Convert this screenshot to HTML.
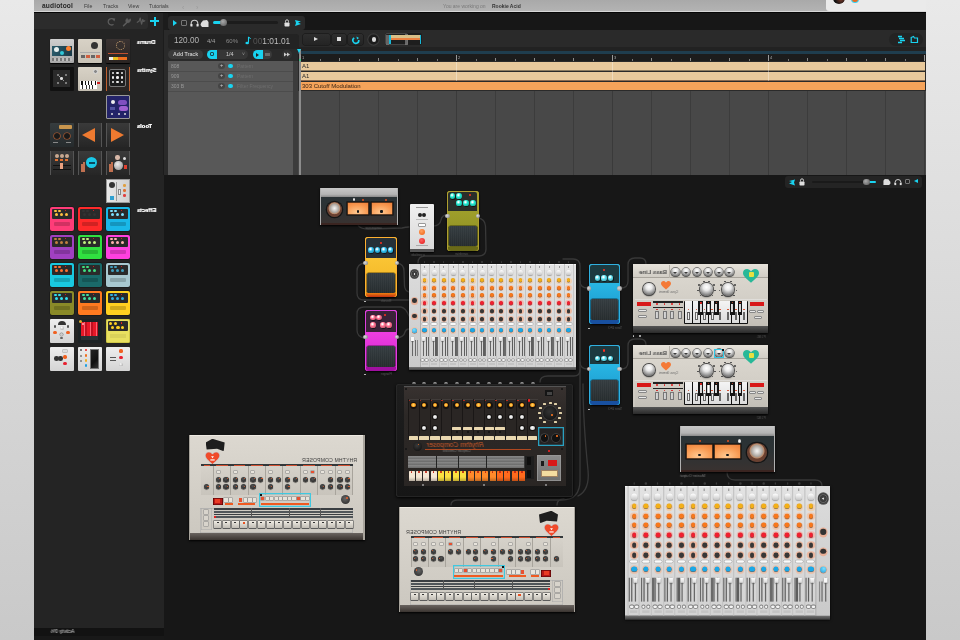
<!DOCTYPE html><html><head><meta charset="utf-8"><style>
*{margin:0;padding:0;box-sizing:border-box}
html,body{width:960px;height:640px;overflow:hidden;background:#d4d4d4;font-family:"Liberation Sans",sans-serif}
body>div,#app div{position:absolute}
body{-webkit-font-smoothing:antialiased}
</style></head><body><div style="left:0px;top:0px;width:960px;height:640px;background:linear-gradient(#e9e9e9 0%,#dcdcdc 40%,#c9c9c9 100%)"></div>
<div style="left:34px;top:0px;width:892px;height:640px;background:#171717"></div>
<div style="left:34px;top:0px;width:892px;height:12px;background:linear-gradient(#a9a9a9,#b3b3b3);border-bottom:1px solid #d6d6d6"></div>
<div style="left:34px;top:12px;width:892px;height:1px;background:#050505"></div>
<div style="left:42px;top:2.8px;font-size:6.6px;color:#262626;line-height:1;white-space:nowrap;will-change:transform;font-weight:bold;letter-spacing:0.15px">audiotool</div>
<div style="left:84px;top:3.8px;font-size:5.2px;color:#3e3e3e;line-height:1;white-space:nowrap;will-change:transform;">File</div>
<div style="left:102.5px;top:3.8px;font-size:5.2px;color:#3e3e3e;line-height:1;white-space:nowrap;will-change:transform;">Tracks</div>
<div style="left:127.5px;top:3.8px;font-size:5.2px;color:#3e3e3e;line-height:1;white-space:nowrap;will-change:transform;">View</div>
<div style="left:149px;top:3.8px;font-size:5.2px;color:#3e3e3e;line-height:1;white-space:nowrap;will-change:transform;">Tutorials</div>
<div style="left:182px;top:3.5px;font-size:7px;color:#9a9a9a;line-height:1;white-space:nowrap;will-change:transform;">&#8249;</div>
<div style="left:196px;top:3.5px;font-size:7px;color:#9a9a9a;line-height:1;white-space:nowrap;will-change:transform;">&#8250;</div>
<div style="left:442.5px;top:4px;font-size:5px;color:#7a7a7a;line-height:1;white-space:nowrap;will-change:transform;">You are working on</div>
<div style="left:491.5px;top:4px;font-size:5px;color:#333;line-height:1;white-space:nowrap;will-change:transform;font-weight:bold;">Rookie Acid</div>
<div style="left:826px;top:0px;width:100px;height:10.5px;background:#eaeaea;border-bottom-left-radius:3px"></div>
<div style="left:833px;top:-8.5px;width:12px;height:12px;border-radius:50%;background:radial-gradient(circle at 65% 60%,#7a3a2a,#111 55%)"></div>
<div style="left:852.2px;top:-3.8px;width:5.6px;height:5.6px;border-radius:50%;background:#e86a20;box-shadow:0 0 0 1px #3ad0f0"></div>
<div style="left:34px;top:13px;width:130px;height:627px;background:#242424"></div>
<div style="left:34px;top:13px;width:113.5px;height:16px;background:#2c2c2c;border-radius:0 3px 3px 0"></div>
<div style="left:163px;top:13px;width:5px;height:162px;background:#1c1c1c"></div>
<div style="left:34px;top:628px;width:130px;height:12px;background:#121212"></div>
<div style="left:34px;top:636px;width:130px;height:4px;background:#181818"></div>
<div style="left:50.8px;top:630.2px;font-size:4.8px;color:#d8d8d8;line-height:1;white-space:nowrap;will-change:transform;transform:scaleX(-1);">Activity 0%</div>
<svg style="position:absolute;left:107px;top:17px" width="9" height="9" viewBox="0 0 9 9"><path d="M7.2 3.2A3.2 3.2 0 1 0 6.5 7.2" fill="none" stroke="#5c5c5c" stroke-width="1.3"/><path d="M5 1.2L8.3 1.6L7.4 4.6Z" fill="#5c5c5c"/></svg>
<svg style="position:absolute;left:121.5px;top:16.5px" width="10" height="10" viewBox="0 0 10 10"><path d="M1.5 8.8L5.2 5.1" stroke="#5c5c5c" stroke-width="1.5" stroke-linecap="round"/><path d="M4.6 5.6A2.6 2.6 0 0 1 5.2 1.4L6.4 3.2 7.6 3 8.2 1.8A2.6 2.6 0 0 1 4.8 5.4" fill="#5c5c5c" stroke="#5c5c5c" stroke-width="0.8"/></svg>
<svg style="position:absolute;left:135.5px;top:16px" width="10" height="10" viewBox="0 0 10 10"><path d="M0.8 6.5L3 5.2 4.2 2 5.6 8.2 6.8 3.5 7.6 5.5 9.2 4.6" fill="none" stroke="#5a5a5a" stroke-width="1.2" stroke-linejoin="round"/></svg>
<div style="left:150.2px;top:20.4px;width:9.2px;height:2px;background:#19d3f0"></div>
<div style="left:153.8px;top:16.8px;width:2px;height:9.2px;background:#19d3f0"></div>
<div style="left:137px;top:40px;font-size:5.8px;color:#ffffff;line-height:1;white-space:nowrap;will-change:transform;font-weight:bold;transform:scaleX(-1);text-shadow:0 0 0.5px #fff">Drums</div>
<div style="left:137px;top:68px;font-size:5.8px;color:#ffffff;line-height:1;white-space:nowrap;will-change:transform;font-weight:bold;transform:scaleX(-1);text-shadow:0 0 0.5px #fff">Synths</div>
<div style="left:137px;top:124px;font-size:5.8px;color:#ffffff;line-height:1;white-space:nowrap;will-change:transform;font-weight:bold;transform:scaleX(-1);text-shadow:0 0 0.5px #fff">Tools</div>
<div style="left:137px;top:208px;font-size:5.8px;color:#ffffff;line-height:1;white-space:nowrap;will-change:transform;font-weight:bold;transform:scaleX(-1);text-shadow:0 0 0.5px #fff">Effects</div>
<div style="left:49.5px;top:38.5px;width:24px;height:24px;background:linear-gradient(#cfcfcf,#a8a8a8);border-radius:1px;box-shadow:0 1px 1px #000"><div style="position:absolute;left:2px;top:7px;width:20px;height:10px;background:linear-gradient(90deg,#2a5a6a,#1a3a48)"></div><div style="position:absolute;left:4.5px;top:8.5px;width:5.0px;height:5.0px;border-radius:50%;background:#e8f0f0"></div><div style="position:absolute;left:16.5px;top:7.5px;width:5.0px;height:5.0px;border-radius:50%;background:#ff8030"></div><div style="position:absolute;left:10px;top:12px;width:4px;height:4px;border-radius:50%;background:#30c8d8"></div><div style="position:absolute;left:2px;top:19px;width:20px;height:3px;background:repeating-linear-gradient(90deg,#777 0 2px,#bbb 2px 4px)"></div></div>
<div style="left:77.5px;top:38.5px;width:24px;height:24px;background:linear-gradient(#d8d2c6,#c8c2b6);border-radius:1px;box-shadow:0 1px 1px #000"><div style="position:absolute;left:13.5px;top:3.5px;width:7.0px;height:7.0px;border-radius:50%;background:#333"></div><div style="position:absolute;left:2px;top:13px;width:20px;height:1px;background:#aaa"></div><div style="position:absolute;left:3px;top:16px;width:4px;height:3px;background:#666"></div><div style="position:absolute;left:8px;top:16px;width:4px;height:3px;background:#d06040"></div><div style="position:absolute;left:13px;top:16px;width:4px;height:3px;background:#666"></div><div style="position:absolute;left:18px;top:16px;width:4px;height:3px;background:#d06040"></div></div>
<div style="left:105.5px;top:38.5px;width:24px;height:24px;background:linear-gradient(#3a3332,#2a2422);border-radius:1px;box-shadow:0 1px 1px #000"><div style="position:absolute;left:10.5px;top:2.5px;width:9.0px;height:9.0px;border-radius:50%;border:1.5px dotted #c8a070;"></div><div style="position:absolute;left:2px;top:14.5px;width:20px;height:1px;background:#c05030"></div><div style="position:absolute;left:3px;top:18px;width:18px;height:3.5px;background:linear-gradient(90deg,#eee 0 20%,#e8c020 20% 50%,#f07020 50%)"></div></div>
<div style="left:49.5px;top:66.5px;width:24px;height:24px;background:#111;border-radius:1px"><div style="position:absolute;left:3.5px;top:3.5px;width:17px;height:17px;background:#2a2a2a"></div><div style="position:absolute;left:7px;top:7px;width:2px;height:2px;border-radius:50%;background:#999"></div><div style="position:absolute;left:15px;top:7px;width:2px;height:2px;border-radius:50%;background:#999"></div><div style="position:absolute;left:10.7px;top:10.7px;width:2.6px;height:2.6px;border-radius:50%;background:#ddd"></div><div style="position:absolute;left:7px;top:15px;width:2px;height:2px;border-radius:50%;background:#999"></div><div style="position:absolute;left:15px;top:15px;width:2px;height:2px;border-radius:50%;background:#999"></div><div style="position:absolute;left:9.2px;top:9.2px;width:1.6px;height:1.6px;border-radius:50%;background:#bbb"></div><div style="position:absolute;left:13.2px;top:13.2px;width:1.6px;height:1.6px;border-radius:50%;background:#bbb"></div></div>
<div style="left:77.5px;top:66.5px;width:24px;height:24px;background:linear-gradient(#d8d2c6,#c4beb2);border-radius:1px"><div style="position:absolute;left:15.5px;top:2.5px;width:5.0px;height:5.0px;border-radius:50%;background:#888;border:1px solid #ddd"></div><div style="position:absolute;left:2px;top:14px;width:17px;height:8px;background:repeating-linear-gradient(90deg,#fff 0 2.5px,#333 2.5px 3.3px)"></div><div style="position:absolute;left:2px;top:14px;width:17px;height:4.5px;background:repeating-linear-gradient(90deg,#fff 0 1.5px,#111 1.5px 2.6px,#fff 2.6px 3.3px)"></div><div style="position:absolute;left:19.5px;top:15px;width:3px;height:2px;background:#d02020"></div></div>
<div style="left:105.5px;top:66.5px;width:24px;height:24px;background:#2a2624;border-left:1.5px solid #c06030;border-right:1.5px solid #c06030"><div style="position:absolute;left:2px;top:2px;width:17px;height:18px;background:#1c1c1c;border:1.5px solid #777;border-radius:2px"></div><div style="position:absolute;left:5.3px;top:5.3px;width:2.4px;height:2.4px;border-radius:50%;background:#eee"></div><div style="position:absolute;left:5.3px;top:9.8px;width:2.4px;height:2.4px;border-radius:50%;background:#eee"></div><div style="position:absolute;left:5.3px;top:14.3px;width:2.4px;height:2.4px;border-radius:50%;background:#eee"></div><div style="position:absolute;left:9.8px;top:5.3px;width:2.4px;height:2.4px;border-radius:50%;background:#eee"></div><div style="position:absolute;left:9.8px;top:9.8px;width:2.4px;height:2.4px;border-radius:50%;background:#eee"></div><div style="position:absolute;left:9.8px;top:14.3px;width:2.4px;height:2.4px;border-radius:50%;background:#eee"></div><div style="position:absolute;left:14.3px;top:5.3px;width:2.4px;height:2.4px;border-radius:50%;background:#eee"></div><div style="position:absolute;left:14.3px;top:9.8px;width:2.4px;height:2.4px;border-radius:50%;background:#eee"></div><div style="position:absolute;left:14.3px;top:14.3px;width:2.4px;height:2.4px;border-radius:50%;background:#eee"></div></div>
<div style="left:105.5px;top:94.5px;width:24px;height:24px;background:#232368;border:1.5px solid #999;border-radius:1px"><div style="position:absolute;left:4px;top:4px;width:4px;height:4px;border-radius:50%;background:#eee"></div><div style="position:absolute;left:11px;top:4px;width:9px;height:5px;background:#8050c0;border-radius:3px"></div><div style="position:absolute;left:12px;top:10px;width:9px;height:5px;background:#a060d0;border-radius:3px"></div><div style="position:absolute;left:3px;top:11px;width:5px;height:3px;background:#5050a0"></div><div style="position:absolute;left:4px;top:17px;width:2px;height:2px;border-radius:50%;background:#ddd"></div><div style="position:absolute;left:11px;top:17px;width:2px;height:2px;border-radius:50%;background:#ddd"></div><div style="position:absolute;left:17px;top:17px;width:2px;height:2px;border-radius:50%;background:#ddd"></div></div>
<div style="left:49.5px;top:122.5px;width:24px;height:24px;background:linear-gradient(#363c3e,#262b2d);border-radius:1px"><div style="position:absolute;left:9px;top:2px;width:13px;height:4px;background:#d8a050;border-radius:1px;opacity:0.9"></div><div style="position:absolute;left:4px;top:10px;width:6px;height:6px;border-radius:50%;background:#1a1a1a;box-shadow:0 0 0 0.6px #c06030"></div><div style="position:absolute;left:14px;top:10px;width:6px;height:6px;border-radius:50%;background:#1a1a1a;box-shadow:0 0 0 0.6px #c06030"></div><div style="position:absolute;left:3px;top:19px;width:5px;height:1.5px;background:#888"></div><div style="position:absolute;left:16px;top:19px;width:5px;height:1.5px;background:#888"></div></div>
<div style="left:77.5px;top:122.5px;width:24px;height:24px;background:linear-gradient(#3a3a3a,#262626);border-left:1.5px solid #555;border-right:1.5px solid #555"><div style="position:absolute;left:3px;top:5px;width:0;height:0;border-right:13px solid #ee7a30;border-top:7px solid transparent;border-bottom:7px solid transparent"></div></div>
<div style="left:105.5px;top:122.5px;width:24px;height:24px;background:linear-gradient(#3a3a3a,#262626);border-left:1.5px solid #555;border-right:1.5px solid #555"><div style="position:absolute;left:4px;top:5px;width:0;height:0;border-left:13px solid #ee7a30;border-top:7px solid transparent;border-bottom:7px solid transparent"></div></div>
<div style="left:49.5px;top:150.5px;width:24px;height:24px;background:linear-gradient(#3a3a3a,#262626);border-left:1.5px solid #555;border-right:1.5px solid #555"><div style="position:absolute;left:4px;top:3px;width:4px;height:4px;border-radius:50%;background:#c8a890"></div><div style="position:absolute;left:9px;top:3px;width:4px;height:4px;border-radius:50%;background:#c8a890"></div><div style="position:absolute;left:14px;top:3px;width:4px;height:4px;border-radius:50%;background:#c8a890"></div><div style="position:absolute;left:4px;top:8.5px;width:3px;height:2px;background:#e07030"></div><div style="position:absolute;left:9.5px;top:8.5px;width:3px;height:2px;background:#e07030"></div><div style="position:absolute;left:14.5px;top:8.5px;width:3px;height:2px;background:#e07030"></div><div style="position:absolute;left:2px;top:14px;width:18px;height:1px;background:#111"></div><div style="position:absolute;left:9.5px;top:12px;width:3px;height:6px;background:#e8a080"></div><div style="position:absolute;left:2px;top:18px;width:18px;height:1px;background:#111"></div></div>
<div style="left:77.5px;top:150.5px;width:24px;height:24px;background:linear-gradient(#3a3a3a,#262626);border-left:1.5px solid #555;border-right:1.5px solid #555"><div style="position:absolute;left:2px;top:13px;width:2px;height:8px;background:#c07050"></div><div style="position:absolute;left:4.5px;top:11px;width:2px;height:10px;background:#c07050"></div><div style="position:absolute;left:7.5px;top:6.5px;width:11.0px;height:11.0px;border-radius:50%;background:#19c8e8"></div><div style="position:absolute;left:10px;top:11px;width:6px;height:2px;background:#0a4a60"></div></div>
<div style="left:105.5px;top:150.5px;width:24px;height:24px;background:linear-gradient(#3a3a3a,#262626);border-left:1.5px solid #555;border-right:1.5px solid #555"><div style="position:absolute;left:2px;top:13px;width:2px;height:8px;background:#c07050"></div><div style="position:absolute;left:4.5px;top:11px;width:2px;height:10px;background:#c07050"></div><div style="position:absolute;left:8.8px;top:4.8px;width:4.4px;height:4.4px;border-radius:50%;background:#d8b8a8"></div><div style="position:absolute;left:7.8px;top:10.8px;width:8.4px;height:8.4px;border-radius:50%;background:radial-gradient(circle at 40% 35%,#eee,#888)"></div><div style="position:absolute;left:16.5px;top:6.5px;width:3.0px;height:3.0px;border-radius:50%;background:#ddd"></div><div style="position:absolute;left:17px;top:14px;width:3px;height:4px;background:#e04030"></div></div>
<div style="left:105.5px;top:178.5px;width:24px;height:24px;background:linear-gradient(90deg,#e8e8e8,#d0d0d0);border:1px solid #999"><div style="position:absolute;left:2px;top:2px;width:6px;height:6px;border-radius:50%;background:#333"></div><div style="position:absolute;left:9px;top:2px;width:1px;height:19px;background:#999"></div><div style="position:absolute;left:11px;top:9px;width:3px;height:6px;background:#eee;border:1px solid #888"></div><div style="position:absolute;left:16.7px;top:4.7px;width:2.6px;height:2.6px;border-radius:50%;background:#e0a040"></div><div style="position:absolute;left:16.7px;top:9.7px;width:2.6px;height:2.6px;border-radius:50%;background:#e07030"></div><div style="position:absolute;left:16.7px;top:14.7px;width:2.6px;height:2.6px;border-radius:50%;background:#e04040"></div><div style="position:absolute;left:3px;top:16px;width:4px;height:4px;background:#30a0d0"></div></div>
<div style="left:49.5px;top:206.5px;width:24px;height:24px;background:#ff3c78;border-radius:2px;box-shadow:0 0 0 0.5px rgba(0,0,0,0.5)"><div style="position:absolute;left:2px;top:2px;width:20px;height:10px;background:#2a2a2a;border-radius:1px"></div><div style="position:absolute;left:5.2px;top:6.2px;width:3.6px;height:3.6px;border-radius:50%;background:#ffc040"></div><div style="position:absolute;left:10.2px;top:6.2px;width:3.6px;height:3.6px;border-radius:50%;background:#ffc040"></div><div style="position:absolute;left:15.2px;top:6.2px;width:3.6px;height:3.6px;border-radius:50%;background:#ffc040"></div><div style="position:absolute;left:4.8px;top:3.3px;width:2.4px;height:2.4px;border-radius:50%;background:#ffc040"></div><div style="position:absolute;left:8.8px;top:3.3px;width:2.4px;height:2.4px;border-radius:50%;background:#ffc040"></div><div style="position:absolute;left:15.2px;top:3.2px;width:1.6px;height:1.6px;border-radius:50%;background:#ff2020"></div><div style="position:absolute;left:4px;top:15px;width:16px;height:4px;background:rgba(0,0,0,0.18);border-radius:1px"></div></div>
<div style="left:77.5px;top:206.5px;width:24px;height:24px;background:#ff2a2a;border-radius:2px;box-shadow:0 0 0 0.5px rgba(0,0,0,0.5)"><div style="position:absolute;left:2px;top:2px;width:20px;height:10px;background:#2a2a2a;border-radius:1px"></div><div style="position:absolute;left:5.2px;top:6.2px;width:3.6px;height:3.6px;border-radius:50%;background:#333"></div><div style="position:absolute;left:10.2px;top:6.2px;width:3.6px;height:3.6px;border-radius:50%;background:#333"></div><div style="position:absolute;left:15.2px;top:6.2px;width:3.6px;height:3.6px;border-radius:50%;background:#333"></div><div style="position:absolute;left:4.8px;top:3.3px;width:2.4px;height:2.4px;border-radius:50%;background:#333"></div><div style="position:absolute;left:8.8px;top:3.3px;width:2.4px;height:2.4px;border-radius:50%;background:#333"></div><div style="position:absolute;left:15.2px;top:3.2px;width:1.6px;height:1.6px;border-radius:50%;background:#ff2020"></div><div style="position:absolute;left:4px;top:15px;width:16px;height:4px;background:rgba(0,0,0,0.18);border-radius:1px"></div></div>
<div style="left:105.5px;top:206.5px;width:24px;height:24px;background:#19b8e8;border-radius:2px;box-shadow:0 0 0 0.5px rgba(0,0,0,0.5)"><div style="position:absolute;left:2px;top:2px;width:20px;height:10px;background:#2a2a2a;border-radius:1px"></div><div style="position:absolute;left:5.2px;top:6.2px;width:3.6px;height:3.6px;border-radius:50%;background:#7de0ff"></div><div style="position:absolute;left:10.2px;top:6.2px;width:3.6px;height:3.6px;border-radius:50%;background:#7de0ff"></div><div style="position:absolute;left:15.2px;top:6.2px;width:3.6px;height:3.6px;border-radius:50%;background:#7de0ff"></div><div style="position:absolute;left:4.8px;top:3.3px;width:2.4px;height:2.4px;border-radius:50%;background:#7de0ff"></div><div style="position:absolute;left:8.8px;top:3.3px;width:2.4px;height:2.4px;border-radius:50%;background:#7de0ff"></div><div style="position:absolute;left:15.2px;top:3.2px;width:1.6px;height:1.6px;border-radius:50%;background:#ff2020"></div><div style="position:absolute;left:4px;top:15px;width:16px;height:4px;background:rgba(0,0,0,0.18);border-radius:1px"></div></div>
<div style="left:49.5px;top:234.5px;width:24px;height:24px;background:#a040c0;border-radius:2px;box-shadow:0 0 0 0.5px rgba(0,0,0,0.5)"><div style="position:absolute;left:2px;top:2px;width:20px;height:10px;background:#2a2a2a;border-radius:1px"></div><div style="position:absolute;left:5.2px;top:6.2px;width:3.6px;height:3.6px;border-radius:50%;background:#c08040"></div><div style="position:absolute;left:10.2px;top:6.2px;width:3.6px;height:3.6px;border-radius:50%;background:#c08040"></div><div style="position:absolute;left:15.2px;top:6.2px;width:3.6px;height:3.6px;border-radius:50%;background:#c08040"></div><div style="position:absolute;left:4.8px;top:3.3px;width:2.4px;height:2.4px;border-radius:50%;background:#c08040"></div><div style="position:absolute;left:8.8px;top:3.3px;width:2.4px;height:2.4px;border-radius:50%;background:#c08040"></div><div style="position:absolute;left:15.2px;top:3.2px;width:1.6px;height:1.6px;border-radius:50%;background:#ff2020"></div><div style="position:absolute;left:4px;top:15px;width:16px;height:4px;background:rgba(0,0,0,0.18);border-radius:1px"></div></div>
<div style="left:77.5px;top:234.5px;width:24px;height:24px;background:#30e040;border-radius:2px;box-shadow:0 0 0 0.5px rgba(0,0,0,0.5)"><div style="position:absolute;left:2px;top:2px;width:20px;height:10px;background:#2a2a2a;border-radius:1px"></div><div style="position:absolute;left:5.2px;top:6.2px;width:3.6px;height:3.6px;border-radius:50%;background:#c0f080"></div><div style="position:absolute;left:10.2px;top:6.2px;width:3.6px;height:3.6px;border-radius:50%;background:#c0f080"></div><div style="position:absolute;left:15.2px;top:6.2px;width:3.6px;height:3.6px;border-radius:50%;background:#c0f080"></div><div style="position:absolute;left:4.8px;top:3.3px;width:2.4px;height:2.4px;border-radius:50%;background:#c0f080"></div><div style="position:absolute;left:8.8px;top:3.3px;width:2.4px;height:2.4px;border-radius:50%;background:#c0f080"></div><div style="position:absolute;left:15.2px;top:3.2px;width:1.6px;height:1.6px;border-radius:50%;background:#ff2020"></div><div style="position:absolute;left:4px;top:15px;width:16px;height:4px;background:rgba(0,0,0,0.18);border-radius:1px"></div></div>
<div style="left:105.5px;top:234.5px;width:24px;height:24px;background:#ff40e0;border-radius:2px;box-shadow:0 0 0 0.5px rgba(0,0,0,0.5)"><div style="position:absolute;left:2px;top:2px;width:20px;height:10px;background:#2a2a2a;border-radius:1px"></div><div style="position:absolute;left:5.2px;top:6.2px;width:3.6px;height:3.6px;border-radius:50%;background:#ffb0b0"></div><div style="position:absolute;left:10.2px;top:6.2px;width:3.6px;height:3.6px;border-radius:50%;background:#ffb0b0"></div><div style="position:absolute;left:15.2px;top:6.2px;width:3.6px;height:3.6px;border-radius:50%;background:#ffb0b0"></div><div style="position:absolute;left:4.8px;top:3.3px;width:2.4px;height:2.4px;border-radius:50%;background:#ffb0b0"></div><div style="position:absolute;left:8.8px;top:3.3px;width:2.4px;height:2.4px;border-radius:50%;background:#ffb0b0"></div><div style="position:absolute;left:15.2px;top:3.2px;width:1.6px;height:1.6px;border-radius:50%;background:#ff2020"></div><div style="position:absolute;left:4px;top:15px;width:16px;height:4px;background:rgba(0,0,0,0.18);border-radius:1px"></div></div>
<div style="left:49.5px;top:262.5px;width:24px;height:24px;background:#19c8e0;border-radius:2px;box-shadow:0 0 0 0.5px rgba(0,0,0,0.5)"><div style="position:absolute;left:2px;top:2px;width:20px;height:10px;background:#2a2a2a;border-radius:1px"></div><div style="position:absolute;left:5.2px;top:6.2px;width:3.6px;height:3.6px;border-radius:50%;background:#ff7030"></div><div style="position:absolute;left:10.2px;top:6.2px;width:3.6px;height:3.6px;border-radius:50%;background:#ff7030"></div><div style="position:absolute;left:15.2px;top:6.2px;width:3.6px;height:3.6px;border-radius:50%;background:#ff7030"></div><div style="position:absolute;left:4.8px;top:3.3px;width:2.4px;height:2.4px;border-radius:50%;background:#ff7030"></div><div style="position:absolute;left:8.8px;top:3.3px;width:2.4px;height:2.4px;border-radius:50%;background:#ff7030"></div><div style="position:absolute;left:15.2px;top:3.2px;width:1.6px;height:1.6px;border-radius:50%;background:#ff2020"></div><div style="position:absolute;left:4px;top:15px;width:16px;height:4px;background:rgba(0,0,0,0.18);border-radius:1px"></div></div>
<div style="left:77.5px;top:262.5px;width:24px;height:24px;background:#1a6a6a;border-radius:2px;box-shadow:0 0 0 0.5px rgba(0,0,0,0.5)"><div style="position:absolute;left:2px;top:2px;width:20px;height:10px;background:#2a2a2a;border-radius:1px"></div><div style="position:absolute;left:5.2px;top:6.2px;width:3.6px;height:3.6px;border-radius:50%;background:#40e080"></div><div style="position:absolute;left:10.2px;top:6.2px;width:3.6px;height:3.6px;border-radius:50%;background:#40e080"></div><div style="position:absolute;left:15.2px;top:6.2px;width:3.6px;height:3.6px;border-radius:50%;background:#40e080"></div><div style="position:absolute;left:4.8px;top:3.3px;width:2.4px;height:2.4px;border-radius:50%;background:#40e080"></div><div style="position:absolute;left:8.8px;top:3.3px;width:2.4px;height:2.4px;border-radius:50%;background:#40e080"></div><div style="position:absolute;left:15.2px;top:3.2px;width:1.6px;height:1.6px;border-radius:50%;background:#ff2020"></div><div style="position:absolute;left:4px;top:15px;width:16px;height:4px;background:rgba(0,0,0,0.18);border-radius:1px"></div></div>
<div style="left:105.5px;top:262.5px;width:24px;height:24px;background:#a8c8d0;border-radius:2px;box-shadow:0 0 0 0.5px rgba(0,0,0,0.5)"><div style="position:absolute;left:2px;top:2px;width:20px;height:10px;background:#2a2a2a;border-radius:1px"></div><div style="position:absolute;left:5.2px;top:6.2px;width:3.6px;height:3.6px;border-radius:50%;background:#40a0c0"></div><div style="position:absolute;left:10.2px;top:6.2px;width:3.6px;height:3.6px;border-radius:50%;background:#40a0c0"></div><div style="position:absolute;left:15.2px;top:6.2px;width:3.6px;height:3.6px;border-radius:50%;background:#40a0c0"></div><div style="position:absolute;left:4.8px;top:3.3px;width:2.4px;height:2.4px;border-radius:50%;background:#40a0c0"></div><div style="position:absolute;left:8.8px;top:3.3px;width:2.4px;height:2.4px;border-radius:50%;background:#40a0c0"></div><div style="position:absolute;left:15.2px;top:3.2px;width:1.6px;height:1.6px;border-radius:50%;background:#ff2020"></div><div style="position:absolute;left:4px;top:15px;width:16px;height:4px;background:rgba(0,0,0,0.18);border-radius:1px"></div></div>
<div style="left:49.5px;top:290.5px;width:24px;height:24px;background:#8a8a28;border-radius:2px;box-shadow:0 0 0 0.5px rgba(0,0,0,0.5)"><div style="position:absolute;left:2px;top:2px;width:20px;height:10px;background:#2a2a2a;border-radius:1px"></div><div style="position:absolute;left:5.2px;top:6.2px;width:3.6px;height:3.6px;border-radius:50%;background:#30e0f0"></div><div style="position:absolute;left:10.2px;top:6.2px;width:3.6px;height:3.6px;border-radius:50%;background:#30e0f0"></div><div style="position:absolute;left:15.2px;top:6.2px;width:3.6px;height:3.6px;border-radius:50%;background:#30e0f0"></div><div style="position:absolute;left:4.8px;top:3.3px;width:2.4px;height:2.4px;border-radius:50%;background:#30e0f0"></div><div style="position:absolute;left:8.8px;top:3.3px;width:2.4px;height:2.4px;border-radius:50%;background:#30e0f0"></div><div style="position:absolute;left:15.2px;top:3.2px;width:1.6px;height:1.6px;border-radius:50%;background:#ff2020"></div><div style="position:absolute;left:4px;top:15px;width:16px;height:4px;background:rgba(0,0,0,0.18);border-radius:1px"></div></div>
<div style="left:77.5px;top:290.5px;width:24px;height:24px;background:#ff7a20;border-radius:2px;box-shadow:0 0 0 0.5px rgba(0,0,0,0.5)"><div style="position:absolute;left:2px;top:2px;width:20px;height:10px;background:#2a2a2a;border-radius:1px"></div><div style="position:absolute;left:5.2px;top:6.2px;width:3.6px;height:3.6px;border-radius:50%;background:#40e0a0"></div><div style="position:absolute;left:10.2px;top:6.2px;width:3.6px;height:3.6px;border-radius:50%;background:#40e0a0"></div><div style="position:absolute;left:15.2px;top:6.2px;width:3.6px;height:3.6px;border-radius:50%;background:#40e0a0"></div><div style="position:absolute;left:4.8px;top:3.3px;width:2.4px;height:2.4px;border-radius:50%;background:#40e0a0"></div><div style="position:absolute;left:8.8px;top:3.3px;width:2.4px;height:2.4px;border-radius:50%;background:#40e0a0"></div><div style="position:absolute;left:15.2px;top:3.2px;width:1.6px;height:1.6px;border-radius:50%;background:#ff2020"></div><div style="position:absolute;left:4px;top:15px;width:16px;height:4px;background:rgba(0,0,0,0.18);border-radius:1px"></div></div>
<div style="left:105.5px;top:290.5px;width:24px;height:24px;background:#ffd020;border-radius:2px;box-shadow:0 0 0 0.5px rgba(0,0,0,0.5)"><div style="position:absolute;left:2px;top:2px;width:20px;height:10px;background:#2a2a2a;border-radius:1px"></div><div style="position:absolute;left:5.2px;top:6.2px;width:3.6px;height:3.6px;border-radius:50%;background:#30b0e0"></div><div style="position:absolute;left:10.2px;top:6.2px;width:3.6px;height:3.6px;border-radius:50%;background:#30b0e0"></div><div style="position:absolute;left:15.2px;top:6.2px;width:3.6px;height:3.6px;border-radius:50%;background:#30b0e0"></div><div style="position:absolute;left:4.8px;top:3.3px;width:2.4px;height:2.4px;border-radius:50%;background:#30b0e0"></div><div style="position:absolute;left:8.8px;top:3.3px;width:2.4px;height:2.4px;border-radius:50%;background:#30b0e0"></div><div style="position:absolute;left:15.2px;top:3.2px;width:1.6px;height:1.6px;border-radius:50%;background:#ff2020"></div><div style="position:absolute;left:4px;top:15px;width:16px;height:4px;background:rgba(0,0,0,0.18);border-radius:1px"></div></div>
<div style="left:49.5px;top:318.5px;width:24px;height:24px;background:linear-gradient(#eee,#d4d4d4);border-radius:1px"><div style="position:absolute;left:8px;top:2px;width:8px;height:4px;background:#333;border-radius:4px 4px 0 0"></div><div style="position:absolute;left:4.2px;top:6.7px;width:2.6px;height:2.6px;border-radius:50%;background:#555"></div><div style="position:absolute;left:17.2px;top:6.7px;width:2.6px;height:2.6px;border-radius:50%;background:#555"></div><div style="position:absolute;left:10px;top:7.5px;width:4px;height:4px;border-radius:50%;background:radial-gradient(circle at 40% 35%,#fff,#999)"></div><div style="position:absolute;left:3.8px;top:12.3px;width:3.4px;height:3.4px;border-radius:50%;background:#f06020"></div><div style="position:absolute;left:16.8px;top:12.3px;width:3.4px;height:3.4px;border-radius:50%;background:#f06020"></div><div style="position:absolute;left:10.5px;top:14.0px;width:3.0px;height:3.0px;border-radius:50%;background:#ccc;box-shadow:0 0 0 0.5px #888"></div><div style="position:absolute;left:10.8px;top:18.3px;width:2.4px;height:2.4px;border-radius:50%;background:#666"></div></div>
<div style="left:77.5px;top:318.5px;width:24px;height:24px;background:#1c2224;border-radius:1px"><div style="position:absolute;left:3.5px;top:3.5px;width:17px;height:14px;background:repeating-linear-gradient(90deg,#e81828 0 3px,#ff6070 3px 4px,#c01020 4px 6px)"></div><div style="position:absolute;left:3.5px;top:17.5px;width:17px;height:4px;background:#2a3034"></div><div style="position:absolute;left:1.0px;top:1.0px;width:3.0px;height:3.0px;border-radius:50%;background:#e0b030"></div><div style="position:absolute;left:4px;top:4.5px;width:2px;height:2px;border-radius:50%;background:#fff;opacity:0.7"></div></div>
<div style="left:105.5px;top:318.5px;width:24px;height:24px;background:#e8e060;border-radius:2px;box-shadow:inset 0 0 0 0.8px #c8c040"><div style="position:absolute;left:2px;top:2px;width:20px;height:10px;background:#2a2a2a;border-radius:1px"></div><div style="position:absolute;left:3.5px;top:3.5px;width:3.0px;height:3.0px;border-radius:50%;background:#ffd020"></div><div style="position:absolute;left:8.0px;top:3.5px;width:3.0px;height:3.0px;border-radius:50%;background:#ffd020"></div><div style="position:absolute;left:5.4px;top:7.4px;width:3.2px;height:3.2px;border-radius:50%;background:#ffd020"></div><div style="position:absolute;left:10.9px;top:7.4px;width:3.2px;height:3.2px;border-radius:50%;background:#ffd020"></div><div style="position:absolute;left:15.4px;top:7.4px;width:3.2px;height:3.2px;border-radius:50%;background:#ffd020"></div><div style="position:absolute;left:15.2px;top:3.7px;width:1.6px;height:1.6px;border-radius:50%;background:#ff2020"></div><div style="position:absolute;left:4px;top:15px;width:16px;height:4px;background:rgba(0,0,0,0.06)"></div></div>
<div style="left:49.5px;top:346.5px;width:24px;height:24px;background:linear-gradient(#eee,#d4d4d4);border-radius:1px"><div style="position:absolute;left:4.7px;top:9.7px;width:4.6px;height:4.6px;border-radius:50%;background:#333"></div><div style="position:absolute;left:8.7px;top:9.7px;width:4.6px;height:4.6px;border-radius:50%;background:#333"></div><div style="position:absolute;left:13.5px;top:3px;width:4px;height:2.5px;background:#ddd;box-shadow:0 0 0 0.5px #999"></div><div style="position:absolute;left:13.8px;top:8.8px;width:3.4px;height:3.4px;border-radius:50%;background:#f06020"></div><div style="position:absolute;left:13.8px;top:15.3px;width:3.4px;height:3.4px;border-radius:50%;background:#e82030"></div></div>
<div style="left:77.5px;top:346.5px;width:24px;height:24px;background:linear-gradient(#eee,#d4d4d4);border-radius:1px"><div style="position:absolute;left:12.5px;top:2px;width:9px;height:20px;background:linear-gradient(135deg,#222,#111 60%,#333);border:1px solid #777"></div><div style="position:absolute;left:2.5px;top:2.5px;width:2px;height:2px;border-radius:50%;background:#555"></div><div style="position:absolute;left:2.5px;top:8px;width:2px;height:2px;border-radius:50%;background:#777"></div><div style="position:absolute;left:2.5px;top:13px;width:2px;height:2px;border-radius:50%;background:#777"></div><div style="position:absolute;left:7.3px;top:2.3px;width:2.4px;height:2.4px;border-radius:50%;background:#e82020"></div><div style="position:absolute;left:7.3px;top:7.8px;width:2.4px;height:2.4px;border-radius:50%;background:#f07020"></div><div style="position:absolute;left:7.3px;top:12.8px;width:2.4px;height:2.4px;border-radius:50%;background:#f0b020"></div><div style="position:absolute;left:7.3px;top:17.8px;width:2.4px;height:2.4px;border-radius:50%;background:#20a0e0"></div></div>
<div style="left:105.5px;top:346.5px;width:24px;height:24px;background:linear-gradient(#eee,#d4d4d4);border-radius:1px"><div style="position:absolute;left:13.9px;top:2.9px;width:3.2px;height:3.2px;border-radius:50%;background:#f06020"></div><div style="position:absolute;left:13.9px;top:9.4px;width:3.2px;height:3.2px;border-radius:50%;background:#e82030"></div><div style="position:absolute;left:13.8px;top:16.3px;width:3.4px;height:3.4px;border-radius:50%;background:radial-gradient(circle at 40% 35%,#fff,#999)"></div><div style="position:absolute;left:4px;top:10px;width:6px;height:1px;background:#555"></div><div style="position:absolute;left:4px;top:13px;width:6px;height:1px;background:#555"></div></div>
<div style="left:168px;top:16px;width:137px;height:14px;background:#2a2a2a;border-radius:3px"></div>
<div style="left:164px;top:30px;width:762px;height:145px;background:#2a2a2a"></div>
<div style="left:168px;top:34px;width:131px;height:15px;background:#232323;border-radius:3px"></div>
<div style="left:168px;top:61px;width:125px;height:114px;background:#585858"></div>
<div style="left:293px;top:61px;width:5px;height:114px;background:#3c3c3c"></div>
<div style="left:298px;top:47.2px;width:628px;height:3.4px;background:#222"></div>
<div style="left:298px;top:50.5px;width:628px;height:4px;background:#1f3d4e"></div>
<div style="left:298px;top:54px;width:628px;height:7px;background:#1c1c1c"></div>
<div style="left:298px;top:91px;width:628px;height:84px;background:#484848"></div>
<div style="left:300px;top:61.5px;width:625px;height:9.5px;background:#e8c99c;border-bottom:1px solid #8a7a60"></div>
<div style="left:300px;top:71.5px;width:625px;height:9.5px;background:#e8c99c;border-bottom:1px solid #8a6a50"></div>
<div style="left:300px;top:81.5px;width:625px;height:9.5px;background:#f5a35a;border-bottom:1px solid #2a2a2a"></div>
<div style="left:299px;top:49px;width:1.5px;height:126px;background:#8c8c8c"></div>
<div style="left:173px;top:20px;width:0;height:0;border-left:4px solid #19d3f0;border-top:3px solid transparent;border-bottom:3px solid transparent"></div>
<div style="left:181px;top:19.5px;width:6px;height:6px;border:1px solid #777;border-radius:1px"></div>
<svg style="position:absolute;left:190px;top:19px" width="9" height="8" viewBox="0 0 9 8"><path d="M1.2 7V4.5a3.3 3.3 0 0 1 6.6 0V7" fill="none" stroke="#cfcfcf" stroke-width="1.1"/><rect x="0.5" y="5" width="2" height="2.5" fill="#e0e0e0"/><rect x="6.5" y="5" width="2" height="2.5" fill="#e0e0e0"/></svg>
<svg style="position:absolute;left:200px;top:18.5px" width="9" height="9" viewBox="0 0 9 9"><path d="M1 4 L3 1.5 L7 1 L8.5 3 L8.5 8 L2 8 L0.5 6 Z" fill="#dedede"/></svg>
<div style="left:222px;top:21px;width:56px;height:3px;background:#1c1c1c;border-radius:1.5px"></div>
<div style="left:213px;top:21px;width:10px;height:3px;background:#19d3f0;border-radius:1.5px"></div>
<div style="left:220.0px;top:19.0px;width:7.0px;height:7.0px;border-radius:50%;background:radial-gradient(circle at 40% 35%,#aaa,#555)"></div>
<svg style="position:absolute;left:284px;top:19px" width="6" height="8" viewBox="0 0 6 8"><path d="M1.5 3.5V2.3a1.5 1.5 0 0 1 3 0V3.5" fill="none" stroke="#ddd" stroke-width="0.9"/><rect x="0.5" y="3.5" width="5" height="4" rx="0.8" fill="#e0e0e0"/></svg>
<svg style="position:absolute;left:294px;top:19px" width="8" height="8" viewBox="0 0 8 8"><path d="M1 1 L7 2.5 L4 3.5 L7 5 L1 7 L2 4 Z" fill="#19d3f0"/></svg>
<div style="left:173.8px;top:37px;font-size:8.2px;color:#b5b5b5;line-height:1;white-space:nowrap;will-change:transform;">120.00</div>
<div style="left:207px;top:38px;font-size:6px;color:#a0a0a0;line-height:1;white-space:nowrap;will-change:transform;">4/4</div>
<div style="left:226px;top:38px;font-size:6px;color:#8a8a8a;line-height:1;white-space:nowrap;will-change:transform;">60%</div>
<svg style="position:absolute;left:244.5px;top:36px" width="6" height="9" viewBox="0 0 6 9"><path d="M3.5 1 L3.5 6.5" stroke="#19d3f0" stroke-width="1.1"/><path d="M3.5 1 Q5 1.5 5.5 3" stroke="#19d3f0" fill="none" stroke-width="1"/><ellipse cx="2.2" cy="7" rx="1.8" ry="1.3" fill="#19d3f0"/></svg>
<div style="left:252.5px;top:37px;font-size:8.4px;color:#bdbdbd;line-height:1;white-space:nowrap;will-change:transform;"><span style="color:#555">00</span>1:01.01</div>
<div style="left:168px;top:50px;width:34.5px;height:8.5px;background:#3a3a3a;border-radius:4.5px"></div>
<div style="left:172.5px;top:51.8px;font-size:5.2px;color:#c8c8c8;line-height:1;white-space:nowrap;will-change:transform;font-weight:bold;">Add Track</div>
<div style="left:206.5px;top:50px;width:10.5px;height:8.5px;background:#19d3f0;border-radius:4.5px 0 0 4.5px"></div>
<div style="left:209.5px;top:52.3px;width:4px;height:4px;border:1px solid #1a4a55;border-radius:1px"></div>
<div style="left:217px;top:50px;width:30.5px;height:8.5px;background:#363636;border-radius:0 4.5px 4.5px 0"></div>
<div style="left:226px;top:52px;font-size:5.5px;color:#cfcfcf;line-height:1;white-space:nowrap;will-change:transform;">1/4</div>
<div style="left:242px;top:51.5px;font-size:5px;color:#999;line-height:1;white-space:nowrap;will-change:transform;">&#709;</div>
<div style="left:252.5px;top:50px;width:10px;height:8.5px;background:#19d3f0;border-radius:4.5px 0 0 4.5px"></div>
<div style="left:256px;top:52.5px;width:0;height:0;border-left:3.5px solid #222;border-top:2px solid transparent;border-bottom:2px solid transparent"></div>
<div style="left:262.5px;top:50px;width:9.5px;height:8.5px;background:#3a3a3a;border-radius:0 4.5px 4.5px 0"></div>
<div style="left:265px;top:52.5px;width:4.5px;height:3.5px;background:#6a6a6a"></div>
<div style="left:282.4px;top:49.699999999999996px;width:9.2px;height:9.2px;border-radius:50%;background:#333"></div>
<svg style="position:absolute;left:284px;top:52px" width="6" height="5" viewBox="0 0 6 5"><path d="M0 0.5L3 2.5L0 4.5ZM3 0.5L6 2.5L3 4.5Z" fill="#ccc"/></svg>
<div style="left:168px;top:70.5px;width:125px;height:0.8px;background:#4c4c4c"></div>
<div style="left:171px;top:64px;font-size:5px;color:#999;line-height:1;white-space:nowrap;will-change:transform;">808</div>
<div style="left:218.39999999999998px;top:62.7px;width:6.6px;height:6.6px;border-radius:50%;background:#454545"></div>
<div style="left:219.9px;top:63.2px;font-size:5.5px;color:#ccc;line-height:1;white-space:nowrap;will-change:transform;">+</div>
<div style="left:228.4px;top:63.6px;width:4.8px;height:4.8px;border-radius:50%;background:#19d3f0"></div>
<div style="left:237px;top:64px;font-size:5px;color:#6e6e6e;line-height:1;white-space:nowrap;will-change:transform;">Pattern</div>
<div style="left:168px;top:80.5px;width:125px;height:0.8px;background:#4c4c4c"></div>
<div style="left:171px;top:74px;font-size:5px;color:#999;line-height:1;white-space:nowrap;will-change:transform;">909</div>
<div style="left:218.39999999999998px;top:72.7px;width:6.6px;height:6.6px;border-radius:50%;background:#454545"></div>
<div style="left:219.9px;top:73.2px;font-size:5.5px;color:#ccc;line-height:1;white-space:nowrap;will-change:transform;">+</div>
<div style="left:228.4px;top:73.6px;width:4.8px;height:4.8px;border-radius:50%;background:#19d3f0"></div>
<div style="left:237px;top:74px;font-size:5px;color:#6e6e6e;line-height:1;white-space:nowrap;will-change:transform;">Pattern</div>
<div style="left:168px;top:90.5px;width:125px;height:0.8px;background:#4c4c4c"></div>
<div style="left:171px;top:84px;font-size:5px;color:#999;line-height:1;white-space:nowrap;will-change:transform;">303 B</div>
<div style="left:218.39999999999998px;top:82.7px;width:6.6px;height:6.6px;border-radius:50%;background:#454545"></div>
<div style="left:219.9px;top:83.2px;font-size:5.5px;color:#ccc;line-height:1;white-space:nowrap;will-change:transform;">+</div>
<div style="left:228.4px;top:83.6px;width:4.8px;height:4.8px;border-radius:50%;background:#19d3f0"></div>
<div style="left:237px;top:84px;font-size:5px;color:#6e6e6e;line-height:1;white-space:nowrap;will-change:transform;">Filter Frequency</div>
<div style="left:300.0px;top:54.5px;width:0.8px;height:6px;background:#999"></div>
<div style="left:319.5px;top:59px;width:0.8px;height:1.5px;background:#777"></div>
<div style="left:339.0px;top:57.5px;width:0.8px;height:3px;background:#8a8a8a"></div>
<div style="left:358.5px;top:59px;width:0.8px;height:1.5px;background:#777"></div>
<div style="left:378.0px;top:57.5px;width:0.8px;height:3px;background:#8a8a8a"></div>
<div style="left:397.5px;top:59px;width:0.8px;height:1.5px;background:#777"></div>
<div style="left:417.0px;top:57.5px;width:0.8px;height:3px;background:#8a8a8a"></div>
<div style="left:436.5px;top:59px;width:0.8px;height:1.5px;background:#777"></div>
<div style="left:456.0px;top:54.5px;width:0.8px;height:6px;background:#999"></div>
<div style="left:475.5px;top:59px;width:0.8px;height:1.5px;background:#777"></div>
<div style="left:495.0px;top:57.5px;width:0.8px;height:3px;background:#8a8a8a"></div>
<div style="left:514.5px;top:59px;width:0.8px;height:1.5px;background:#777"></div>
<div style="left:534.0px;top:57.5px;width:0.8px;height:3px;background:#8a8a8a"></div>
<div style="left:553.5px;top:59px;width:0.8px;height:1.5px;background:#777"></div>
<div style="left:573.0px;top:57.5px;width:0.8px;height:3px;background:#8a8a8a"></div>
<div style="left:592.5px;top:59px;width:0.8px;height:1.5px;background:#777"></div>
<div style="left:612.0px;top:54.5px;width:0.8px;height:6px;background:#999"></div>
<div style="left:631.5px;top:59px;width:0.8px;height:1.5px;background:#777"></div>
<div style="left:651.0px;top:57.5px;width:0.8px;height:3px;background:#8a8a8a"></div>
<div style="left:670.5px;top:59px;width:0.8px;height:1.5px;background:#777"></div>
<div style="left:690.0px;top:57.5px;width:0.8px;height:3px;background:#8a8a8a"></div>
<div style="left:709.5px;top:59px;width:0.8px;height:1.5px;background:#777"></div>
<div style="left:729.0px;top:57.5px;width:0.8px;height:3px;background:#8a8a8a"></div>
<div style="left:748.5px;top:59px;width:0.8px;height:1.5px;background:#777"></div>
<div style="left:768.0px;top:54.5px;width:0.8px;height:6px;background:#999"></div>
<div style="left:787.5px;top:59px;width:0.8px;height:1.5px;background:#777"></div>
<div style="left:807.0px;top:57.5px;width:0.8px;height:3px;background:#8a8a8a"></div>
<div style="left:826.5px;top:59px;width:0.8px;height:1.5px;background:#777"></div>
<div style="left:846.0px;top:57.5px;width:0.8px;height:3px;background:#8a8a8a"></div>
<div style="left:865.5px;top:59px;width:0.8px;height:1.5px;background:#777"></div>
<div style="left:885.0px;top:57.5px;width:0.8px;height:3px;background:#8a8a8a"></div>
<div style="left:904.5px;top:59px;width:0.8px;height:1.5px;background:#777"></div>
<div style="left:924.0px;top:54.5px;width:0.8px;height:6px;background:#999"></div>
<div style="left:297px;top:49px;width:0;height:0;border-top:4px solid #19d3f0;border-left:2.5px solid transparent;border-right:2.5px solid transparent"></div>
<div style="left:299.0px;top:59.2px;width:1.6px;height:1.6px;border-radius:50%;background:#3c8"></div>
<div style="left:302px;top:55.5px;font-size:4px;color:#aaa;line-height:1;white-space:nowrap;will-change:transform;">1</div>
<div style="left:458px;top:55.5px;font-size:4px;color:#aaa;line-height:1;white-space:nowrap;will-change:transform;">2</div>
<div style="left:614px;top:55.5px;font-size:4px;color:#aaa;line-height:1;white-space:nowrap;will-change:transform;">3</div>
<div style="left:770px;top:55.5px;font-size:4px;color:#aaa;line-height:1;white-space:nowrap;will-change:transform;">4</div>
<div style="left:338.5px;top:91px;width:1px;height:84px;background:#3c3c3c"></div>
<div style="left:377.5px;top:91px;width:1px;height:84px;background:#3c3c3c"></div>
<div style="left:416.5px;top:91px;width:1px;height:84px;background:#3c3c3c"></div>
<div style="left:455.5px;top:91px;width:1px;height:84px;background:#3a3a3a"></div>
<div style="left:494.5px;top:91px;width:1px;height:84px;background:#3c3c3c"></div>
<div style="left:533.5px;top:91px;width:1px;height:84px;background:#3c3c3c"></div>
<div style="left:572.5px;top:91px;width:1px;height:84px;background:#3c3c3c"></div>
<div style="left:611.5px;top:91px;width:1px;height:84px;background:#3a3a3a"></div>
<div style="left:650.5px;top:91px;width:1px;height:84px;background:#3c3c3c"></div>
<div style="left:689.5px;top:91px;width:1px;height:84px;background:#3c3c3c"></div>
<div style="left:728.5px;top:91px;width:1px;height:84px;background:#3c3c3c"></div>
<div style="left:767.5px;top:91px;width:1px;height:84px;background:#3a3a3a"></div>
<div style="left:806.5px;top:91px;width:1px;height:84px;background:#3c3c3c"></div>
<div style="left:845.5px;top:91px;width:1px;height:84px;background:#3c3c3c"></div>
<div style="left:884.5px;top:91px;width:1px;height:84px;background:#3c3c3c"></div>
<div style="left:923.5px;top:91px;width:1px;height:84px;background:#3a3a3a"></div>
<div style="left:456px;top:61.5px;width:0.8px;height:19.5px;background:rgba(255,255,255,0.35)"></div>
<div style="left:612px;top:61.5px;width:0.8px;height:19.5px;background:rgba(255,255,255,0.35)"></div>
<div style="left:768px;top:61.5px;width:0.8px;height:19.5px;background:rgba(255,255,255,0.35)"></div>
<div style="left:301.5px;top:63.2px;font-size:6px;color:#2a2a2a;line-height:1;white-space:nowrap;will-change:transform;">A1</div>
<div style="left:301.5px;top:73.2px;font-size:6px;color:#2a2a2a;line-height:1;white-space:nowrap;will-change:transform;">A1</div>
<div style="left:301.5px;top:83.2px;font-size:6px;color:#3a2414;line-height:1;white-space:nowrap;will-change:transform;">303 Cutoff Modulation</div>
<div style="left:303px;top:34px;width:27px;height:10.5px;background:linear-gradient(#2e2e2e,#242424);border-radius:2px;box-shadow:0 0 0 0.5px #111"></div>
<div style="left:314px;top:36.5px;width:0;height:0;border-left:4.5px solid #ddd;border-top:2.5px solid transparent;border-bottom:2.5px solid transparent"></div>
<div style="left:331.5px;top:34px;width:14.5px;height:10.5px;background:linear-gradient(#2e2e2e,#242424);border-radius:2px;box-shadow:0 0 0 0.5px #111"></div>
<div style="left:336.5px;top:37px;width:4px;height:4px;background:#ddd"></div>
<div style="left:348px;top:34px;width:15px;height:10.5px;background:linear-gradient(#2e2e2e,#242424);border-radius:2px;box-shadow:0 0 0 0.5px #111"></div>
<svg style="position:absolute;left:350.5px;top:34.5px" width="10" height="10" viewBox="0 0 10 10"><path d="M3.2 2.8 A3 3 0 1 0 7.8 5" fill="none" stroke="#19d3f0" stroke-width="1.6"/><path d="M5.5 1.5 L8 3 L6 4.5Z" fill="#19d3f0"/></svg>
<div style="left:367.2px;top:33.0px;width:13.0px;height:13.0px;border-radius:50%;background:#1c1c1c;box-shadow:inset 0 0 0 1.4px #3a3a3a"></div>
<div style="left:371.5px;top:37.3px;width:4.4px;height:4.4px;border-radius:50%;background:#d8d8d8"></div>
<div style="left:385.2px;top:33.4px;width:36.5px;height:12px;background:#1e1e1e;border-radius:2px"></div>
<div style="left:385.2px;top:33.4px;width:22.8px;height:12px;border:1px solid #444;border-radius:2px"></div>
<div style="left:386px;top:34.5px;width:3px;height:10px;background:#777;opacity:0.8"></div>
<div style="left:404.5px;top:34.2px;width:3.5px;height:10.5px;background:#888;opacity:0.7"></div>
<div style="left:391px;top:35px;width:29px;height:2.8px;background:#d8c088"></div>
<div style="left:391px;top:37.8px;width:29px;height:2.2px;background:#ea8040"></div>
<div style="left:389.3px;top:34.8px;width:1.6px;height:9.5px;background:#19b8d8"></div>
<div style="left:419.8px;top:34.8px;width:1.4px;height:9.5px;background:#19b8d8"></div>
<div style="left:889px;top:33px;width:34px;height:13px;background:#232323;border-radius:6.5px"></div>
<svg style="position:absolute;left:897px;top:35px" width="9" height="9" viewBox="0 0 9 9"><path d="M1 1.5H5M2 3.5H7M3 5.5H8M1 7.5H5" stroke="#19d3f0" stroke-width="1.3"/></svg>
<svg style="position:absolute;left:910px;top:34.5px" width="9" height="9" viewBox="0 0 9 9"><path d="M1.2 2.5 L3.5 1.5 L4.5 3 L7.5 3 L7.5 7.5 L1.2 7.5Z" fill="none" stroke="#19d3f0" stroke-width="1.2"/></svg>
<svg style="position:absolute;left:0;top:0" width="960" height="640" viewBox="0 0 960 640"><g fill="none" stroke="#383838" stroke-width="1.3" stroke-linecap="round"><path d="M358 225 Q360 229 368 229 L402 228 Q406 227 409 227"/><path d="M433 226 Q440 226 441 220 Q442 215 447 215"/><path d="M478 218 Q485 219 485.5 226 L486 249 Q486 256 478 256 L425 256 Q418 256 418 263"/><path d="M364.5 263 Q357 264 357 271 L357 293 Q357 300 364 300 L409 300"/><path d="M397 263 Q404 264 404 271 L404.5 286 Q405 291 409 292"/><path d="M364.5 338 Q357 337 357 330 L357 314 Q357 307 364 307 L401 307 Q406 308 409 316"/><path d="M397 338 Q404 337 405 332 Q406 329 409 329"/><path d="M563 259 L573 259 Q580 259 580 266 L580 281 Q580 288 588 288"/><path d="M621 288 Q628 288 628 281 L628 265 Q628 258 635 258 L640 258 Q646 258 646 264"/><path d="M580 281 L580 362 Q580 369 588 369"/><path d="M621 369 Q628 369 628 362 L628 346 Q628 339 635 339 L640 339 Q646 339 646 345"/><path d="M580 362 L580 480 Q580 500 562 500 L458 500 Q451 500 451 505"/><path d="M557 505 Q557 499 564 499"/><path d="M540 382 Q540 376 548 376 L574 376 Q580 376 580 370"/><path d="M727 472 Q727 480 735 480 L815 480 Q822 480 822 486"/><path d="M583 384 Q583 420 588 470 Q590 490 578 496"/></g></svg>
<div style="left:320px;top:188px;width:78px;height:37px;"><div style="position:absolute;left:0.00px;top:0.00px;width:78.00px;height:37.00px;background:linear-gradient(#283236,#2c3234 55%,#3a3230);box-shadow:0 1px 2px #000"></div><div style="position:absolute;left:0.00px;top:0.00px;width:78.00px;height:9.00px;background:linear-gradient(#c8c8c8,#b4b4b4 70%,#8a8a8a)"></div><div style="position:absolute;left:0.00px;top:35.00px;width:78.00px;height:2.00px;background:#3a2420"></div><div style="position:absolute;left:0.00px;top:0.00px;width:1.20px;height:37.00px;background:#b0b0b0"></div><div style="position:absolute;left:76.80px;top:0.00px;width:1.20px;height:37.00px;background:#b0b0b0"></div><div style="position:absolute;left:7.00px;top:14.00px;width:15.00px;height:15.00px;border-radius:50%;background:radial-gradient(circle closest-side at 50% 42%,#f4f4f4 0,#d8d4d0 30%,#aaa49e 68%,#b88868 88%,#6a4030 100%);box-shadow:0 0 0 1.3px #151515"></div><div style="position:absolute;left:27.00px;top:14.30px;width:22.00px;height:13.00px;background:radial-gradient(ellipse 90% 100% at 45% 80%,#ffc890,#f89a52 55%,#ea7a34 100%);box-shadow:inset 0 0 0 0.8px #2a1a10,0 0 0 0.6px #111"></div><div style="position:absolute;left:50.50px;top:14.30px;width:22.00px;height:13.00px;background:radial-gradient(ellipse 90% 100% at 45% 80%,#ffc890,#f89a52 55%,#ea7a34 100%);box-shadow:inset 0 0 0 0.8px #2a1a10,0 0 0 0.6px #111"></div><div style="position:absolute;left:36.90px;top:22.40px;width:2.20px;height:2.20px;border-radius:50%;background:#181818"></div><div style="position:absolute;left:60.40px;top:22.40px;width:2.20px;height:2.20px;border-radius:50%;background:#181818"></div><div style="position:absolute;left:42.00px;top:10.50px;width:2.00px;height:2.00px;border-radius:50%;background:#e05020"></div><div style="position:absolute;left:65.00px;top:10.50px;width:2.00px;height:2.00px;border-radius:50%;background:#e05020"></div><div style="position:absolute;left:32.60px;top:10.10px;width:2.80px;height:2.80px;border-radius:50%;background:radial-gradient(#fff,#aaa)"></div></div>
<div style="left:680px;top:425.6px;width:95px;height:46.5px;"><div style="position:absolute;left:0.00px;top:0.00px;width:95.00px;height:46.50px;background:linear-gradient(#283236,#2c3234 55%,#3a3230);box-shadow:0 1px 2px #000"></div><div style="position:absolute;left:0.00px;top:0.00px;width:95.00px;height:10.50px;background:linear-gradient(#c8c8c8,#b4b4b4 70%,#8a8a8a)"></div><div style="position:absolute;left:0.00px;top:44.50px;width:95.00px;height:2.00px;background:#3a2420"></div><div style="position:absolute;left:0.00px;top:0.00px;width:1.20px;height:46.50px;background:#b0b0b0"></div><div style="position:absolute;left:93.80px;top:0.00px;width:1.20px;height:46.50px;background:#b0b0b0"></div><div style="position:absolute;left:5.80px;top:18.00px;width:27.30px;height:15.80px;background:radial-gradient(ellipse 90% 100% at 45% 80%,#ffc890,#f89a52 55%,#ea7a34 100%);box-shadow:inset 0 0 0 0.8px #2a1a10,0 0 0 0.6px #111"></div><div style="position:absolute;left:34.00px;top:18.00px;width:27.30px;height:15.80px;background:radial-gradient(ellipse 90% 100% at 45% 80%,#ffc890,#f89a52 55%,#ea7a34 100%);box-shadow:inset 0 0 0 0.8px #2a1a10,0 0 0 0.6px #111"></div><div style="position:absolute;left:18.20px;top:28.20px;width:2.60px;height:2.60px;border-radius:50%;background:#181818"></div><div style="position:absolute;left:46.30px;top:28.20px;width:2.60px;height:2.60px;border-radius:50%;background:#181818"></div><div style="position:absolute;left:18.90px;top:14.40px;width:2.20px;height:2.20px;border-radius:50%;background:#e05020"></div><div style="position:absolute;left:46.90px;top:14.40px;width:2.20px;height:2.20px;border-radius:50%;background:#e05020"></div><div style="position:absolute;left:57.80px;top:13.80px;width:3.40px;height:3.40px;border-radius:50%;background:radial-gradient(#fff,#aaa)"></div><div style="position:absolute;left:67.20px;top:17.20px;width:19.60px;height:19.60px;border-radius:50%;background:radial-gradient(circle closest-side at 50% 42%,#f4f4f4 0,#d8d4d0 30%,#aaa49e 68%,#b88868 88%,#6a4030 100%);box-shadow:0 0 0 1.3px #151515"></div></div>
<div style="position:absolute;transform:scaleX(-1);left:680px;top:474px;font-size:4px;color:#777;line-height:1;white-space:nowrap;will-change:transform;">Master Output</div>
<div style="left:409.5px;top:204px;width:24px;height:48px;"><div style="position:absolute;left:0.00px;top:0.00px;width:24.00px;height:48.00px;background:linear-gradient(#f0f0f0,#d8d8d8);border-radius:1px;box-shadow:0 1px 2px #000"></div><div style="position:absolute;left:0.00px;top:45.00px;width:24.00px;height:3.00px;background:#555"></div><div style="position:absolute;left:8.00px;top:8.50px;width:4.00px;height:4.00px;border-radius:50%;background:#222"></div><div style="position:absolute;left:12.00px;top:8.50px;width:4.00px;height:4.00px;border-radius:50%;background:#222"></div><div style="position:absolute;left:8.00px;top:19.00px;width:8.00px;height:3.50px;background:#fff;border:0.6px solid #999;border-radius:1px"></div><div style="position:absolute;left:9.00px;top:25.00px;width:6.00px;height:6.00px;border-radius:50%;background:radial-gradient(circle at 40% 35%,#ffa060,#f06010)"></div><div style="position:absolute;left:9.00px;top:34.00px;width:6.00px;height:6.00px;border-radius:50%;background:radial-gradient(circle at 40% 35%,#ff6060,#e01818)"></div><div style="position:absolute;left:6.00px;top:3.00px;width:12.00px;height:1.00px;background:#999"></div><div style="position:absolute;left:6.00px;top:15.00px;width:12.00px;height:1.00px;background:#bbb"></div><div style="position:absolute;left:6.00px;top:41.00px;width:12.00px;height:1.00px;background:#aaa"></div></div>
<div style="left:447px;top:191px;width:31.5px;height:60px;"><div style="position:absolute;left:0.00px;top:0.00px;width:31.50px;height:60.00px;background:linear-gradient(#a8a830,#8a8a20);border-radius:3px;box-shadow:0 1px 2px #000,inset 0 0 0 1px #b0a030"></div><div style="position:absolute;left:1.20px;top:1.20px;width:29.10px;height:18.80px;background:#2a2e2a;border-radius:2px 2px 0 0"></div><div style="position:absolute;left:3.00px;top:3.40px;width:5.60px;height:5.60px;border-radius:50%;background:rgba(0,0,0,0.55)"></div><div style="position:absolute;left:2.90px;top:2.40px;width:5.20px;height:5.20px;border-radius:50%;background:radial-gradient(circle at 40% 35%,#fff 0 8%,#20e8d0 40%,rgba(0,0,0,0.35) 100%),#20e8d0"></div><div style="position:absolute;left:9.50px;top:3.40px;width:5.60px;height:5.60px;border-radius:50%;background:rgba(0,0,0,0.55)"></div><div style="position:absolute;left:9.40px;top:2.40px;width:5.20px;height:5.20px;border-radius:50%;background:radial-gradient(circle at 40% 35%,#fff 0 8%,#20e8d0 40%,rgba(0,0,0,0.35) 100%),#20e8d0"></div><div style="position:absolute;left:9.50px;top:10.40px;width:5.60px;height:5.60px;border-radius:50%;background:rgba(0,0,0,0.55)"></div><div style="position:absolute;left:9.40px;top:9.40px;width:5.20px;height:5.20px;border-radius:50%;background:radial-gradient(circle at 40% 35%,#fff 0 8%,#20e8d0 40%,rgba(0,0,0,0.35) 100%),#20e8d0"></div><div style="position:absolute;left:16.50px;top:10.40px;width:5.60px;height:5.60px;border-radius:50%;background:rgba(0,0,0,0.55)"></div><div style="position:absolute;left:16.40px;top:9.40px;width:5.20px;height:5.20px;border-radius:50%;background:radial-gradient(circle at 40% 35%,#fff 0 8%,#20e8d0 40%,rgba(0,0,0,0.35) 100%),#20e8d0"></div><div style="position:absolute;left:23.50px;top:10.40px;width:5.60px;height:5.60px;border-radius:50%;background:rgba(0,0,0,0.55)"></div><div style="position:absolute;left:23.40px;top:9.40px;width:5.20px;height:5.20px;border-radius:50%;background:radial-gradient(circle at 40% 35%,#fff 0 8%,#20e8d0 40%,rgba(0,0,0,0.35) 100%),#20e8d0"></div><div style="position:absolute;left:21.90px;top:2.90px;width:2.20px;height:2.20px;border-radius:50%;background:#ff3020"></div><div style="position:absolute;left:2.00px;top:35.00px;width:27.50px;height:20.00px;background:repeating-linear-gradient(90deg,rgba(255,255,255,0.03) 0 1px,transparent 1px 2px),linear-gradient(#343c40,#262c2e);border-radius:1.5px;box-shadow:0 0 0 0.6px rgba(0,0,0,0.6)"></div><div style="position:absolute;left:1.00px;top:56.00px;width:29.50px;height:4.00px;background:#6a6a18;border-radius:0 0 3px 3px"></div><div style="position:absolute;left:-1.90px;top:22.80px;width:4.40px;height:4.40px;border-radius:50%;background:radial-gradient(circle at 40% 40%,#ddd,#777)"></div><div style="position:absolute;left:29.00px;top:22.80px;width:4.40px;height:4.40px;border-radius:50%;background:radial-gradient(circle at 40% 40%,#ddd,#777)"></div></div>
<div style="left:365px;top:237px;width:32px;height:60px;"><div style="position:absolute;left:0.00px;top:0.00px;width:32.00px;height:60.00px;background:linear-gradient(#ffd040,#f0b020);border-radius:3px;box-shadow:0 1px 2px #000,inset 0 0 0 1px #ffb030"></div><div style="position:absolute;left:1.20px;top:1.20px;width:29.60px;height:19.80px;background:#253038;border-radius:2px 2px 0 0"></div><div style="position:absolute;left:3.50px;top:11.40px;width:5.60px;height:5.60px;border-radius:50%;background:rgba(0,0,0,0.55)"></div><div style="position:absolute;left:3.40px;top:10.40px;width:5.20px;height:5.20px;border-radius:50%;background:radial-gradient(circle at 40% 35%,#fff 0 8%,#30c0f0 40%,rgba(0,0,0,0.35) 100%),#30c0f0"></div><div style="position:absolute;left:10.00px;top:11.40px;width:5.60px;height:5.60px;border-radius:50%;background:rgba(0,0,0,0.55)"></div><div style="position:absolute;left:9.90px;top:10.40px;width:5.20px;height:5.20px;border-radius:50%;background:radial-gradient(circle at 40% 35%,#fff 0 8%,#30c0f0 40%,rgba(0,0,0,0.35) 100%),#30c0f0"></div><div style="position:absolute;left:16.50px;top:11.40px;width:5.60px;height:5.60px;border-radius:50%;background:rgba(0,0,0,0.55)"></div><div style="position:absolute;left:16.40px;top:10.40px;width:5.20px;height:5.20px;border-radius:50%;background:radial-gradient(circle at 40% 35%,#fff 0 8%,#30c0f0 40%,rgba(0,0,0,0.35) 100%),#30c0f0"></div><div style="position:absolute;left:23.00px;top:11.40px;width:5.60px;height:5.60px;border-radius:50%;background:rgba(0,0,0,0.55)"></div><div style="position:absolute;left:22.90px;top:10.40px;width:5.20px;height:5.20px;border-radius:50%;background:radial-gradient(circle at 40% 35%,#fff 0 8%,#30c0f0 40%,rgba(0,0,0,0.35) 100%),#30c0f0"></div><div style="position:absolute;left:14.90px;top:4.90px;width:2.20px;height:2.20px;border-radius:50%;background:#ff3020"></div><div style="position:absolute;left:2.00px;top:36.00px;width:28.00px;height:20.00px;background:repeating-linear-gradient(90deg,rgba(255,255,255,0.03) 0 1px,transparent 1px 2px),linear-gradient(#343c40,#262c2e);border-radius:1.5px;box-shadow:0 0 0 0.6px rgba(0,0,0,0.6)"></div><div style="position:absolute;left:1.00px;top:56.00px;width:30.00px;height:4.00px;background:linear-gradient(#f08010,#c03010);border-radius:0 0 3px 3px"></div><div style="position:absolute;left:-1.90px;top:23.80px;width:4.40px;height:4.40px;border-radius:50%;background:radial-gradient(circle at 40% 40%,#ddd,#777)"></div><div style="position:absolute;left:29.50px;top:23.80px;width:4.40px;height:4.40px;border-radius:50%;background:radial-gradient(circle at 40% 40%,#ddd,#777)"></div></div>
<div style="left:365px;top:310px;width:32px;height:60.5px;"><div style="position:absolute;left:0.00px;top:0.00px;width:32.00px;height:60.50px;background:linear-gradient(#ff50f0,#d020c8);border-radius:3px;box-shadow:0 1px 2px #000,inset 0 0 0 1px #e040e0"></div><div style="position:absolute;left:1.20px;top:1.20px;width:29.60px;height:20.80px;background:#3a2238;border-radius:2px 2px 0 0"></div><div style="position:absolute;left:5.50px;top:5.90px;width:5.60px;height:5.60px;border-radius:50%;background:rgba(0,0,0,0.55)"></div><div style="position:absolute;left:5.40px;top:4.90px;width:5.20px;height:5.20px;border-radius:50%;background:radial-gradient(circle at 40% 35%,#fff 0 8%,#ff7090 40%,rgba(0,0,0,0.35) 100%),#ff7090"></div><div style="position:absolute;left:11.50px;top:5.90px;width:5.60px;height:5.60px;border-radius:50%;background:rgba(0,0,0,0.55)"></div><div style="position:absolute;left:11.40px;top:4.90px;width:5.20px;height:5.20px;border-radius:50%;background:radial-gradient(circle at 40% 35%,#fff 0 8%,#ff7090 40%,rgba(0,0,0,0.35) 100%),#ff7090"></div><div style="position:absolute;left:5.50px;top:13.40px;width:5.60px;height:5.60px;border-radius:50%;background:rgba(0,0,0,0.55)"></div><div style="position:absolute;left:5.40px;top:12.40px;width:5.20px;height:5.20px;border-radius:50%;background:radial-gradient(circle at 40% 35%,#fff 0 8%,#ff7090 40%,rgba(0,0,0,0.35) 100%),#ff7090"></div><div style="position:absolute;left:15.50px;top:13.40px;width:5.60px;height:5.60px;border-radius:50%;background:rgba(0,0,0,0.55)"></div><div style="position:absolute;left:15.40px;top:12.40px;width:5.20px;height:5.20px;border-radius:50%;background:radial-gradient(circle at 40% 35%,#fff 0 8%,#ff7090 40%,rgba(0,0,0,0.35) 100%),#ff7090"></div><div style="position:absolute;left:21.50px;top:13.40px;width:5.60px;height:5.60px;border-radius:50%;background:rgba(0,0,0,0.55)"></div><div style="position:absolute;left:21.40px;top:12.40px;width:5.20px;height:5.20px;border-radius:50%;background:radial-gradient(circle at 40% 35%,#fff 0 8%,#ff7090 40%,rgba(0,0,0,0.35) 100%),#ff7090"></div><div style="position:absolute;left:18.90px;top:3.90px;width:2.20px;height:2.20px;border-radius:50%;background:#ff3020"></div><div style="position:absolute;left:2.00px;top:35.50px;width:28.00px;height:21.00px;background:repeating-linear-gradient(90deg,rgba(255,255,255,0.03) 0 1px,transparent 1px 2px),linear-gradient(#343c40,#262c2e);border-radius:1.5px;box-shadow:0 0 0 0.6px rgba(0,0,0,0.6)"></div><div style="position:absolute;left:1.00px;top:56.50px;width:30.00px;height:4.00px;background:#a010a0;border-radius:0 0 3px 3px"></div><div style="position:absolute;left:-1.90px;top:24.80px;width:4.40px;height:4.40px;border-radius:50%;background:radial-gradient(circle at 40% 40%,#ddd,#777)"></div><div style="position:absolute;left:29.50px;top:24.80px;width:4.40px;height:4.40px;border-radius:50%;background:radial-gradient(circle at 40% 40%,#ddd,#777)"></div></div>
<div style="left:588.6px;top:264px;width:31.2px;height:60px;"><div style="position:absolute;left:0.00px;top:0.00px;width:31.20px;height:60.00px;background:linear-gradient(#30c8f0,#1890c8);border-radius:3px;box-shadow:0 1px 2px #000,inset 0 0 0 1px #30b0e0"></div><div style="position:absolute;left:1.20px;top:1.20px;width:28.80px;height:18.30px;background:#1c3a40;border-radius:2px 2px 0 0"></div><div style="position:absolute;left:6.50px;top:12.40px;width:5.60px;height:5.60px;border-radius:50%;background:rgba(0,0,0,0.55)"></div><div style="position:absolute;left:6.40px;top:11.40px;width:5.20px;height:5.20px;border-radius:50%;background:radial-gradient(circle at 40% 35%,#fff 0 8%,#60e0f0 40%,rgba(0,0,0,0.35) 100%),#60e0f0"></div><div style="position:absolute;left:13.00px;top:12.40px;width:5.60px;height:5.60px;border-radius:50%;background:rgba(0,0,0,0.55)"></div><div style="position:absolute;left:12.90px;top:11.40px;width:5.20px;height:5.20px;border-radius:50%;background:radial-gradient(circle at 40% 35%,#fff 0 8%,#60e0f0 40%,rgba(0,0,0,0.35) 100%),#60e0f0"></div><div style="position:absolute;left:19.50px;top:12.40px;width:5.60px;height:5.60px;border-radius:50%;background:rgba(0,0,0,0.55)"></div><div style="position:absolute;left:19.40px;top:11.40px;width:5.20px;height:5.20px;border-radius:50%;background:radial-gradient(circle at 40% 35%,#fff 0 8%,#60e0f0 40%,rgba(0,0,0,0.35) 100%),#60e0f0"></div><div style="position:absolute;left:14.40px;top:4.90px;width:2.20px;height:2.20px;border-radius:50%;background:#ff3020"></div><div style="position:absolute;left:2.00px;top:35.00px;width:27.20px;height:21.00px;background:repeating-linear-gradient(90deg,rgba(255,255,255,0.03) 0 1px,transparent 1px 2px),linear-gradient(#343c40,#262c2e);border-radius:1.5px;box-shadow:0 0 0 0.6px rgba(0,0,0,0.6)"></div><div style="position:absolute;left:1.00px;top:56.00px;width:29.20px;height:4.00px;background:#1850a0;border-radius:0 0 3px 3px"></div><div style="position:absolute;left:-1.90px;top:22.30px;width:4.40px;height:4.40px;border-radius:50%;background:radial-gradient(circle at 40% 40%,#ddd,#777)"></div><div style="position:absolute;left:28.70px;top:22.30px;width:4.40px;height:4.40px;border-radius:50%;background:radial-gradient(circle at 40% 40%,#ddd,#777)"></div></div>
<div style="left:588.6px;top:344.5px;width:31.2px;height:60px;"><div style="position:absolute;left:0.00px;top:0.00px;width:31.20px;height:60.00px;background:linear-gradient(#30c8f0,#1890c8);border-radius:3px;box-shadow:0 1px 2px #000,inset 0 0 0 1px #30b0e0"></div><div style="position:absolute;left:1.20px;top:1.20px;width:28.80px;height:18.30px;background:#1c3a40;border-radius:2px 2px 0 0"></div><div style="position:absolute;left:6.50px;top:12.40px;width:5.60px;height:5.60px;border-radius:50%;background:rgba(0,0,0,0.55)"></div><div style="position:absolute;left:6.40px;top:11.40px;width:5.20px;height:5.20px;border-radius:50%;background:radial-gradient(circle at 40% 35%,#fff 0 8%,#60e0f0 40%,rgba(0,0,0,0.35) 100%),#60e0f0"></div><div style="position:absolute;left:13.00px;top:12.40px;width:5.60px;height:5.60px;border-radius:50%;background:rgba(0,0,0,0.55)"></div><div style="position:absolute;left:12.90px;top:11.40px;width:5.20px;height:5.20px;border-radius:50%;background:radial-gradient(circle at 40% 35%,#fff 0 8%,#60e0f0 40%,rgba(0,0,0,0.35) 100%),#60e0f0"></div><div style="position:absolute;left:19.50px;top:12.40px;width:5.60px;height:5.60px;border-radius:50%;background:rgba(0,0,0,0.55)"></div><div style="position:absolute;left:19.40px;top:11.40px;width:5.20px;height:5.20px;border-radius:50%;background:radial-gradient(circle at 40% 35%,#fff 0 8%,#60e0f0 40%,rgba(0,0,0,0.35) 100%),#60e0f0"></div><div style="position:absolute;left:14.40px;top:4.90px;width:2.20px;height:2.20px;border-radius:50%;background:#ff3020"></div><div style="position:absolute;left:2.00px;top:35.00px;width:27.20px;height:21.00px;background:repeating-linear-gradient(90deg,rgba(255,255,255,0.03) 0 1px,transparent 1px 2px),linear-gradient(#343c40,#262c2e);border-radius:1.5px;box-shadow:0 0 0 0.6px rgba(0,0,0,0.6)"></div><div style="position:absolute;left:1.00px;top:56.00px;width:29.20px;height:4.00px;background:#1850a0;border-radius:0 0 3px 3px"></div><div style="position:absolute;left:-1.90px;top:22.30px;width:4.40px;height:4.40px;border-radius:50%;background:radial-gradient(circle at 40% 40%,#ddd,#777)"></div><div style="position:absolute;left:28.70px;top:22.30px;width:4.40px;height:4.40px;border-radius:50%;background:radial-gradient(circle at 40% 40%,#ddd,#777)"></div></div>
<div style="left:409px;top:264px;width:167px;height:106px;"><div style="position:absolute;left:0.00px;top:0.00px;width:167.00px;height:106.00px;background:linear-gradient(#e2e2e2,#d2d2d2);box-shadow:0 1px 2px #000"></div><div style="position:absolute;left:0.00px;top:102.50px;width:167.00px;height:3.50px;background:linear-gradient(#777,#444)"></div><div style="position:absolute;left:0.00px;top:0.00px;width:167.00px;height:0.80px;background:#f4f4f4"></div><div style="position:absolute;left:0.00px;top:0.00px;width:10.70px;height:102.50px;background:linear-gradient(#dcdcdc,#cacaca)"></div><div style="position:absolute;left:10.50px;top:0.00px;width:0.70px;height:102.50px;background:#b0b0b0"></div><div style="position:absolute;left:0.70px;top:5.40px;width:9.20px;height:9.20px;border-radius:50%;background:radial-gradient(circle closest-side,#ddd 0 12%,#444 22%,#3a3a3a 55%,#666 68%,#3a3a3a 85%,#555 100%)"></div><div style="position:absolute;left:1.70px;top:33.40px;width:7.20px;height:7.20px;border-radius:50%;background:#e8b098"></div><div style="position:absolute;left:3.00px;top:34.40px;width:4.60px;height:4.60px;border-radius:50%;background:#333"></div><div style="position:absolute;left:1.70px;top:48.90px;width:7.20px;height:7.20px;border-radius:50%;background:#e8b098"></div><div style="position:absolute;left:3.00px;top:49.90px;width:4.60px;height:4.60px;border-radius:50%;background:#333"></div><div style="position:absolute;left:1.70px;top:62.80px;width:7.20px;height:7.20px;border-radius:50%;background:#e8c4b0"></div><div style="position:absolute;left:2.80px;top:63.50px;width:5.00px;height:5.00px;border-radius:50%;background:radial-gradient(circle at 40% 35%,#7de0ff,#1898d8);box-shadow:0 0.4px 0.6px rgba(0,0,0,0.6)"></div><div style="position:absolute;left:3.20px;top:73.00px;width:1.00px;height:19.00px;background:#666"></div><div style="position:absolute;left:2.00px;top:72.50px;width:3.00px;height:4.50px;background:#f8f8f8;box-shadow:0 0.5px 1px #555"></div><div style="position:absolute;left:6.00px;top:76.00px;width:1.40px;height:16.00px;background:#6a6a6a"></div><div style="position:absolute;left:7.60px;top:76.00px;width:1.20px;height:16.00px;background:#888"></div><div style="position:absolute;left:20.10px;top:0.00px;width:0.60px;height:102.50px;background:#c4c4c4"></div><div style="position:absolute;left:15.10px;top:2.00px;width:0.80px;height:2.00px;background:#999"></div><div style="position:absolute;left:14.70px;top:-2.80px;width:1.60px;height:1.60px;border-radius:50%;background:#3a3a3a"></div><div style="position:absolute;left:12.90px;top:6.20px;width:5.20px;height:5.00px;background:linear-gradient(#fff,#c8c8c8);border-radius:2.5px 2.5px 1.5px 1.5px;box-shadow:0 0.6px 0.8px #777"></div><div style="position:absolute;left:12.40px;top:13.50px;width:6.20px;height:6.20px;border-radius:50%;background:#f0d0b0"></div><div style="position:absolute;left:13.60px;top:14.40px;width:3.80px;height:3.80px;border-radius:50%;background:#f4b018;box-shadow:0 0.4px 0.6px rgba(0,0,0,0.6)"></div><div style="position:absolute;left:12.40px;top:21.00px;width:6.20px;height:6.20px;border-radius:50%;background:#f0c8b0"></div><div style="position:absolute;left:13.60px;top:21.90px;width:3.80px;height:3.80px;border-radius:50%;background:#f8781c;box-shadow:0 0.4px 0.6px rgba(0,0,0,0.6)"></div><div style="position:absolute;left:12.40px;top:28.50px;width:6.20px;height:6.20px;border-radius:50%;background:#f0c8b0"></div><div style="position:absolute;left:13.60px;top:29.40px;width:3.80px;height:3.80px;border-radius:50%;background:#f8781c;box-shadow:0 0.4px 0.6px rgba(0,0,0,0.6)"></div><div style="position:absolute;left:12.40px;top:36.00px;width:6.20px;height:6.20px;border-radius:50%;background:#f0b8b0"></div><div style="position:absolute;left:13.60px;top:36.90px;width:3.80px;height:3.80px;border-radius:50%;background:#f02030;box-shadow:0 0.4px 0.6px rgba(0,0,0,0.6)"></div><div style="position:absolute;left:12.40px;top:43.90px;width:6.20px;height:6.20px;border-radius:50%;background:#ecb8a0"></div><div style="position:absolute;left:13.60px;top:44.80px;width:3.80px;height:3.80px;border-radius:50%;background:#383838;box-shadow:0 0.4px 0.6px rgba(0,0,0,0.6)"></div><div style="position:absolute;left:12.40px;top:52.00px;width:6.20px;height:6.20px;border-radius:50%;background:#ecb8a0"></div><div style="position:absolute;left:13.60px;top:52.90px;width:3.80px;height:3.80px;border-radius:50%;background:#383838;box-shadow:0 0.4px 0.6px rgba(0,0,0,0.6)"></div><div style="position:absolute;left:12.50px;top:58.80px;width:6.00px;height:2.60px;background:#fafafa;border-radius:1.3px;box-shadow:0 0 0 0.4px #999"></div><div style="position:absolute;left:12.30px;top:63.20px;width:6.40px;height:6.40px;border-radius:50%;background:#e8c4b0"></div><div style="position:absolute;left:13.40px;top:63.90px;width:4.20px;height:4.20px;border-radius:50%;background:#1aa8e8;box-shadow:0 0.4px 0.6px rgba(0,0,0,0.6)"></div><div style="position:absolute;left:13.90px;top:73.00px;width:1.00px;height:19.00px;background:#666"></div><div style="position:absolute;left:12.90px;top:72.50px;width:3.00px;height:4.50px;background:linear-gradient(#fff,#d8d8d8);box-shadow:0 0.5px 1px #555;border-radius:0.5px"></div><div style="position:absolute;left:16.70px;top:72.50px;width:1.30px;height:19.00px;background:#5e5e5e"></div><div style="position:absolute;left:18.50px;top:72.50px;width:1.30px;height:19.00px;background:#6a6a6a"></div><div style="position:absolute;left:12.10px;top:94.60px;width:2.80px;height:2.80px;border-radius:50%;background:#f4f4f4;box-shadow:0 0 0 0.6px #777"></div><div style="position:absolute;left:16.10px;top:94.60px;width:2.80px;height:2.80px;border-radius:50%;background:#f4f4f4;box-shadow:0 0 0 0.6px #777"></div><div style="position:absolute;left:12.50px;top:99.00px;width:6.00px;height:1.50px;background:#c4c4c4"></div><div style="position:absolute;left:29.70px;top:0.00px;width:0.60px;height:102.50px;background:#c4c4c4"></div><div style="position:absolute;left:24.70px;top:2.00px;width:0.80px;height:2.00px;background:#999"></div><div style="position:absolute;left:24.30px;top:-2.80px;width:1.60px;height:1.60px;border-radius:50%;background:#3a3a3a"></div><div style="position:absolute;left:22.50px;top:6.20px;width:5.20px;height:5.00px;background:linear-gradient(#fff,#c8c8c8);border-radius:2.5px 2.5px 1.5px 1.5px;box-shadow:0 0.6px 0.8px #777"></div><div style="position:absolute;left:22.00px;top:13.50px;width:6.20px;height:6.20px;border-radius:50%;background:#f0d0b0"></div><div style="position:absolute;left:23.20px;top:14.40px;width:3.80px;height:3.80px;border-radius:50%;background:#f4b018;box-shadow:0 0.4px 0.6px rgba(0,0,0,0.6)"></div><div style="position:absolute;left:22.00px;top:21.00px;width:6.20px;height:6.20px;border-radius:50%;background:#f0c8b0"></div><div style="position:absolute;left:23.20px;top:21.90px;width:3.80px;height:3.80px;border-radius:50%;background:#f8781c;box-shadow:0 0.4px 0.6px rgba(0,0,0,0.6)"></div><div style="position:absolute;left:22.00px;top:28.50px;width:6.20px;height:6.20px;border-radius:50%;background:#f0c8b0"></div><div style="position:absolute;left:23.20px;top:29.40px;width:3.80px;height:3.80px;border-radius:50%;background:#f8781c;box-shadow:0 0.4px 0.6px rgba(0,0,0,0.6)"></div><div style="position:absolute;left:22.00px;top:36.00px;width:6.20px;height:6.20px;border-radius:50%;background:#f0b8b0"></div><div style="position:absolute;left:23.20px;top:36.90px;width:3.80px;height:3.80px;border-radius:50%;background:#f02030;box-shadow:0 0.4px 0.6px rgba(0,0,0,0.6)"></div><div style="position:absolute;left:22.00px;top:43.90px;width:6.20px;height:6.20px;border-radius:50%;background:#ecb8a0"></div><div style="position:absolute;left:23.20px;top:44.80px;width:3.80px;height:3.80px;border-radius:50%;background:#383838;box-shadow:0 0.4px 0.6px rgba(0,0,0,0.6)"></div><div style="position:absolute;left:22.00px;top:52.00px;width:6.20px;height:6.20px;border-radius:50%;background:#ecb8a0"></div><div style="position:absolute;left:23.20px;top:52.90px;width:3.80px;height:3.80px;border-radius:50%;background:#383838;box-shadow:0 0.4px 0.6px rgba(0,0,0,0.6)"></div><div style="position:absolute;left:22.10px;top:58.80px;width:6.00px;height:2.60px;background:#fafafa;border-radius:1.3px;box-shadow:0 0 0 0.4px #999"></div><div style="position:absolute;left:21.90px;top:63.20px;width:6.40px;height:6.40px;border-radius:50%;background:#e8c4b0"></div><div style="position:absolute;left:23.00px;top:63.90px;width:4.20px;height:4.20px;border-radius:50%;background:#1aa8e8;box-shadow:0 0.4px 0.6px rgba(0,0,0,0.6)"></div><div style="position:absolute;left:23.50px;top:73.00px;width:1.00px;height:19.00px;background:#666"></div><div style="position:absolute;left:22.50px;top:72.50px;width:3.00px;height:4.50px;background:linear-gradient(#fff,#d8d8d8);box-shadow:0 0.5px 1px #555;border-radius:0.5px"></div><div style="position:absolute;left:26.30px;top:72.50px;width:1.30px;height:19.00px;background:#5e5e5e"></div><div style="position:absolute;left:28.10px;top:72.50px;width:1.30px;height:19.00px;background:#6a6a6a"></div><div style="position:absolute;left:21.70px;top:94.60px;width:2.80px;height:2.80px;border-radius:50%;background:#f4f4f4;box-shadow:0 0 0 0.6px #777"></div><div style="position:absolute;left:25.70px;top:94.60px;width:2.80px;height:2.80px;border-radius:50%;background:#f4f4f4;box-shadow:0 0 0 0.6px #777"></div><div style="position:absolute;left:22.10px;top:99.00px;width:6.00px;height:1.50px;background:#c4c4c4"></div><div style="position:absolute;left:39.30px;top:0.00px;width:0.60px;height:102.50px;background:#c4c4c4"></div><div style="position:absolute;left:34.30px;top:2.00px;width:0.80px;height:2.00px;background:#999"></div><div style="position:absolute;left:33.90px;top:-2.80px;width:1.60px;height:1.60px;border-radius:50%;background:#3a3a3a"></div><div style="position:absolute;left:32.10px;top:6.20px;width:5.20px;height:5.00px;background:linear-gradient(#fff,#c8c8c8);border-radius:2.5px 2.5px 1.5px 1.5px;box-shadow:0 0.6px 0.8px #777"></div><div style="position:absolute;left:31.60px;top:13.50px;width:6.20px;height:6.20px;border-radius:50%;background:#f0d0b0"></div><div style="position:absolute;left:32.80px;top:14.40px;width:3.80px;height:3.80px;border-radius:50%;background:#f4b018;box-shadow:0 0.4px 0.6px rgba(0,0,0,0.6)"></div><div style="position:absolute;left:31.60px;top:21.00px;width:6.20px;height:6.20px;border-radius:50%;background:#f0c8b0"></div><div style="position:absolute;left:32.80px;top:21.90px;width:3.80px;height:3.80px;border-radius:50%;background:#f8781c;box-shadow:0 0.4px 0.6px rgba(0,0,0,0.6)"></div><div style="position:absolute;left:31.60px;top:28.50px;width:6.20px;height:6.20px;border-radius:50%;background:#f0c8b0"></div><div style="position:absolute;left:32.80px;top:29.40px;width:3.80px;height:3.80px;border-radius:50%;background:#f8781c;box-shadow:0 0.4px 0.6px rgba(0,0,0,0.6)"></div><div style="position:absolute;left:31.60px;top:36.00px;width:6.20px;height:6.20px;border-radius:50%;background:#f0b8b0"></div><div style="position:absolute;left:32.80px;top:36.90px;width:3.80px;height:3.80px;border-radius:50%;background:#f02030;box-shadow:0 0.4px 0.6px rgba(0,0,0,0.6)"></div><div style="position:absolute;left:31.60px;top:43.90px;width:6.20px;height:6.20px;border-radius:50%;background:#ecb8a0"></div><div style="position:absolute;left:32.80px;top:44.80px;width:3.80px;height:3.80px;border-radius:50%;background:#383838;box-shadow:0 0.4px 0.6px rgba(0,0,0,0.6)"></div><div style="position:absolute;left:31.60px;top:52.00px;width:6.20px;height:6.20px;border-radius:50%;background:#ecb8a0"></div><div style="position:absolute;left:32.80px;top:52.90px;width:3.80px;height:3.80px;border-radius:50%;background:#383838;box-shadow:0 0.4px 0.6px rgba(0,0,0,0.6)"></div><div style="position:absolute;left:31.70px;top:58.80px;width:6.00px;height:2.60px;background:#fafafa;border-radius:1.3px;box-shadow:0 0 0 0.4px #999"></div><div style="position:absolute;left:31.50px;top:63.20px;width:6.40px;height:6.40px;border-radius:50%;background:#e8c4b0"></div><div style="position:absolute;left:32.60px;top:63.90px;width:4.20px;height:4.20px;border-radius:50%;background:#1aa8e8;box-shadow:0 0.4px 0.6px rgba(0,0,0,0.6)"></div><div style="position:absolute;left:33.10px;top:73.00px;width:1.00px;height:19.00px;background:#666"></div><div style="position:absolute;left:32.10px;top:72.50px;width:3.00px;height:4.50px;background:linear-gradient(#fff,#d8d8d8);box-shadow:0 0.5px 1px #555;border-radius:0.5px"></div><div style="position:absolute;left:35.90px;top:72.50px;width:1.30px;height:19.00px;background:#5e5e5e"></div><div style="position:absolute;left:37.70px;top:72.50px;width:1.30px;height:19.00px;background:#6a6a6a"></div><div style="position:absolute;left:31.30px;top:94.60px;width:2.80px;height:2.80px;border-radius:50%;background:#f4f4f4;box-shadow:0 0 0 0.6px #777"></div><div style="position:absolute;left:35.30px;top:94.60px;width:2.80px;height:2.80px;border-radius:50%;background:#f4f4f4;box-shadow:0 0 0 0.6px #777"></div><div style="position:absolute;left:31.70px;top:99.00px;width:6.00px;height:1.50px;background:#c4c4c4"></div><div style="position:absolute;left:48.90px;top:0.00px;width:0.60px;height:102.50px;background:#c4c4c4"></div><div style="position:absolute;left:43.90px;top:2.00px;width:0.80px;height:2.00px;background:#999"></div><div style="position:absolute;left:43.50px;top:-2.80px;width:1.60px;height:1.60px;border-radius:50%;background:#3a3a3a"></div><div style="position:absolute;left:41.70px;top:6.20px;width:5.20px;height:5.00px;background:linear-gradient(#fff,#c8c8c8);border-radius:2.5px 2.5px 1.5px 1.5px;box-shadow:0 0.6px 0.8px #777"></div><div style="position:absolute;left:41.20px;top:13.50px;width:6.20px;height:6.20px;border-radius:50%;background:#f0d0b0"></div><div style="position:absolute;left:42.40px;top:14.40px;width:3.80px;height:3.80px;border-radius:50%;background:#f4b018;box-shadow:0 0.4px 0.6px rgba(0,0,0,0.6)"></div><div style="position:absolute;left:41.20px;top:21.00px;width:6.20px;height:6.20px;border-radius:50%;background:#f0c8b0"></div><div style="position:absolute;left:42.40px;top:21.90px;width:3.80px;height:3.80px;border-radius:50%;background:#f8781c;box-shadow:0 0.4px 0.6px rgba(0,0,0,0.6)"></div><div style="position:absolute;left:41.20px;top:28.50px;width:6.20px;height:6.20px;border-radius:50%;background:#f0c8b0"></div><div style="position:absolute;left:42.40px;top:29.40px;width:3.80px;height:3.80px;border-radius:50%;background:#f8781c;box-shadow:0 0.4px 0.6px rgba(0,0,0,0.6)"></div><div style="position:absolute;left:41.20px;top:36.00px;width:6.20px;height:6.20px;border-radius:50%;background:#f0b8b0"></div><div style="position:absolute;left:42.40px;top:36.90px;width:3.80px;height:3.80px;border-radius:50%;background:#f02030;box-shadow:0 0.4px 0.6px rgba(0,0,0,0.6)"></div><div style="position:absolute;left:41.20px;top:43.90px;width:6.20px;height:6.20px;border-radius:50%;background:#ecb8a0"></div><div style="position:absolute;left:42.40px;top:44.80px;width:3.80px;height:3.80px;border-radius:50%;background:#383838;box-shadow:0 0.4px 0.6px rgba(0,0,0,0.6)"></div><div style="position:absolute;left:41.20px;top:52.00px;width:6.20px;height:6.20px;border-radius:50%;background:#ecb8a0"></div><div style="position:absolute;left:42.40px;top:52.90px;width:3.80px;height:3.80px;border-radius:50%;background:#383838;box-shadow:0 0.4px 0.6px rgba(0,0,0,0.6)"></div><div style="position:absolute;left:41.30px;top:58.80px;width:6.00px;height:2.60px;background:#fafafa;border-radius:1.3px;box-shadow:0 0 0 0.4px #999"></div><div style="position:absolute;left:41.10px;top:63.20px;width:6.40px;height:6.40px;border-radius:50%;background:#e8c4b0"></div><div style="position:absolute;left:42.20px;top:63.90px;width:4.20px;height:4.20px;border-radius:50%;background:#1aa8e8;box-shadow:0 0.4px 0.6px rgba(0,0,0,0.6)"></div><div style="position:absolute;left:42.70px;top:73.00px;width:1.00px;height:19.00px;background:#666"></div><div style="position:absolute;left:41.70px;top:72.50px;width:3.00px;height:4.50px;background:linear-gradient(#fff,#d8d8d8);box-shadow:0 0.5px 1px #555;border-radius:0.5px"></div><div style="position:absolute;left:45.50px;top:72.50px;width:1.30px;height:19.00px;background:#5e5e5e"></div><div style="position:absolute;left:47.30px;top:72.50px;width:1.30px;height:19.00px;background:#6a6a6a"></div><div style="position:absolute;left:40.90px;top:94.60px;width:2.80px;height:2.80px;border-radius:50%;background:#f4f4f4;box-shadow:0 0 0 0.6px #777"></div><div style="position:absolute;left:44.90px;top:94.60px;width:2.80px;height:2.80px;border-radius:50%;background:#f4f4f4;box-shadow:0 0 0 0.6px #777"></div><div style="position:absolute;left:41.30px;top:99.00px;width:6.00px;height:1.50px;background:#c4c4c4"></div><div style="position:absolute;left:58.50px;top:0.00px;width:0.60px;height:102.50px;background:#c4c4c4"></div><div style="position:absolute;left:53.50px;top:2.00px;width:0.80px;height:2.00px;background:#999"></div><div style="position:absolute;left:53.10px;top:-2.80px;width:1.60px;height:1.60px;border-radius:50%;background:#3a3a3a"></div><div style="position:absolute;left:51.30px;top:6.20px;width:5.20px;height:5.00px;background:linear-gradient(#fff,#c8c8c8);border-radius:2.5px 2.5px 1.5px 1.5px;box-shadow:0 0.6px 0.8px #777"></div><div style="position:absolute;left:50.80px;top:13.50px;width:6.20px;height:6.20px;border-radius:50%;background:#f0d0b0"></div><div style="position:absolute;left:52.00px;top:14.40px;width:3.80px;height:3.80px;border-radius:50%;background:#f4b018;box-shadow:0 0.4px 0.6px rgba(0,0,0,0.6)"></div><div style="position:absolute;left:50.80px;top:21.00px;width:6.20px;height:6.20px;border-radius:50%;background:#f0c8b0"></div><div style="position:absolute;left:52.00px;top:21.90px;width:3.80px;height:3.80px;border-radius:50%;background:#f8781c;box-shadow:0 0.4px 0.6px rgba(0,0,0,0.6)"></div><div style="position:absolute;left:50.80px;top:28.50px;width:6.20px;height:6.20px;border-radius:50%;background:#f0c8b0"></div><div style="position:absolute;left:52.00px;top:29.40px;width:3.80px;height:3.80px;border-radius:50%;background:#f8781c;box-shadow:0 0.4px 0.6px rgba(0,0,0,0.6)"></div><div style="position:absolute;left:50.80px;top:36.00px;width:6.20px;height:6.20px;border-radius:50%;background:#f0b8b0"></div><div style="position:absolute;left:52.00px;top:36.90px;width:3.80px;height:3.80px;border-radius:50%;background:#f02030;box-shadow:0 0.4px 0.6px rgba(0,0,0,0.6)"></div><div style="position:absolute;left:50.80px;top:43.90px;width:6.20px;height:6.20px;border-radius:50%;background:#ecb8a0"></div><div style="position:absolute;left:52.00px;top:44.80px;width:3.80px;height:3.80px;border-radius:50%;background:#383838;box-shadow:0 0.4px 0.6px rgba(0,0,0,0.6)"></div><div style="position:absolute;left:50.80px;top:52.00px;width:6.20px;height:6.20px;border-radius:50%;background:#ecb8a0"></div><div style="position:absolute;left:52.00px;top:52.90px;width:3.80px;height:3.80px;border-radius:50%;background:#383838;box-shadow:0 0.4px 0.6px rgba(0,0,0,0.6)"></div><div style="position:absolute;left:50.90px;top:58.80px;width:6.00px;height:2.60px;background:#fafafa;border-radius:1.3px;box-shadow:0 0 0 0.4px #999"></div><div style="position:absolute;left:50.70px;top:63.20px;width:6.40px;height:6.40px;border-radius:50%;background:#e8c4b0"></div><div style="position:absolute;left:51.80px;top:63.90px;width:4.20px;height:4.20px;border-radius:50%;background:#1aa8e8;box-shadow:0 0.4px 0.6px rgba(0,0,0,0.6)"></div><div style="position:absolute;left:52.30px;top:73.00px;width:1.00px;height:19.00px;background:#666"></div><div style="position:absolute;left:51.30px;top:72.50px;width:3.00px;height:4.50px;background:linear-gradient(#fff,#d8d8d8);box-shadow:0 0.5px 1px #555;border-radius:0.5px"></div><div style="position:absolute;left:55.10px;top:72.50px;width:1.30px;height:19.00px;background:#5e5e5e"></div><div style="position:absolute;left:56.90px;top:72.50px;width:1.30px;height:19.00px;background:#6a6a6a"></div><div style="position:absolute;left:50.50px;top:94.60px;width:2.80px;height:2.80px;border-radius:50%;background:#f4f4f4;box-shadow:0 0 0 0.6px #777"></div><div style="position:absolute;left:54.50px;top:94.60px;width:2.80px;height:2.80px;border-radius:50%;background:#f4f4f4;box-shadow:0 0 0 0.6px #777"></div><div style="position:absolute;left:50.90px;top:99.00px;width:6.00px;height:1.50px;background:#c4c4c4"></div><div style="position:absolute;left:68.10px;top:0.00px;width:0.60px;height:102.50px;background:#c4c4c4"></div><div style="position:absolute;left:63.10px;top:2.00px;width:0.80px;height:2.00px;background:#999"></div><div style="position:absolute;left:62.70px;top:-2.80px;width:1.60px;height:1.60px;border-radius:50%;background:#3a3a3a"></div><div style="position:absolute;left:60.90px;top:6.20px;width:5.20px;height:5.00px;background:linear-gradient(#fff,#c8c8c8);border-radius:2.5px 2.5px 1.5px 1.5px;box-shadow:0 0.6px 0.8px #777"></div><div style="position:absolute;left:60.40px;top:13.50px;width:6.20px;height:6.20px;border-radius:50%;background:#f0d0b0"></div><div style="position:absolute;left:61.60px;top:14.40px;width:3.80px;height:3.80px;border-radius:50%;background:#f4b018;box-shadow:0 0.4px 0.6px rgba(0,0,0,0.6)"></div><div style="position:absolute;left:60.40px;top:21.00px;width:6.20px;height:6.20px;border-radius:50%;background:#f0c8b0"></div><div style="position:absolute;left:61.60px;top:21.90px;width:3.80px;height:3.80px;border-radius:50%;background:#f8781c;box-shadow:0 0.4px 0.6px rgba(0,0,0,0.6)"></div><div style="position:absolute;left:60.40px;top:28.50px;width:6.20px;height:6.20px;border-radius:50%;background:#f0c8b0"></div><div style="position:absolute;left:61.60px;top:29.40px;width:3.80px;height:3.80px;border-radius:50%;background:#f8781c;box-shadow:0 0.4px 0.6px rgba(0,0,0,0.6)"></div><div style="position:absolute;left:60.40px;top:36.00px;width:6.20px;height:6.20px;border-radius:50%;background:#f0b8b0"></div><div style="position:absolute;left:61.60px;top:36.90px;width:3.80px;height:3.80px;border-radius:50%;background:#f02030;box-shadow:0 0.4px 0.6px rgba(0,0,0,0.6)"></div><div style="position:absolute;left:60.40px;top:43.90px;width:6.20px;height:6.20px;border-radius:50%;background:#ecb8a0"></div><div style="position:absolute;left:61.60px;top:44.80px;width:3.80px;height:3.80px;border-radius:50%;background:#383838;box-shadow:0 0.4px 0.6px rgba(0,0,0,0.6)"></div><div style="position:absolute;left:60.40px;top:52.00px;width:6.20px;height:6.20px;border-radius:50%;background:#ecb8a0"></div><div style="position:absolute;left:61.60px;top:52.90px;width:3.80px;height:3.80px;border-radius:50%;background:#383838;box-shadow:0 0.4px 0.6px rgba(0,0,0,0.6)"></div><div style="position:absolute;left:60.50px;top:58.80px;width:6.00px;height:2.60px;background:#fafafa;border-radius:1.3px;box-shadow:0 0 0 0.4px #999"></div><div style="position:absolute;left:60.30px;top:63.20px;width:6.40px;height:6.40px;border-radius:50%;background:#e8c4b0"></div><div style="position:absolute;left:61.40px;top:63.90px;width:4.20px;height:4.20px;border-radius:50%;background:#1aa8e8;box-shadow:0 0.4px 0.6px rgba(0,0,0,0.6)"></div><div style="position:absolute;left:61.90px;top:73.00px;width:1.00px;height:19.00px;background:#666"></div><div style="position:absolute;left:60.90px;top:72.50px;width:3.00px;height:4.50px;background:linear-gradient(#fff,#d8d8d8);box-shadow:0 0.5px 1px #555;border-radius:0.5px"></div><div style="position:absolute;left:64.70px;top:72.50px;width:1.30px;height:19.00px;background:#5e5e5e"></div><div style="position:absolute;left:66.50px;top:72.50px;width:1.30px;height:19.00px;background:#6a6a6a"></div><div style="position:absolute;left:60.10px;top:94.60px;width:2.80px;height:2.80px;border-radius:50%;background:#f4f4f4;box-shadow:0 0 0 0.6px #777"></div><div style="position:absolute;left:64.10px;top:94.60px;width:2.80px;height:2.80px;border-radius:50%;background:#f4f4f4;box-shadow:0 0 0 0.6px #777"></div><div style="position:absolute;left:60.50px;top:99.00px;width:6.00px;height:1.50px;background:#c4c4c4"></div><div style="position:absolute;left:77.70px;top:0.00px;width:0.60px;height:102.50px;background:#c4c4c4"></div><div style="position:absolute;left:72.70px;top:2.00px;width:0.80px;height:2.00px;background:#999"></div><div style="position:absolute;left:72.30px;top:-2.80px;width:1.60px;height:1.60px;border-radius:50%;background:#3a3a3a"></div><div style="position:absolute;left:70.50px;top:6.20px;width:5.20px;height:5.00px;background:linear-gradient(#fff,#c8c8c8);border-radius:2.5px 2.5px 1.5px 1.5px;box-shadow:0 0.6px 0.8px #777"></div><div style="position:absolute;left:70.00px;top:13.50px;width:6.20px;height:6.20px;border-radius:50%;background:#f0d0b0"></div><div style="position:absolute;left:71.20px;top:14.40px;width:3.80px;height:3.80px;border-radius:50%;background:#f4b018;box-shadow:0 0.4px 0.6px rgba(0,0,0,0.6)"></div><div style="position:absolute;left:70.00px;top:21.00px;width:6.20px;height:6.20px;border-radius:50%;background:#f0c8b0"></div><div style="position:absolute;left:71.20px;top:21.90px;width:3.80px;height:3.80px;border-radius:50%;background:#f8781c;box-shadow:0 0.4px 0.6px rgba(0,0,0,0.6)"></div><div style="position:absolute;left:70.00px;top:28.50px;width:6.20px;height:6.20px;border-radius:50%;background:#f0c8b0"></div><div style="position:absolute;left:71.20px;top:29.40px;width:3.80px;height:3.80px;border-radius:50%;background:#f8781c;box-shadow:0 0.4px 0.6px rgba(0,0,0,0.6)"></div><div style="position:absolute;left:70.00px;top:36.00px;width:6.20px;height:6.20px;border-radius:50%;background:#f0b8b0"></div><div style="position:absolute;left:71.20px;top:36.90px;width:3.80px;height:3.80px;border-radius:50%;background:#f02030;box-shadow:0 0.4px 0.6px rgba(0,0,0,0.6)"></div><div style="position:absolute;left:70.00px;top:43.90px;width:6.20px;height:6.20px;border-radius:50%;background:#ecb8a0"></div><div style="position:absolute;left:71.20px;top:44.80px;width:3.80px;height:3.80px;border-radius:50%;background:#383838;box-shadow:0 0.4px 0.6px rgba(0,0,0,0.6)"></div><div style="position:absolute;left:70.00px;top:52.00px;width:6.20px;height:6.20px;border-radius:50%;background:#ecb8a0"></div><div style="position:absolute;left:71.20px;top:52.90px;width:3.80px;height:3.80px;border-radius:50%;background:#383838;box-shadow:0 0.4px 0.6px rgba(0,0,0,0.6)"></div><div style="position:absolute;left:70.10px;top:58.80px;width:6.00px;height:2.60px;background:#fafafa;border-radius:1.3px;box-shadow:0 0 0 0.4px #999"></div><div style="position:absolute;left:69.90px;top:63.20px;width:6.40px;height:6.40px;border-radius:50%;background:#e8c4b0"></div><div style="position:absolute;left:71.00px;top:63.90px;width:4.20px;height:4.20px;border-radius:50%;background:#1aa8e8;box-shadow:0 0.4px 0.6px rgba(0,0,0,0.6)"></div><div style="position:absolute;left:71.50px;top:73.00px;width:1.00px;height:19.00px;background:#666"></div><div style="position:absolute;left:70.50px;top:72.50px;width:3.00px;height:4.50px;background:linear-gradient(#fff,#d8d8d8);box-shadow:0 0.5px 1px #555;border-radius:0.5px"></div><div style="position:absolute;left:74.30px;top:72.50px;width:1.30px;height:19.00px;background:#5e5e5e"></div><div style="position:absolute;left:76.10px;top:72.50px;width:1.30px;height:19.00px;background:#6a6a6a"></div><div style="position:absolute;left:69.70px;top:94.60px;width:2.80px;height:2.80px;border-radius:50%;background:#f4f4f4;box-shadow:0 0 0 0.6px #777"></div><div style="position:absolute;left:73.70px;top:94.60px;width:2.80px;height:2.80px;border-radius:50%;background:#f4f4f4;box-shadow:0 0 0 0.6px #777"></div><div style="position:absolute;left:70.10px;top:99.00px;width:6.00px;height:1.50px;background:#c4c4c4"></div><div style="position:absolute;left:87.30px;top:0.00px;width:0.60px;height:102.50px;background:#c4c4c4"></div><div style="position:absolute;left:82.30px;top:2.00px;width:0.80px;height:2.00px;background:#999"></div><div style="position:absolute;left:81.90px;top:-2.80px;width:1.60px;height:1.60px;border-radius:50%;background:#3a3a3a"></div><div style="position:absolute;left:80.10px;top:6.20px;width:5.20px;height:5.00px;background:linear-gradient(#fff,#c8c8c8);border-radius:2.5px 2.5px 1.5px 1.5px;box-shadow:0 0.6px 0.8px #777"></div><div style="position:absolute;left:79.60px;top:13.50px;width:6.20px;height:6.20px;border-radius:50%;background:#f0d0b0"></div><div style="position:absolute;left:80.80px;top:14.40px;width:3.80px;height:3.80px;border-radius:50%;background:#f4b018;box-shadow:0 0.4px 0.6px rgba(0,0,0,0.6)"></div><div style="position:absolute;left:79.60px;top:21.00px;width:6.20px;height:6.20px;border-radius:50%;background:#f0c8b0"></div><div style="position:absolute;left:80.80px;top:21.90px;width:3.80px;height:3.80px;border-radius:50%;background:#f8781c;box-shadow:0 0.4px 0.6px rgba(0,0,0,0.6)"></div><div style="position:absolute;left:79.60px;top:28.50px;width:6.20px;height:6.20px;border-radius:50%;background:#f0c8b0"></div><div style="position:absolute;left:80.80px;top:29.40px;width:3.80px;height:3.80px;border-radius:50%;background:#f8781c;box-shadow:0 0.4px 0.6px rgba(0,0,0,0.6)"></div><div style="position:absolute;left:79.60px;top:36.00px;width:6.20px;height:6.20px;border-radius:50%;background:#f0b8b0"></div><div style="position:absolute;left:80.80px;top:36.90px;width:3.80px;height:3.80px;border-radius:50%;background:#f02030;box-shadow:0 0.4px 0.6px rgba(0,0,0,0.6)"></div><div style="position:absolute;left:79.60px;top:43.90px;width:6.20px;height:6.20px;border-radius:50%;background:#ecb8a0"></div><div style="position:absolute;left:80.80px;top:44.80px;width:3.80px;height:3.80px;border-radius:50%;background:#383838;box-shadow:0 0.4px 0.6px rgba(0,0,0,0.6)"></div><div style="position:absolute;left:79.60px;top:52.00px;width:6.20px;height:6.20px;border-radius:50%;background:#ecb8a0"></div><div style="position:absolute;left:80.80px;top:52.90px;width:3.80px;height:3.80px;border-radius:50%;background:#383838;box-shadow:0 0.4px 0.6px rgba(0,0,0,0.6)"></div><div style="position:absolute;left:79.70px;top:58.80px;width:6.00px;height:2.60px;background:#fafafa;border-radius:1.3px;box-shadow:0 0 0 0.4px #999"></div><div style="position:absolute;left:79.50px;top:63.20px;width:6.40px;height:6.40px;border-radius:50%;background:#e8c4b0"></div><div style="position:absolute;left:80.60px;top:63.90px;width:4.20px;height:4.20px;border-radius:50%;background:#1aa8e8;box-shadow:0 0.4px 0.6px rgba(0,0,0,0.6)"></div><div style="position:absolute;left:81.10px;top:73.00px;width:1.00px;height:19.00px;background:#666"></div><div style="position:absolute;left:80.10px;top:72.50px;width:3.00px;height:4.50px;background:linear-gradient(#fff,#d8d8d8);box-shadow:0 0.5px 1px #555;border-radius:0.5px"></div><div style="position:absolute;left:83.90px;top:72.50px;width:1.30px;height:19.00px;background:#5e5e5e"></div><div style="position:absolute;left:85.70px;top:72.50px;width:1.30px;height:19.00px;background:#6a6a6a"></div><div style="position:absolute;left:79.30px;top:94.60px;width:2.80px;height:2.80px;border-radius:50%;background:#f4f4f4;box-shadow:0 0 0 0.6px #777"></div><div style="position:absolute;left:83.30px;top:94.60px;width:2.80px;height:2.80px;border-radius:50%;background:#f4f4f4;box-shadow:0 0 0 0.6px #777"></div><div style="position:absolute;left:79.70px;top:99.00px;width:6.00px;height:1.50px;background:#c4c4c4"></div><div style="position:absolute;left:96.90px;top:0.00px;width:0.60px;height:102.50px;background:#c4c4c4"></div><div style="position:absolute;left:91.90px;top:2.00px;width:0.80px;height:2.00px;background:#999"></div><div style="position:absolute;left:91.50px;top:-2.80px;width:1.60px;height:1.60px;border-radius:50%;background:#3a3a3a"></div><div style="position:absolute;left:89.70px;top:6.20px;width:5.20px;height:5.00px;background:linear-gradient(#fff,#c8c8c8);border-radius:2.5px 2.5px 1.5px 1.5px;box-shadow:0 0.6px 0.8px #777"></div><div style="position:absolute;left:89.20px;top:13.50px;width:6.20px;height:6.20px;border-radius:50%;background:#f0d0b0"></div><div style="position:absolute;left:90.40px;top:14.40px;width:3.80px;height:3.80px;border-radius:50%;background:#f4b018;box-shadow:0 0.4px 0.6px rgba(0,0,0,0.6)"></div><div style="position:absolute;left:89.20px;top:21.00px;width:6.20px;height:6.20px;border-radius:50%;background:#f0c8b0"></div><div style="position:absolute;left:90.40px;top:21.90px;width:3.80px;height:3.80px;border-radius:50%;background:#f8781c;box-shadow:0 0.4px 0.6px rgba(0,0,0,0.6)"></div><div style="position:absolute;left:89.20px;top:28.50px;width:6.20px;height:6.20px;border-radius:50%;background:#f0c8b0"></div><div style="position:absolute;left:90.40px;top:29.40px;width:3.80px;height:3.80px;border-radius:50%;background:#f8781c;box-shadow:0 0.4px 0.6px rgba(0,0,0,0.6)"></div><div style="position:absolute;left:89.20px;top:36.00px;width:6.20px;height:6.20px;border-radius:50%;background:#f0b8b0"></div><div style="position:absolute;left:90.40px;top:36.90px;width:3.80px;height:3.80px;border-radius:50%;background:#f02030;box-shadow:0 0.4px 0.6px rgba(0,0,0,0.6)"></div><div style="position:absolute;left:89.20px;top:43.90px;width:6.20px;height:6.20px;border-radius:50%;background:#ecb8a0"></div><div style="position:absolute;left:90.40px;top:44.80px;width:3.80px;height:3.80px;border-radius:50%;background:#383838;box-shadow:0 0.4px 0.6px rgba(0,0,0,0.6)"></div><div style="position:absolute;left:89.20px;top:52.00px;width:6.20px;height:6.20px;border-radius:50%;background:#ecb8a0"></div><div style="position:absolute;left:90.40px;top:52.90px;width:3.80px;height:3.80px;border-radius:50%;background:#383838;box-shadow:0 0.4px 0.6px rgba(0,0,0,0.6)"></div><div style="position:absolute;left:89.30px;top:58.80px;width:6.00px;height:2.60px;background:#fafafa;border-radius:1.3px;box-shadow:0 0 0 0.4px #999"></div><div style="position:absolute;left:89.10px;top:63.20px;width:6.40px;height:6.40px;border-radius:50%;background:#e8c4b0"></div><div style="position:absolute;left:90.20px;top:63.90px;width:4.20px;height:4.20px;border-radius:50%;background:#1aa8e8;box-shadow:0 0.4px 0.6px rgba(0,0,0,0.6)"></div><div style="position:absolute;left:90.70px;top:73.00px;width:1.00px;height:19.00px;background:#666"></div><div style="position:absolute;left:89.70px;top:72.50px;width:3.00px;height:4.50px;background:linear-gradient(#fff,#d8d8d8);box-shadow:0 0.5px 1px #555;border-radius:0.5px"></div><div style="position:absolute;left:93.50px;top:72.50px;width:1.30px;height:19.00px;background:#5e5e5e"></div><div style="position:absolute;left:95.30px;top:72.50px;width:1.30px;height:19.00px;background:#6a6a6a"></div><div style="position:absolute;left:88.90px;top:94.60px;width:2.80px;height:2.80px;border-radius:50%;background:#f4f4f4;box-shadow:0 0 0 0.6px #777"></div><div style="position:absolute;left:92.90px;top:94.60px;width:2.80px;height:2.80px;border-radius:50%;background:#f4f4f4;box-shadow:0 0 0 0.6px #777"></div><div style="position:absolute;left:89.30px;top:99.00px;width:6.00px;height:1.50px;background:#c4c4c4"></div><div style="position:absolute;left:106.50px;top:0.00px;width:0.60px;height:102.50px;background:#c4c4c4"></div><div style="position:absolute;left:101.50px;top:2.00px;width:0.80px;height:2.00px;background:#999"></div><div style="position:absolute;left:101.10px;top:-2.80px;width:1.60px;height:1.60px;border-radius:50%;background:#3a3a3a"></div><div style="position:absolute;left:99.30px;top:6.20px;width:5.20px;height:5.00px;background:linear-gradient(#fff,#c8c8c8);border-radius:2.5px 2.5px 1.5px 1.5px;box-shadow:0 0.6px 0.8px #777"></div><div style="position:absolute;left:98.80px;top:13.50px;width:6.20px;height:6.20px;border-radius:50%;background:#f0d0b0"></div><div style="position:absolute;left:100.00px;top:14.40px;width:3.80px;height:3.80px;border-radius:50%;background:#f4b018;box-shadow:0 0.4px 0.6px rgba(0,0,0,0.6)"></div><div style="position:absolute;left:98.80px;top:21.00px;width:6.20px;height:6.20px;border-radius:50%;background:#f0c8b0"></div><div style="position:absolute;left:100.00px;top:21.90px;width:3.80px;height:3.80px;border-radius:50%;background:#f8781c;box-shadow:0 0.4px 0.6px rgba(0,0,0,0.6)"></div><div style="position:absolute;left:98.80px;top:28.50px;width:6.20px;height:6.20px;border-radius:50%;background:#f0c8b0"></div><div style="position:absolute;left:100.00px;top:29.40px;width:3.80px;height:3.80px;border-radius:50%;background:#f8781c;box-shadow:0 0.4px 0.6px rgba(0,0,0,0.6)"></div><div style="position:absolute;left:98.80px;top:36.00px;width:6.20px;height:6.20px;border-radius:50%;background:#f0b8b0"></div><div style="position:absolute;left:100.00px;top:36.90px;width:3.80px;height:3.80px;border-radius:50%;background:#f02030;box-shadow:0 0.4px 0.6px rgba(0,0,0,0.6)"></div><div style="position:absolute;left:98.80px;top:43.90px;width:6.20px;height:6.20px;border-radius:50%;background:#ecb8a0"></div><div style="position:absolute;left:100.00px;top:44.80px;width:3.80px;height:3.80px;border-radius:50%;background:#383838;box-shadow:0 0.4px 0.6px rgba(0,0,0,0.6)"></div><div style="position:absolute;left:98.80px;top:52.00px;width:6.20px;height:6.20px;border-radius:50%;background:#ecb8a0"></div><div style="position:absolute;left:100.00px;top:52.90px;width:3.80px;height:3.80px;border-radius:50%;background:#383838;box-shadow:0 0.4px 0.6px rgba(0,0,0,0.6)"></div><div style="position:absolute;left:98.90px;top:58.80px;width:6.00px;height:2.60px;background:#fafafa;border-radius:1.3px;box-shadow:0 0 0 0.4px #999"></div><div style="position:absolute;left:98.70px;top:63.20px;width:6.40px;height:6.40px;border-radius:50%;background:#e8c4b0"></div><div style="position:absolute;left:99.80px;top:63.90px;width:4.20px;height:4.20px;border-radius:50%;background:#1aa8e8;box-shadow:0 0.4px 0.6px rgba(0,0,0,0.6)"></div><div style="position:absolute;left:100.30px;top:73.00px;width:1.00px;height:19.00px;background:#666"></div><div style="position:absolute;left:99.30px;top:72.50px;width:3.00px;height:4.50px;background:linear-gradient(#fff,#d8d8d8);box-shadow:0 0.5px 1px #555;border-radius:0.5px"></div><div style="position:absolute;left:103.10px;top:72.50px;width:1.30px;height:19.00px;background:#5e5e5e"></div><div style="position:absolute;left:104.90px;top:72.50px;width:1.30px;height:19.00px;background:#6a6a6a"></div><div style="position:absolute;left:98.50px;top:94.60px;width:2.80px;height:2.80px;border-radius:50%;background:#f4f4f4;box-shadow:0 0 0 0.6px #777"></div><div style="position:absolute;left:102.50px;top:94.60px;width:2.80px;height:2.80px;border-radius:50%;background:#f4f4f4;box-shadow:0 0 0 0.6px #777"></div><div style="position:absolute;left:98.90px;top:99.00px;width:6.00px;height:1.50px;background:#c4c4c4"></div><div style="position:absolute;left:116.10px;top:0.00px;width:0.60px;height:102.50px;background:#c4c4c4"></div><div style="position:absolute;left:111.10px;top:2.00px;width:0.80px;height:2.00px;background:#999"></div><div style="position:absolute;left:110.70px;top:-2.80px;width:1.60px;height:1.60px;border-radius:50%;background:#3a3a3a"></div><div style="position:absolute;left:108.90px;top:6.20px;width:5.20px;height:5.00px;background:linear-gradient(#fff,#c8c8c8);border-radius:2.5px 2.5px 1.5px 1.5px;box-shadow:0 0.6px 0.8px #777"></div><div style="position:absolute;left:108.40px;top:13.50px;width:6.20px;height:6.20px;border-radius:50%;background:#f0d0b0"></div><div style="position:absolute;left:109.60px;top:14.40px;width:3.80px;height:3.80px;border-radius:50%;background:#f4b018;box-shadow:0 0.4px 0.6px rgba(0,0,0,0.6)"></div><div style="position:absolute;left:108.40px;top:21.00px;width:6.20px;height:6.20px;border-radius:50%;background:#f0c8b0"></div><div style="position:absolute;left:109.60px;top:21.90px;width:3.80px;height:3.80px;border-radius:50%;background:#f8781c;box-shadow:0 0.4px 0.6px rgba(0,0,0,0.6)"></div><div style="position:absolute;left:108.40px;top:28.50px;width:6.20px;height:6.20px;border-radius:50%;background:#f0c8b0"></div><div style="position:absolute;left:109.60px;top:29.40px;width:3.80px;height:3.80px;border-radius:50%;background:#f8781c;box-shadow:0 0.4px 0.6px rgba(0,0,0,0.6)"></div><div style="position:absolute;left:108.40px;top:36.00px;width:6.20px;height:6.20px;border-radius:50%;background:#f0b8b0"></div><div style="position:absolute;left:109.60px;top:36.90px;width:3.80px;height:3.80px;border-radius:50%;background:#f02030;box-shadow:0 0.4px 0.6px rgba(0,0,0,0.6)"></div><div style="position:absolute;left:108.40px;top:43.90px;width:6.20px;height:6.20px;border-radius:50%;background:#ecb8a0"></div><div style="position:absolute;left:109.60px;top:44.80px;width:3.80px;height:3.80px;border-radius:50%;background:#383838;box-shadow:0 0.4px 0.6px rgba(0,0,0,0.6)"></div><div style="position:absolute;left:108.40px;top:52.00px;width:6.20px;height:6.20px;border-radius:50%;background:#ecb8a0"></div><div style="position:absolute;left:109.60px;top:52.90px;width:3.80px;height:3.80px;border-radius:50%;background:#383838;box-shadow:0 0.4px 0.6px rgba(0,0,0,0.6)"></div><div style="position:absolute;left:108.50px;top:58.80px;width:6.00px;height:2.60px;background:#fafafa;border-radius:1.3px;box-shadow:0 0 0 0.4px #999"></div><div style="position:absolute;left:108.30px;top:63.20px;width:6.40px;height:6.40px;border-radius:50%;background:#e8c4b0"></div><div style="position:absolute;left:109.40px;top:63.90px;width:4.20px;height:4.20px;border-radius:50%;background:#1aa8e8;box-shadow:0 0.4px 0.6px rgba(0,0,0,0.6)"></div><div style="position:absolute;left:109.90px;top:73.00px;width:1.00px;height:19.00px;background:#666"></div><div style="position:absolute;left:108.90px;top:72.50px;width:3.00px;height:4.50px;background:linear-gradient(#fff,#d8d8d8);box-shadow:0 0.5px 1px #555;border-radius:0.5px"></div><div style="position:absolute;left:112.70px;top:72.50px;width:1.30px;height:19.00px;background:#5e5e5e"></div><div style="position:absolute;left:114.50px;top:72.50px;width:1.30px;height:19.00px;background:#6a6a6a"></div><div style="position:absolute;left:108.10px;top:94.60px;width:2.80px;height:2.80px;border-radius:50%;background:#f4f4f4;box-shadow:0 0 0 0.6px #777"></div><div style="position:absolute;left:112.10px;top:94.60px;width:2.80px;height:2.80px;border-radius:50%;background:#f4f4f4;box-shadow:0 0 0 0.6px #777"></div><div style="position:absolute;left:108.50px;top:99.00px;width:6.00px;height:1.50px;background:#c4c4c4"></div><div style="position:absolute;left:125.70px;top:0.00px;width:0.60px;height:102.50px;background:#c4c4c4"></div><div style="position:absolute;left:120.70px;top:2.00px;width:0.80px;height:2.00px;background:#999"></div><div style="position:absolute;left:120.30px;top:-2.80px;width:1.60px;height:1.60px;border-radius:50%;background:#3a3a3a"></div><div style="position:absolute;left:118.50px;top:6.20px;width:5.20px;height:5.00px;background:linear-gradient(#fff,#c8c8c8);border-radius:2.5px 2.5px 1.5px 1.5px;box-shadow:0 0.6px 0.8px #777"></div><div style="position:absolute;left:118.00px;top:13.50px;width:6.20px;height:6.20px;border-radius:50%;background:#f0d0b0"></div><div style="position:absolute;left:119.20px;top:14.40px;width:3.80px;height:3.80px;border-radius:50%;background:#f4b018;box-shadow:0 0.4px 0.6px rgba(0,0,0,0.6)"></div><div style="position:absolute;left:118.00px;top:21.00px;width:6.20px;height:6.20px;border-radius:50%;background:#f0c8b0"></div><div style="position:absolute;left:119.20px;top:21.90px;width:3.80px;height:3.80px;border-radius:50%;background:#f8781c;box-shadow:0 0.4px 0.6px rgba(0,0,0,0.6)"></div><div style="position:absolute;left:118.00px;top:28.50px;width:6.20px;height:6.20px;border-radius:50%;background:#f0c8b0"></div><div style="position:absolute;left:119.20px;top:29.40px;width:3.80px;height:3.80px;border-radius:50%;background:#f8781c;box-shadow:0 0.4px 0.6px rgba(0,0,0,0.6)"></div><div style="position:absolute;left:118.00px;top:36.00px;width:6.20px;height:6.20px;border-radius:50%;background:#f0b8b0"></div><div style="position:absolute;left:119.20px;top:36.90px;width:3.80px;height:3.80px;border-radius:50%;background:#f02030;box-shadow:0 0.4px 0.6px rgba(0,0,0,0.6)"></div><div style="position:absolute;left:118.00px;top:43.90px;width:6.20px;height:6.20px;border-radius:50%;background:#ecb8a0"></div><div style="position:absolute;left:119.20px;top:44.80px;width:3.80px;height:3.80px;border-radius:50%;background:#383838;box-shadow:0 0.4px 0.6px rgba(0,0,0,0.6)"></div><div style="position:absolute;left:118.00px;top:52.00px;width:6.20px;height:6.20px;border-radius:50%;background:#ecb8a0"></div><div style="position:absolute;left:119.20px;top:52.90px;width:3.80px;height:3.80px;border-radius:50%;background:#383838;box-shadow:0 0.4px 0.6px rgba(0,0,0,0.6)"></div><div style="position:absolute;left:118.10px;top:58.80px;width:6.00px;height:2.60px;background:#fafafa;border-radius:1.3px;box-shadow:0 0 0 0.4px #999"></div><div style="position:absolute;left:117.90px;top:63.20px;width:6.40px;height:6.40px;border-radius:50%;background:#e8c4b0"></div><div style="position:absolute;left:119.00px;top:63.90px;width:4.20px;height:4.20px;border-radius:50%;background:#1aa8e8;box-shadow:0 0.4px 0.6px rgba(0,0,0,0.6)"></div><div style="position:absolute;left:119.50px;top:73.00px;width:1.00px;height:19.00px;background:#666"></div><div style="position:absolute;left:118.50px;top:72.50px;width:3.00px;height:4.50px;background:linear-gradient(#fff,#d8d8d8);box-shadow:0 0.5px 1px #555;border-radius:0.5px"></div><div style="position:absolute;left:122.30px;top:72.50px;width:1.30px;height:19.00px;background:#5e5e5e"></div><div style="position:absolute;left:124.10px;top:72.50px;width:1.30px;height:19.00px;background:#6a6a6a"></div><div style="position:absolute;left:117.70px;top:94.60px;width:2.80px;height:2.80px;border-radius:50%;background:#f4f4f4;box-shadow:0 0 0 0.6px #777"></div><div style="position:absolute;left:121.70px;top:94.60px;width:2.80px;height:2.80px;border-radius:50%;background:#f4f4f4;box-shadow:0 0 0 0.6px #777"></div><div style="position:absolute;left:118.10px;top:99.00px;width:6.00px;height:1.50px;background:#c4c4c4"></div><div style="position:absolute;left:135.30px;top:0.00px;width:0.60px;height:102.50px;background:#c4c4c4"></div><div style="position:absolute;left:130.30px;top:2.00px;width:0.80px;height:2.00px;background:#999"></div><div style="position:absolute;left:129.90px;top:-2.80px;width:1.60px;height:1.60px;border-radius:50%;background:#3a3a3a"></div><div style="position:absolute;left:128.10px;top:6.20px;width:5.20px;height:5.00px;background:linear-gradient(#fff,#c8c8c8);border-radius:2.5px 2.5px 1.5px 1.5px;box-shadow:0 0.6px 0.8px #777"></div><div style="position:absolute;left:127.60px;top:13.50px;width:6.20px;height:6.20px;border-radius:50%;background:#f0d0b0"></div><div style="position:absolute;left:128.80px;top:14.40px;width:3.80px;height:3.80px;border-radius:50%;background:#f4b018;box-shadow:0 0.4px 0.6px rgba(0,0,0,0.6)"></div><div style="position:absolute;left:127.60px;top:21.00px;width:6.20px;height:6.20px;border-radius:50%;background:#f0c8b0"></div><div style="position:absolute;left:128.80px;top:21.90px;width:3.80px;height:3.80px;border-radius:50%;background:#f8781c;box-shadow:0 0.4px 0.6px rgba(0,0,0,0.6)"></div><div style="position:absolute;left:127.60px;top:28.50px;width:6.20px;height:6.20px;border-radius:50%;background:#f0c8b0"></div><div style="position:absolute;left:128.80px;top:29.40px;width:3.80px;height:3.80px;border-radius:50%;background:#f8781c;box-shadow:0 0.4px 0.6px rgba(0,0,0,0.6)"></div><div style="position:absolute;left:127.60px;top:36.00px;width:6.20px;height:6.20px;border-radius:50%;background:#f0b8b0"></div><div style="position:absolute;left:128.80px;top:36.90px;width:3.80px;height:3.80px;border-radius:50%;background:#f02030;box-shadow:0 0.4px 0.6px rgba(0,0,0,0.6)"></div><div style="position:absolute;left:127.60px;top:43.90px;width:6.20px;height:6.20px;border-radius:50%;background:#ecb8a0"></div><div style="position:absolute;left:128.80px;top:44.80px;width:3.80px;height:3.80px;border-radius:50%;background:#383838;box-shadow:0 0.4px 0.6px rgba(0,0,0,0.6)"></div><div style="position:absolute;left:127.60px;top:52.00px;width:6.20px;height:6.20px;border-radius:50%;background:#ecb8a0"></div><div style="position:absolute;left:128.80px;top:52.90px;width:3.80px;height:3.80px;border-radius:50%;background:#383838;box-shadow:0 0.4px 0.6px rgba(0,0,0,0.6)"></div><div style="position:absolute;left:127.70px;top:58.80px;width:6.00px;height:2.60px;background:#fafafa;border-radius:1.3px;box-shadow:0 0 0 0.4px #999"></div><div style="position:absolute;left:127.50px;top:63.20px;width:6.40px;height:6.40px;border-radius:50%;background:#e8c4b0"></div><div style="position:absolute;left:128.60px;top:63.90px;width:4.20px;height:4.20px;border-radius:50%;background:#1aa8e8;box-shadow:0 0.4px 0.6px rgba(0,0,0,0.6)"></div><div style="position:absolute;left:129.10px;top:73.00px;width:1.00px;height:19.00px;background:#666"></div><div style="position:absolute;left:128.10px;top:72.50px;width:3.00px;height:4.50px;background:linear-gradient(#fff,#d8d8d8);box-shadow:0 0.5px 1px #555;border-radius:0.5px"></div><div style="position:absolute;left:131.90px;top:72.50px;width:1.30px;height:19.00px;background:#5e5e5e"></div><div style="position:absolute;left:133.70px;top:72.50px;width:1.30px;height:19.00px;background:#6a6a6a"></div><div style="position:absolute;left:127.30px;top:94.60px;width:2.80px;height:2.80px;border-radius:50%;background:#f4f4f4;box-shadow:0 0 0 0.6px #777"></div><div style="position:absolute;left:131.30px;top:94.60px;width:2.80px;height:2.80px;border-radius:50%;background:#f4f4f4;box-shadow:0 0 0 0.6px #777"></div><div style="position:absolute;left:127.70px;top:99.00px;width:6.00px;height:1.50px;background:#c4c4c4"></div><div style="position:absolute;left:144.90px;top:0.00px;width:0.60px;height:102.50px;background:#c4c4c4"></div><div style="position:absolute;left:139.90px;top:2.00px;width:0.80px;height:2.00px;background:#999"></div><div style="position:absolute;left:139.50px;top:-2.80px;width:1.60px;height:1.60px;border-radius:50%;background:#3a3a3a"></div><div style="position:absolute;left:137.70px;top:6.20px;width:5.20px;height:5.00px;background:linear-gradient(#fff,#c8c8c8);border-radius:2.5px 2.5px 1.5px 1.5px;box-shadow:0 0.6px 0.8px #777"></div><div style="position:absolute;left:137.20px;top:13.50px;width:6.20px;height:6.20px;border-radius:50%;background:#f0d0b0"></div><div style="position:absolute;left:138.40px;top:14.40px;width:3.80px;height:3.80px;border-radius:50%;background:#f4b018;box-shadow:0 0.4px 0.6px rgba(0,0,0,0.6)"></div><div style="position:absolute;left:137.20px;top:21.00px;width:6.20px;height:6.20px;border-radius:50%;background:#f0c8b0"></div><div style="position:absolute;left:138.40px;top:21.90px;width:3.80px;height:3.80px;border-radius:50%;background:#f8781c;box-shadow:0 0.4px 0.6px rgba(0,0,0,0.6)"></div><div style="position:absolute;left:137.20px;top:28.50px;width:6.20px;height:6.20px;border-radius:50%;background:#f0c8b0"></div><div style="position:absolute;left:138.40px;top:29.40px;width:3.80px;height:3.80px;border-radius:50%;background:#f8781c;box-shadow:0 0.4px 0.6px rgba(0,0,0,0.6)"></div><div style="position:absolute;left:137.20px;top:36.00px;width:6.20px;height:6.20px;border-radius:50%;background:#f0b8b0"></div><div style="position:absolute;left:138.40px;top:36.90px;width:3.80px;height:3.80px;border-radius:50%;background:#f02030;box-shadow:0 0.4px 0.6px rgba(0,0,0,0.6)"></div><div style="position:absolute;left:137.20px;top:43.90px;width:6.20px;height:6.20px;border-radius:50%;background:#ecb8a0"></div><div style="position:absolute;left:138.40px;top:44.80px;width:3.80px;height:3.80px;border-radius:50%;background:#383838;box-shadow:0 0.4px 0.6px rgba(0,0,0,0.6)"></div><div style="position:absolute;left:137.20px;top:52.00px;width:6.20px;height:6.20px;border-radius:50%;background:#ecb8a0"></div><div style="position:absolute;left:138.40px;top:52.90px;width:3.80px;height:3.80px;border-radius:50%;background:#383838;box-shadow:0 0.4px 0.6px rgba(0,0,0,0.6)"></div><div style="position:absolute;left:137.30px;top:58.80px;width:6.00px;height:2.60px;background:#fafafa;border-radius:1.3px;box-shadow:0 0 0 0.4px #999"></div><div style="position:absolute;left:137.10px;top:63.20px;width:6.40px;height:6.40px;border-radius:50%;background:#e8c4b0"></div><div style="position:absolute;left:138.20px;top:63.90px;width:4.20px;height:4.20px;border-radius:50%;background:#1aa8e8;box-shadow:0 0.4px 0.6px rgba(0,0,0,0.6)"></div><div style="position:absolute;left:138.70px;top:73.00px;width:1.00px;height:19.00px;background:#666"></div><div style="position:absolute;left:137.70px;top:72.50px;width:3.00px;height:4.50px;background:linear-gradient(#fff,#d8d8d8);box-shadow:0 0.5px 1px #555;border-radius:0.5px"></div><div style="position:absolute;left:141.50px;top:72.50px;width:1.30px;height:19.00px;background:#5e5e5e"></div><div style="position:absolute;left:143.30px;top:72.50px;width:1.30px;height:19.00px;background:#6a6a6a"></div><div style="position:absolute;left:136.90px;top:94.60px;width:2.80px;height:2.80px;border-radius:50%;background:#f4f4f4;box-shadow:0 0 0 0.6px #777"></div><div style="position:absolute;left:140.90px;top:94.60px;width:2.80px;height:2.80px;border-radius:50%;background:#f4f4f4;box-shadow:0 0 0 0.6px #777"></div><div style="position:absolute;left:137.30px;top:99.00px;width:6.00px;height:1.50px;background:#c4c4c4"></div><div style="position:absolute;left:154.50px;top:0.00px;width:0.60px;height:102.50px;background:#c4c4c4"></div><div style="position:absolute;left:149.50px;top:2.00px;width:0.80px;height:2.00px;background:#999"></div><div style="position:absolute;left:149.10px;top:-2.80px;width:1.60px;height:1.60px;border-radius:50%;background:#3a3a3a"></div><div style="position:absolute;left:147.30px;top:6.20px;width:5.20px;height:5.00px;background:linear-gradient(#fff,#c8c8c8);border-radius:2.5px 2.5px 1.5px 1.5px;box-shadow:0 0.6px 0.8px #777"></div><div style="position:absolute;left:146.80px;top:13.50px;width:6.20px;height:6.20px;border-radius:50%;background:#f0d0b0"></div><div style="position:absolute;left:148.00px;top:14.40px;width:3.80px;height:3.80px;border-radius:50%;background:#f4b018;box-shadow:0 0.4px 0.6px rgba(0,0,0,0.6)"></div><div style="position:absolute;left:146.80px;top:21.00px;width:6.20px;height:6.20px;border-radius:50%;background:#f0c8b0"></div><div style="position:absolute;left:148.00px;top:21.90px;width:3.80px;height:3.80px;border-radius:50%;background:#f8781c;box-shadow:0 0.4px 0.6px rgba(0,0,0,0.6)"></div><div style="position:absolute;left:146.80px;top:28.50px;width:6.20px;height:6.20px;border-radius:50%;background:#f0c8b0"></div><div style="position:absolute;left:148.00px;top:29.40px;width:3.80px;height:3.80px;border-radius:50%;background:#f8781c;box-shadow:0 0.4px 0.6px rgba(0,0,0,0.6)"></div><div style="position:absolute;left:146.80px;top:36.00px;width:6.20px;height:6.20px;border-radius:50%;background:#f0b8b0"></div><div style="position:absolute;left:148.00px;top:36.90px;width:3.80px;height:3.80px;border-radius:50%;background:#f02030;box-shadow:0 0.4px 0.6px rgba(0,0,0,0.6)"></div><div style="position:absolute;left:146.80px;top:43.90px;width:6.20px;height:6.20px;border-radius:50%;background:#ecb8a0"></div><div style="position:absolute;left:148.00px;top:44.80px;width:3.80px;height:3.80px;border-radius:50%;background:#383838;box-shadow:0 0.4px 0.6px rgba(0,0,0,0.6)"></div><div style="position:absolute;left:146.80px;top:52.00px;width:6.20px;height:6.20px;border-radius:50%;background:#ecb8a0"></div><div style="position:absolute;left:148.00px;top:52.90px;width:3.80px;height:3.80px;border-radius:50%;background:#383838;box-shadow:0 0.4px 0.6px rgba(0,0,0,0.6)"></div><div style="position:absolute;left:146.90px;top:58.80px;width:6.00px;height:2.60px;background:#fafafa;border-radius:1.3px;box-shadow:0 0 0 0.4px #999"></div><div style="position:absolute;left:146.70px;top:63.20px;width:6.40px;height:6.40px;border-radius:50%;background:#e8c4b0"></div><div style="position:absolute;left:147.80px;top:63.90px;width:4.20px;height:4.20px;border-radius:50%;background:#1aa8e8;box-shadow:0 0.4px 0.6px rgba(0,0,0,0.6)"></div><div style="position:absolute;left:148.30px;top:73.00px;width:1.00px;height:19.00px;background:#666"></div><div style="position:absolute;left:147.30px;top:72.50px;width:3.00px;height:4.50px;background:linear-gradient(#fff,#d8d8d8);box-shadow:0 0.5px 1px #555;border-radius:0.5px"></div><div style="position:absolute;left:151.10px;top:72.50px;width:1.30px;height:19.00px;background:#5e5e5e"></div><div style="position:absolute;left:152.90px;top:72.50px;width:1.30px;height:19.00px;background:#6a6a6a"></div><div style="position:absolute;left:146.50px;top:94.60px;width:2.80px;height:2.80px;border-radius:50%;background:#f4f4f4;box-shadow:0 0 0 0.6px #777"></div><div style="position:absolute;left:150.50px;top:94.60px;width:2.80px;height:2.80px;border-radius:50%;background:#f4f4f4;box-shadow:0 0 0 0.6px #777"></div><div style="position:absolute;left:146.90px;top:99.00px;width:6.00px;height:1.50px;background:#c4c4c4"></div><div style="position:absolute;left:164.10px;top:0.00px;width:0.60px;height:102.50px;background:#c4c4c4"></div><div style="position:absolute;left:159.10px;top:2.00px;width:0.80px;height:2.00px;background:#999"></div><div style="position:absolute;left:158.70px;top:-2.80px;width:1.60px;height:1.60px;border-radius:50%;background:#3a3a3a"></div><div style="position:absolute;left:156.90px;top:6.20px;width:5.20px;height:5.00px;background:linear-gradient(#fff,#c8c8c8);border-radius:2.5px 2.5px 1.5px 1.5px;box-shadow:0 0.6px 0.8px #777"></div><div style="position:absolute;left:156.40px;top:13.50px;width:6.20px;height:6.20px;border-radius:50%;background:#f0d0b0"></div><div style="position:absolute;left:157.60px;top:14.40px;width:3.80px;height:3.80px;border-radius:50%;background:#f4b018;box-shadow:0 0.4px 0.6px rgba(0,0,0,0.6)"></div><div style="position:absolute;left:156.40px;top:21.00px;width:6.20px;height:6.20px;border-radius:50%;background:#f0c8b0"></div><div style="position:absolute;left:157.60px;top:21.90px;width:3.80px;height:3.80px;border-radius:50%;background:#f8781c;box-shadow:0 0.4px 0.6px rgba(0,0,0,0.6)"></div><div style="position:absolute;left:156.40px;top:28.50px;width:6.20px;height:6.20px;border-radius:50%;background:#f0c8b0"></div><div style="position:absolute;left:157.60px;top:29.40px;width:3.80px;height:3.80px;border-radius:50%;background:#f8781c;box-shadow:0 0.4px 0.6px rgba(0,0,0,0.6)"></div><div style="position:absolute;left:156.40px;top:36.00px;width:6.20px;height:6.20px;border-radius:50%;background:#f0b8b0"></div><div style="position:absolute;left:157.60px;top:36.90px;width:3.80px;height:3.80px;border-radius:50%;background:#f02030;box-shadow:0 0.4px 0.6px rgba(0,0,0,0.6)"></div><div style="position:absolute;left:156.40px;top:43.90px;width:6.20px;height:6.20px;border-radius:50%;background:#ecb8a0"></div><div style="position:absolute;left:157.60px;top:44.80px;width:3.80px;height:3.80px;border-radius:50%;background:#383838;box-shadow:0 0.4px 0.6px rgba(0,0,0,0.6)"></div><div style="position:absolute;left:156.40px;top:52.00px;width:6.20px;height:6.20px;border-radius:50%;background:#ecb8a0"></div><div style="position:absolute;left:157.60px;top:52.90px;width:3.80px;height:3.80px;border-radius:50%;background:#383838;box-shadow:0 0.4px 0.6px rgba(0,0,0,0.6)"></div><div style="position:absolute;left:156.50px;top:58.80px;width:6.00px;height:2.60px;background:#fafafa;border-radius:1.3px;box-shadow:0 0 0 0.4px #999"></div><div style="position:absolute;left:156.30px;top:63.20px;width:6.40px;height:6.40px;border-radius:50%;background:#e8c4b0"></div><div style="position:absolute;left:157.40px;top:63.90px;width:4.20px;height:4.20px;border-radius:50%;background:#1aa8e8;box-shadow:0 0.4px 0.6px rgba(0,0,0,0.6)"></div><div style="position:absolute;left:157.90px;top:73.00px;width:1.00px;height:19.00px;background:#666"></div><div style="position:absolute;left:156.90px;top:72.50px;width:3.00px;height:4.50px;background:linear-gradient(#fff,#d8d8d8);box-shadow:0 0.5px 1px #555;border-radius:0.5px"></div><div style="position:absolute;left:160.70px;top:72.50px;width:1.30px;height:19.00px;background:#5e5e5e"></div><div style="position:absolute;left:162.50px;top:72.50px;width:1.30px;height:19.00px;background:#6a6a6a"></div><div style="position:absolute;left:156.10px;top:94.60px;width:2.80px;height:2.80px;border-radius:50%;background:#f4f4f4;box-shadow:0 0 0 0.6px #777"></div><div style="position:absolute;left:160.10px;top:94.60px;width:2.80px;height:2.80px;border-radius:50%;background:#f4f4f4;box-shadow:0 0 0 0.6px #777"></div><div style="position:absolute;left:156.50px;top:99.00px;width:6.00px;height:1.50px;background:#c4c4c4"></div></div>
<div style="left:625px;top:486.3px;width:167px;height:106px;transform-origin:0 0;transform:translateX(205px) scale(-1.2275,1.2566);"><div style="position:absolute;left:0.00px;top:0.00px;width:167.00px;height:106.00px;background:linear-gradient(#e2e2e2,#d2d2d2);box-shadow:0 1px 2px #000"></div><div style="position:absolute;left:0.00px;top:102.50px;width:167.00px;height:3.50px;background:linear-gradient(#777,#444)"></div><div style="position:absolute;left:0.00px;top:0.00px;width:167.00px;height:0.80px;background:#f4f4f4"></div><div style="position:absolute;left:0.00px;top:0.00px;width:10.70px;height:102.50px;background:linear-gradient(#dcdcdc,#cacaca)"></div><div style="position:absolute;left:10.50px;top:0.00px;width:0.70px;height:102.50px;background:#b0b0b0"></div><div style="position:absolute;left:0.70px;top:5.40px;width:9.20px;height:9.20px;border-radius:50%;background:radial-gradient(circle closest-side,#ddd 0 12%,#444 22%,#3a3a3a 55%,#666 68%,#3a3a3a 85%,#555 100%)"></div><div style="position:absolute;left:1.70px;top:33.40px;width:7.20px;height:7.20px;border-radius:50%;background:#e8b098"></div><div style="position:absolute;left:3.00px;top:34.40px;width:4.60px;height:4.60px;border-radius:50%;background:#333"></div><div style="position:absolute;left:1.70px;top:48.90px;width:7.20px;height:7.20px;border-radius:50%;background:#e8b098"></div><div style="position:absolute;left:3.00px;top:49.90px;width:4.60px;height:4.60px;border-radius:50%;background:#333"></div><div style="position:absolute;left:1.70px;top:62.80px;width:7.20px;height:7.20px;border-radius:50%;background:#e8c4b0"></div><div style="position:absolute;left:2.80px;top:63.50px;width:5.00px;height:5.00px;border-radius:50%;background:radial-gradient(circle at 40% 35%,#7de0ff,#1898d8);box-shadow:0 0.4px 0.6px rgba(0,0,0,0.6)"></div><div style="position:absolute;left:3.20px;top:73.00px;width:1.00px;height:19.00px;background:#666"></div><div style="position:absolute;left:2.00px;top:72.50px;width:3.00px;height:4.50px;background:#f8f8f8;box-shadow:0 0.5px 1px #555"></div><div style="position:absolute;left:6.00px;top:76.00px;width:1.40px;height:16.00px;background:#6a6a6a"></div><div style="position:absolute;left:7.60px;top:76.00px;width:1.20px;height:16.00px;background:#888"></div><div style="position:absolute;left:20.10px;top:0.00px;width:0.60px;height:102.50px;background:#c4c4c4"></div><div style="position:absolute;left:15.10px;top:2.00px;width:0.80px;height:2.00px;background:#999"></div><div style="position:absolute;left:14.70px;top:-2.80px;width:1.60px;height:1.60px;border-radius:50%;background:#3a3a3a"></div><div style="position:absolute;left:12.90px;top:6.20px;width:5.20px;height:5.00px;background:linear-gradient(#fff,#c8c8c8);border-radius:2.5px 2.5px 1.5px 1.5px;box-shadow:0 0.6px 0.8px #777"></div><div style="position:absolute;left:12.40px;top:13.50px;width:6.20px;height:6.20px;border-radius:50%;background:#f0d0b0"></div><div style="position:absolute;left:13.60px;top:14.40px;width:3.80px;height:3.80px;border-radius:50%;background:#f4b018;box-shadow:0 0.4px 0.6px rgba(0,0,0,0.6)"></div><div style="position:absolute;left:12.40px;top:21.00px;width:6.20px;height:6.20px;border-radius:50%;background:#f0c8b0"></div><div style="position:absolute;left:13.60px;top:21.90px;width:3.80px;height:3.80px;border-radius:50%;background:#f8781c;box-shadow:0 0.4px 0.6px rgba(0,0,0,0.6)"></div><div style="position:absolute;left:12.40px;top:28.50px;width:6.20px;height:6.20px;border-radius:50%;background:#f0c8b0"></div><div style="position:absolute;left:13.60px;top:29.40px;width:3.80px;height:3.80px;border-radius:50%;background:#f8781c;box-shadow:0 0.4px 0.6px rgba(0,0,0,0.6)"></div><div style="position:absolute;left:12.40px;top:36.00px;width:6.20px;height:6.20px;border-radius:50%;background:#f0b8b0"></div><div style="position:absolute;left:13.60px;top:36.90px;width:3.80px;height:3.80px;border-radius:50%;background:#f02030;box-shadow:0 0.4px 0.6px rgba(0,0,0,0.6)"></div><div style="position:absolute;left:12.40px;top:43.90px;width:6.20px;height:6.20px;border-radius:50%;background:#ecb8a0"></div><div style="position:absolute;left:13.60px;top:44.80px;width:3.80px;height:3.80px;border-radius:50%;background:#383838;box-shadow:0 0.4px 0.6px rgba(0,0,0,0.6)"></div><div style="position:absolute;left:12.40px;top:52.00px;width:6.20px;height:6.20px;border-radius:50%;background:#ecb8a0"></div><div style="position:absolute;left:13.60px;top:52.90px;width:3.80px;height:3.80px;border-radius:50%;background:#383838;box-shadow:0 0.4px 0.6px rgba(0,0,0,0.6)"></div><div style="position:absolute;left:12.50px;top:58.80px;width:6.00px;height:2.60px;background:#fafafa;border-radius:1.3px;box-shadow:0 0 0 0.4px #999"></div><div style="position:absolute;left:12.30px;top:63.20px;width:6.40px;height:6.40px;border-radius:50%;background:#e8c4b0"></div><div style="position:absolute;left:13.40px;top:63.90px;width:4.20px;height:4.20px;border-radius:50%;background:#1aa8e8;box-shadow:0 0.4px 0.6px rgba(0,0,0,0.6)"></div><div style="position:absolute;left:13.90px;top:73.00px;width:1.00px;height:19.00px;background:#666"></div><div style="position:absolute;left:12.90px;top:72.50px;width:3.00px;height:4.50px;background:linear-gradient(#fff,#d8d8d8);box-shadow:0 0.5px 1px #555;border-radius:0.5px"></div><div style="position:absolute;left:16.70px;top:72.50px;width:1.30px;height:19.00px;background:#5e5e5e"></div><div style="position:absolute;left:18.50px;top:72.50px;width:1.30px;height:19.00px;background:#6a6a6a"></div><div style="position:absolute;left:12.10px;top:94.60px;width:2.80px;height:2.80px;border-radius:50%;background:#f4f4f4;box-shadow:0 0 0 0.6px #777"></div><div style="position:absolute;left:16.10px;top:94.60px;width:2.80px;height:2.80px;border-radius:50%;background:#f4f4f4;box-shadow:0 0 0 0.6px #777"></div><div style="position:absolute;left:12.50px;top:99.00px;width:6.00px;height:1.50px;background:#c4c4c4"></div><div style="position:absolute;left:29.70px;top:0.00px;width:0.60px;height:102.50px;background:#c4c4c4"></div><div style="position:absolute;left:24.70px;top:2.00px;width:0.80px;height:2.00px;background:#999"></div><div style="position:absolute;left:24.30px;top:-2.80px;width:1.60px;height:1.60px;border-radius:50%;background:#3a3a3a"></div><div style="position:absolute;left:22.50px;top:6.20px;width:5.20px;height:5.00px;background:linear-gradient(#fff,#c8c8c8);border-radius:2.5px 2.5px 1.5px 1.5px;box-shadow:0 0.6px 0.8px #777"></div><div style="position:absolute;left:22.00px;top:13.50px;width:6.20px;height:6.20px;border-radius:50%;background:#f0d0b0"></div><div style="position:absolute;left:23.20px;top:14.40px;width:3.80px;height:3.80px;border-radius:50%;background:#f4b018;box-shadow:0 0.4px 0.6px rgba(0,0,0,0.6)"></div><div style="position:absolute;left:22.00px;top:21.00px;width:6.20px;height:6.20px;border-radius:50%;background:#f0c8b0"></div><div style="position:absolute;left:23.20px;top:21.90px;width:3.80px;height:3.80px;border-radius:50%;background:#f8781c;box-shadow:0 0.4px 0.6px rgba(0,0,0,0.6)"></div><div style="position:absolute;left:22.00px;top:28.50px;width:6.20px;height:6.20px;border-radius:50%;background:#f0c8b0"></div><div style="position:absolute;left:23.20px;top:29.40px;width:3.80px;height:3.80px;border-radius:50%;background:#f8781c;box-shadow:0 0.4px 0.6px rgba(0,0,0,0.6)"></div><div style="position:absolute;left:22.00px;top:36.00px;width:6.20px;height:6.20px;border-radius:50%;background:#f0b8b0"></div><div style="position:absolute;left:23.20px;top:36.90px;width:3.80px;height:3.80px;border-radius:50%;background:#f02030;box-shadow:0 0.4px 0.6px rgba(0,0,0,0.6)"></div><div style="position:absolute;left:22.00px;top:43.90px;width:6.20px;height:6.20px;border-radius:50%;background:#ecb8a0"></div><div style="position:absolute;left:23.20px;top:44.80px;width:3.80px;height:3.80px;border-radius:50%;background:#383838;box-shadow:0 0.4px 0.6px rgba(0,0,0,0.6)"></div><div style="position:absolute;left:22.00px;top:52.00px;width:6.20px;height:6.20px;border-radius:50%;background:#ecb8a0"></div><div style="position:absolute;left:23.20px;top:52.90px;width:3.80px;height:3.80px;border-radius:50%;background:#383838;box-shadow:0 0.4px 0.6px rgba(0,0,0,0.6)"></div><div style="position:absolute;left:22.10px;top:58.80px;width:6.00px;height:2.60px;background:#fafafa;border-radius:1.3px;box-shadow:0 0 0 0.4px #999"></div><div style="position:absolute;left:21.90px;top:63.20px;width:6.40px;height:6.40px;border-radius:50%;background:#e8c4b0"></div><div style="position:absolute;left:23.00px;top:63.90px;width:4.20px;height:4.20px;border-radius:50%;background:#1aa8e8;box-shadow:0 0.4px 0.6px rgba(0,0,0,0.6)"></div><div style="position:absolute;left:23.50px;top:73.00px;width:1.00px;height:19.00px;background:#666"></div><div style="position:absolute;left:22.50px;top:72.50px;width:3.00px;height:4.50px;background:linear-gradient(#fff,#d8d8d8);box-shadow:0 0.5px 1px #555;border-radius:0.5px"></div><div style="position:absolute;left:26.30px;top:72.50px;width:1.30px;height:19.00px;background:#5e5e5e"></div><div style="position:absolute;left:28.10px;top:72.50px;width:1.30px;height:19.00px;background:#6a6a6a"></div><div style="position:absolute;left:21.70px;top:94.60px;width:2.80px;height:2.80px;border-radius:50%;background:#f4f4f4;box-shadow:0 0 0 0.6px #777"></div><div style="position:absolute;left:25.70px;top:94.60px;width:2.80px;height:2.80px;border-radius:50%;background:#f4f4f4;box-shadow:0 0 0 0.6px #777"></div><div style="position:absolute;left:22.10px;top:99.00px;width:6.00px;height:1.50px;background:#c4c4c4"></div><div style="position:absolute;left:39.30px;top:0.00px;width:0.60px;height:102.50px;background:#c4c4c4"></div><div style="position:absolute;left:34.30px;top:2.00px;width:0.80px;height:2.00px;background:#999"></div><div style="position:absolute;left:33.90px;top:-2.80px;width:1.60px;height:1.60px;border-radius:50%;background:#3a3a3a"></div><div style="position:absolute;left:32.10px;top:6.20px;width:5.20px;height:5.00px;background:linear-gradient(#fff,#c8c8c8);border-radius:2.5px 2.5px 1.5px 1.5px;box-shadow:0 0.6px 0.8px #777"></div><div style="position:absolute;left:31.60px;top:13.50px;width:6.20px;height:6.20px;border-radius:50%;background:#f0d0b0"></div><div style="position:absolute;left:32.80px;top:14.40px;width:3.80px;height:3.80px;border-radius:50%;background:#f4b018;box-shadow:0 0.4px 0.6px rgba(0,0,0,0.6)"></div><div style="position:absolute;left:31.60px;top:21.00px;width:6.20px;height:6.20px;border-radius:50%;background:#f0c8b0"></div><div style="position:absolute;left:32.80px;top:21.90px;width:3.80px;height:3.80px;border-radius:50%;background:#f8781c;box-shadow:0 0.4px 0.6px rgba(0,0,0,0.6)"></div><div style="position:absolute;left:31.60px;top:28.50px;width:6.20px;height:6.20px;border-radius:50%;background:#f0c8b0"></div><div style="position:absolute;left:32.80px;top:29.40px;width:3.80px;height:3.80px;border-radius:50%;background:#f8781c;box-shadow:0 0.4px 0.6px rgba(0,0,0,0.6)"></div><div style="position:absolute;left:31.60px;top:36.00px;width:6.20px;height:6.20px;border-radius:50%;background:#f0b8b0"></div><div style="position:absolute;left:32.80px;top:36.90px;width:3.80px;height:3.80px;border-radius:50%;background:#f02030;box-shadow:0 0.4px 0.6px rgba(0,0,0,0.6)"></div><div style="position:absolute;left:31.60px;top:43.90px;width:6.20px;height:6.20px;border-radius:50%;background:#ecb8a0"></div><div style="position:absolute;left:32.80px;top:44.80px;width:3.80px;height:3.80px;border-radius:50%;background:#383838;box-shadow:0 0.4px 0.6px rgba(0,0,0,0.6)"></div><div style="position:absolute;left:31.60px;top:52.00px;width:6.20px;height:6.20px;border-radius:50%;background:#ecb8a0"></div><div style="position:absolute;left:32.80px;top:52.90px;width:3.80px;height:3.80px;border-radius:50%;background:#383838;box-shadow:0 0.4px 0.6px rgba(0,0,0,0.6)"></div><div style="position:absolute;left:31.70px;top:58.80px;width:6.00px;height:2.60px;background:#fafafa;border-radius:1.3px;box-shadow:0 0 0 0.4px #999"></div><div style="position:absolute;left:31.50px;top:63.20px;width:6.40px;height:6.40px;border-radius:50%;background:#e8c4b0"></div><div style="position:absolute;left:32.60px;top:63.90px;width:4.20px;height:4.20px;border-radius:50%;background:#1aa8e8;box-shadow:0 0.4px 0.6px rgba(0,0,0,0.6)"></div><div style="position:absolute;left:33.10px;top:73.00px;width:1.00px;height:19.00px;background:#666"></div><div style="position:absolute;left:32.10px;top:72.50px;width:3.00px;height:4.50px;background:linear-gradient(#fff,#d8d8d8);box-shadow:0 0.5px 1px #555;border-radius:0.5px"></div><div style="position:absolute;left:35.90px;top:72.50px;width:1.30px;height:19.00px;background:#5e5e5e"></div><div style="position:absolute;left:37.70px;top:72.50px;width:1.30px;height:19.00px;background:#6a6a6a"></div><div style="position:absolute;left:31.30px;top:94.60px;width:2.80px;height:2.80px;border-radius:50%;background:#f4f4f4;box-shadow:0 0 0 0.6px #777"></div><div style="position:absolute;left:35.30px;top:94.60px;width:2.80px;height:2.80px;border-radius:50%;background:#f4f4f4;box-shadow:0 0 0 0.6px #777"></div><div style="position:absolute;left:31.70px;top:99.00px;width:6.00px;height:1.50px;background:#c4c4c4"></div><div style="position:absolute;left:48.90px;top:0.00px;width:0.60px;height:102.50px;background:#c4c4c4"></div><div style="position:absolute;left:43.90px;top:2.00px;width:0.80px;height:2.00px;background:#999"></div><div style="position:absolute;left:43.50px;top:-2.80px;width:1.60px;height:1.60px;border-radius:50%;background:#3a3a3a"></div><div style="position:absolute;left:41.70px;top:6.20px;width:5.20px;height:5.00px;background:linear-gradient(#fff,#c8c8c8);border-radius:2.5px 2.5px 1.5px 1.5px;box-shadow:0 0.6px 0.8px #777"></div><div style="position:absolute;left:41.20px;top:13.50px;width:6.20px;height:6.20px;border-radius:50%;background:#f0d0b0"></div><div style="position:absolute;left:42.40px;top:14.40px;width:3.80px;height:3.80px;border-radius:50%;background:#f4b018;box-shadow:0 0.4px 0.6px rgba(0,0,0,0.6)"></div><div style="position:absolute;left:41.20px;top:21.00px;width:6.20px;height:6.20px;border-radius:50%;background:#f0c8b0"></div><div style="position:absolute;left:42.40px;top:21.90px;width:3.80px;height:3.80px;border-radius:50%;background:#f8781c;box-shadow:0 0.4px 0.6px rgba(0,0,0,0.6)"></div><div style="position:absolute;left:41.20px;top:28.50px;width:6.20px;height:6.20px;border-radius:50%;background:#f0c8b0"></div><div style="position:absolute;left:42.40px;top:29.40px;width:3.80px;height:3.80px;border-radius:50%;background:#f8781c;box-shadow:0 0.4px 0.6px rgba(0,0,0,0.6)"></div><div style="position:absolute;left:41.20px;top:36.00px;width:6.20px;height:6.20px;border-radius:50%;background:#f0b8b0"></div><div style="position:absolute;left:42.40px;top:36.90px;width:3.80px;height:3.80px;border-radius:50%;background:#f02030;box-shadow:0 0.4px 0.6px rgba(0,0,0,0.6)"></div><div style="position:absolute;left:41.20px;top:43.90px;width:6.20px;height:6.20px;border-radius:50%;background:#ecb8a0"></div><div style="position:absolute;left:42.40px;top:44.80px;width:3.80px;height:3.80px;border-radius:50%;background:#383838;box-shadow:0 0.4px 0.6px rgba(0,0,0,0.6)"></div><div style="position:absolute;left:41.20px;top:52.00px;width:6.20px;height:6.20px;border-radius:50%;background:#ecb8a0"></div><div style="position:absolute;left:42.40px;top:52.90px;width:3.80px;height:3.80px;border-radius:50%;background:#383838;box-shadow:0 0.4px 0.6px rgba(0,0,0,0.6)"></div><div style="position:absolute;left:41.30px;top:58.80px;width:6.00px;height:2.60px;background:#fafafa;border-radius:1.3px;box-shadow:0 0 0 0.4px #999"></div><div style="position:absolute;left:41.10px;top:63.20px;width:6.40px;height:6.40px;border-radius:50%;background:#e8c4b0"></div><div style="position:absolute;left:42.20px;top:63.90px;width:4.20px;height:4.20px;border-radius:50%;background:#1aa8e8;box-shadow:0 0.4px 0.6px rgba(0,0,0,0.6)"></div><div style="position:absolute;left:42.70px;top:73.00px;width:1.00px;height:19.00px;background:#666"></div><div style="position:absolute;left:41.70px;top:72.50px;width:3.00px;height:4.50px;background:linear-gradient(#fff,#d8d8d8);box-shadow:0 0.5px 1px #555;border-radius:0.5px"></div><div style="position:absolute;left:45.50px;top:72.50px;width:1.30px;height:19.00px;background:#5e5e5e"></div><div style="position:absolute;left:47.30px;top:72.50px;width:1.30px;height:19.00px;background:#6a6a6a"></div><div style="position:absolute;left:40.90px;top:94.60px;width:2.80px;height:2.80px;border-radius:50%;background:#f4f4f4;box-shadow:0 0 0 0.6px #777"></div><div style="position:absolute;left:44.90px;top:94.60px;width:2.80px;height:2.80px;border-radius:50%;background:#f4f4f4;box-shadow:0 0 0 0.6px #777"></div><div style="position:absolute;left:41.30px;top:99.00px;width:6.00px;height:1.50px;background:#c4c4c4"></div><div style="position:absolute;left:58.50px;top:0.00px;width:0.60px;height:102.50px;background:#c4c4c4"></div><div style="position:absolute;left:53.50px;top:2.00px;width:0.80px;height:2.00px;background:#999"></div><div style="position:absolute;left:53.10px;top:-2.80px;width:1.60px;height:1.60px;border-radius:50%;background:#3a3a3a"></div><div style="position:absolute;left:51.30px;top:6.20px;width:5.20px;height:5.00px;background:linear-gradient(#fff,#c8c8c8);border-radius:2.5px 2.5px 1.5px 1.5px;box-shadow:0 0.6px 0.8px #777"></div><div style="position:absolute;left:50.80px;top:13.50px;width:6.20px;height:6.20px;border-radius:50%;background:#f0d0b0"></div><div style="position:absolute;left:52.00px;top:14.40px;width:3.80px;height:3.80px;border-radius:50%;background:#f4b018;box-shadow:0 0.4px 0.6px rgba(0,0,0,0.6)"></div><div style="position:absolute;left:50.80px;top:21.00px;width:6.20px;height:6.20px;border-radius:50%;background:#f0c8b0"></div><div style="position:absolute;left:52.00px;top:21.90px;width:3.80px;height:3.80px;border-radius:50%;background:#f8781c;box-shadow:0 0.4px 0.6px rgba(0,0,0,0.6)"></div><div style="position:absolute;left:50.80px;top:28.50px;width:6.20px;height:6.20px;border-radius:50%;background:#f0c8b0"></div><div style="position:absolute;left:52.00px;top:29.40px;width:3.80px;height:3.80px;border-radius:50%;background:#f8781c;box-shadow:0 0.4px 0.6px rgba(0,0,0,0.6)"></div><div style="position:absolute;left:50.80px;top:36.00px;width:6.20px;height:6.20px;border-radius:50%;background:#f0b8b0"></div><div style="position:absolute;left:52.00px;top:36.90px;width:3.80px;height:3.80px;border-radius:50%;background:#f02030;box-shadow:0 0.4px 0.6px rgba(0,0,0,0.6)"></div><div style="position:absolute;left:50.80px;top:43.90px;width:6.20px;height:6.20px;border-radius:50%;background:#ecb8a0"></div><div style="position:absolute;left:52.00px;top:44.80px;width:3.80px;height:3.80px;border-radius:50%;background:#383838;box-shadow:0 0.4px 0.6px rgba(0,0,0,0.6)"></div><div style="position:absolute;left:50.80px;top:52.00px;width:6.20px;height:6.20px;border-radius:50%;background:#ecb8a0"></div><div style="position:absolute;left:52.00px;top:52.90px;width:3.80px;height:3.80px;border-radius:50%;background:#383838;box-shadow:0 0.4px 0.6px rgba(0,0,0,0.6)"></div><div style="position:absolute;left:50.90px;top:58.80px;width:6.00px;height:2.60px;background:#fafafa;border-radius:1.3px;box-shadow:0 0 0 0.4px #999"></div><div style="position:absolute;left:50.70px;top:63.20px;width:6.40px;height:6.40px;border-radius:50%;background:#e8c4b0"></div><div style="position:absolute;left:51.80px;top:63.90px;width:4.20px;height:4.20px;border-radius:50%;background:#1aa8e8;box-shadow:0 0.4px 0.6px rgba(0,0,0,0.6)"></div><div style="position:absolute;left:52.30px;top:73.00px;width:1.00px;height:19.00px;background:#666"></div><div style="position:absolute;left:51.30px;top:72.50px;width:3.00px;height:4.50px;background:linear-gradient(#fff,#d8d8d8);box-shadow:0 0.5px 1px #555;border-radius:0.5px"></div><div style="position:absolute;left:55.10px;top:72.50px;width:1.30px;height:19.00px;background:#5e5e5e"></div><div style="position:absolute;left:56.90px;top:72.50px;width:1.30px;height:19.00px;background:#6a6a6a"></div><div style="position:absolute;left:50.50px;top:94.60px;width:2.80px;height:2.80px;border-radius:50%;background:#f4f4f4;box-shadow:0 0 0 0.6px #777"></div><div style="position:absolute;left:54.50px;top:94.60px;width:2.80px;height:2.80px;border-radius:50%;background:#f4f4f4;box-shadow:0 0 0 0.6px #777"></div><div style="position:absolute;left:50.90px;top:99.00px;width:6.00px;height:1.50px;background:#c4c4c4"></div><div style="position:absolute;left:68.10px;top:0.00px;width:0.60px;height:102.50px;background:#c4c4c4"></div><div style="position:absolute;left:63.10px;top:2.00px;width:0.80px;height:2.00px;background:#999"></div><div style="position:absolute;left:62.70px;top:-2.80px;width:1.60px;height:1.60px;border-radius:50%;background:#3a3a3a"></div><div style="position:absolute;left:60.90px;top:6.20px;width:5.20px;height:5.00px;background:linear-gradient(#fff,#c8c8c8);border-radius:2.5px 2.5px 1.5px 1.5px;box-shadow:0 0.6px 0.8px #777"></div><div style="position:absolute;left:60.40px;top:13.50px;width:6.20px;height:6.20px;border-radius:50%;background:#f0d0b0"></div><div style="position:absolute;left:61.60px;top:14.40px;width:3.80px;height:3.80px;border-radius:50%;background:#f4b018;box-shadow:0 0.4px 0.6px rgba(0,0,0,0.6)"></div><div style="position:absolute;left:60.40px;top:21.00px;width:6.20px;height:6.20px;border-radius:50%;background:#f0c8b0"></div><div style="position:absolute;left:61.60px;top:21.90px;width:3.80px;height:3.80px;border-radius:50%;background:#f8781c;box-shadow:0 0.4px 0.6px rgba(0,0,0,0.6)"></div><div style="position:absolute;left:60.40px;top:28.50px;width:6.20px;height:6.20px;border-radius:50%;background:#f0c8b0"></div><div style="position:absolute;left:61.60px;top:29.40px;width:3.80px;height:3.80px;border-radius:50%;background:#f8781c;box-shadow:0 0.4px 0.6px rgba(0,0,0,0.6)"></div><div style="position:absolute;left:60.40px;top:36.00px;width:6.20px;height:6.20px;border-radius:50%;background:#f0b8b0"></div><div style="position:absolute;left:61.60px;top:36.90px;width:3.80px;height:3.80px;border-radius:50%;background:#f02030;box-shadow:0 0.4px 0.6px rgba(0,0,0,0.6)"></div><div style="position:absolute;left:60.40px;top:43.90px;width:6.20px;height:6.20px;border-radius:50%;background:#ecb8a0"></div><div style="position:absolute;left:61.60px;top:44.80px;width:3.80px;height:3.80px;border-radius:50%;background:#383838;box-shadow:0 0.4px 0.6px rgba(0,0,0,0.6)"></div><div style="position:absolute;left:60.40px;top:52.00px;width:6.20px;height:6.20px;border-radius:50%;background:#ecb8a0"></div><div style="position:absolute;left:61.60px;top:52.90px;width:3.80px;height:3.80px;border-radius:50%;background:#383838;box-shadow:0 0.4px 0.6px rgba(0,0,0,0.6)"></div><div style="position:absolute;left:60.50px;top:58.80px;width:6.00px;height:2.60px;background:#fafafa;border-radius:1.3px;box-shadow:0 0 0 0.4px #999"></div><div style="position:absolute;left:60.30px;top:63.20px;width:6.40px;height:6.40px;border-radius:50%;background:#e8c4b0"></div><div style="position:absolute;left:61.40px;top:63.90px;width:4.20px;height:4.20px;border-radius:50%;background:#1aa8e8;box-shadow:0 0.4px 0.6px rgba(0,0,0,0.6)"></div><div style="position:absolute;left:61.90px;top:73.00px;width:1.00px;height:19.00px;background:#666"></div><div style="position:absolute;left:60.90px;top:72.50px;width:3.00px;height:4.50px;background:linear-gradient(#fff,#d8d8d8);box-shadow:0 0.5px 1px #555;border-radius:0.5px"></div><div style="position:absolute;left:64.70px;top:72.50px;width:1.30px;height:19.00px;background:#5e5e5e"></div><div style="position:absolute;left:66.50px;top:72.50px;width:1.30px;height:19.00px;background:#6a6a6a"></div><div style="position:absolute;left:60.10px;top:94.60px;width:2.80px;height:2.80px;border-radius:50%;background:#f4f4f4;box-shadow:0 0 0 0.6px #777"></div><div style="position:absolute;left:64.10px;top:94.60px;width:2.80px;height:2.80px;border-radius:50%;background:#f4f4f4;box-shadow:0 0 0 0.6px #777"></div><div style="position:absolute;left:60.50px;top:99.00px;width:6.00px;height:1.50px;background:#c4c4c4"></div><div style="position:absolute;left:77.70px;top:0.00px;width:0.60px;height:102.50px;background:#c4c4c4"></div><div style="position:absolute;left:72.70px;top:2.00px;width:0.80px;height:2.00px;background:#999"></div><div style="position:absolute;left:72.30px;top:-2.80px;width:1.60px;height:1.60px;border-radius:50%;background:#3a3a3a"></div><div style="position:absolute;left:70.50px;top:6.20px;width:5.20px;height:5.00px;background:linear-gradient(#fff,#c8c8c8);border-radius:2.5px 2.5px 1.5px 1.5px;box-shadow:0 0.6px 0.8px #777"></div><div style="position:absolute;left:70.00px;top:13.50px;width:6.20px;height:6.20px;border-radius:50%;background:#f0d0b0"></div><div style="position:absolute;left:71.20px;top:14.40px;width:3.80px;height:3.80px;border-radius:50%;background:#f4b018;box-shadow:0 0.4px 0.6px rgba(0,0,0,0.6)"></div><div style="position:absolute;left:70.00px;top:21.00px;width:6.20px;height:6.20px;border-radius:50%;background:#f0c8b0"></div><div style="position:absolute;left:71.20px;top:21.90px;width:3.80px;height:3.80px;border-radius:50%;background:#f8781c;box-shadow:0 0.4px 0.6px rgba(0,0,0,0.6)"></div><div style="position:absolute;left:70.00px;top:28.50px;width:6.20px;height:6.20px;border-radius:50%;background:#f0c8b0"></div><div style="position:absolute;left:71.20px;top:29.40px;width:3.80px;height:3.80px;border-radius:50%;background:#f8781c;box-shadow:0 0.4px 0.6px rgba(0,0,0,0.6)"></div><div style="position:absolute;left:70.00px;top:36.00px;width:6.20px;height:6.20px;border-radius:50%;background:#f0b8b0"></div><div style="position:absolute;left:71.20px;top:36.90px;width:3.80px;height:3.80px;border-radius:50%;background:#f02030;box-shadow:0 0.4px 0.6px rgba(0,0,0,0.6)"></div><div style="position:absolute;left:70.00px;top:43.90px;width:6.20px;height:6.20px;border-radius:50%;background:#ecb8a0"></div><div style="position:absolute;left:71.20px;top:44.80px;width:3.80px;height:3.80px;border-radius:50%;background:#383838;box-shadow:0 0.4px 0.6px rgba(0,0,0,0.6)"></div><div style="position:absolute;left:70.00px;top:52.00px;width:6.20px;height:6.20px;border-radius:50%;background:#ecb8a0"></div><div style="position:absolute;left:71.20px;top:52.90px;width:3.80px;height:3.80px;border-radius:50%;background:#383838;box-shadow:0 0.4px 0.6px rgba(0,0,0,0.6)"></div><div style="position:absolute;left:70.10px;top:58.80px;width:6.00px;height:2.60px;background:#fafafa;border-radius:1.3px;box-shadow:0 0 0 0.4px #999"></div><div style="position:absolute;left:69.90px;top:63.20px;width:6.40px;height:6.40px;border-radius:50%;background:#e8c4b0"></div><div style="position:absolute;left:71.00px;top:63.90px;width:4.20px;height:4.20px;border-radius:50%;background:#1aa8e8;box-shadow:0 0.4px 0.6px rgba(0,0,0,0.6)"></div><div style="position:absolute;left:71.50px;top:73.00px;width:1.00px;height:19.00px;background:#666"></div><div style="position:absolute;left:70.50px;top:72.50px;width:3.00px;height:4.50px;background:linear-gradient(#fff,#d8d8d8);box-shadow:0 0.5px 1px #555;border-radius:0.5px"></div><div style="position:absolute;left:74.30px;top:72.50px;width:1.30px;height:19.00px;background:#5e5e5e"></div><div style="position:absolute;left:76.10px;top:72.50px;width:1.30px;height:19.00px;background:#6a6a6a"></div><div style="position:absolute;left:69.70px;top:94.60px;width:2.80px;height:2.80px;border-radius:50%;background:#f4f4f4;box-shadow:0 0 0 0.6px #777"></div><div style="position:absolute;left:73.70px;top:94.60px;width:2.80px;height:2.80px;border-radius:50%;background:#f4f4f4;box-shadow:0 0 0 0.6px #777"></div><div style="position:absolute;left:70.10px;top:99.00px;width:6.00px;height:1.50px;background:#c4c4c4"></div><div style="position:absolute;left:87.30px;top:0.00px;width:0.60px;height:102.50px;background:#c4c4c4"></div><div style="position:absolute;left:82.30px;top:2.00px;width:0.80px;height:2.00px;background:#999"></div><div style="position:absolute;left:81.90px;top:-2.80px;width:1.60px;height:1.60px;border-radius:50%;background:#3a3a3a"></div><div style="position:absolute;left:80.10px;top:6.20px;width:5.20px;height:5.00px;background:linear-gradient(#fff,#c8c8c8);border-radius:2.5px 2.5px 1.5px 1.5px;box-shadow:0 0.6px 0.8px #777"></div><div style="position:absolute;left:79.60px;top:13.50px;width:6.20px;height:6.20px;border-radius:50%;background:#f0d0b0"></div><div style="position:absolute;left:80.80px;top:14.40px;width:3.80px;height:3.80px;border-radius:50%;background:#f4b018;box-shadow:0 0.4px 0.6px rgba(0,0,0,0.6)"></div><div style="position:absolute;left:79.60px;top:21.00px;width:6.20px;height:6.20px;border-radius:50%;background:#f0c8b0"></div><div style="position:absolute;left:80.80px;top:21.90px;width:3.80px;height:3.80px;border-radius:50%;background:#f8781c;box-shadow:0 0.4px 0.6px rgba(0,0,0,0.6)"></div><div style="position:absolute;left:79.60px;top:28.50px;width:6.20px;height:6.20px;border-radius:50%;background:#f0c8b0"></div><div style="position:absolute;left:80.80px;top:29.40px;width:3.80px;height:3.80px;border-radius:50%;background:#f8781c;box-shadow:0 0.4px 0.6px rgba(0,0,0,0.6)"></div><div style="position:absolute;left:79.60px;top:36.00px;width:6.20px;height:6.20px;border-radius:50%;background:#f0b8b0"></div><div style="position:absolute;left:80.80px;top:36.90px;width:3.80px;height:3.80px;border-radius:50%;background:#f02030;box-shadow:0 0.4px 0.6px rgba(0,0,0,0.6)"></div><div style="position:absolute;left:79.60px;top:43.90px;width:6.20px;height:6.20px;border-radius:50%;background:#ecb8a0"></div><div style="position:absolute;left:80.80px;top:44.80px;width:3.80px;height:3.80px;border-radius:50%;background:#383838;box-shadow:0 0.4px 0.6px rgba(0,0,0,0.6)"></div><div style="position:absolute;left:79.60px;top:52.00px;width:6.20px;height:6.20px;border-radius:50%;background:#ecb8a0"></div><div style="position:absolute;left:80.80px;top:52.90px;width:3.80px;height:3.80px;border-radius:50%;background:#383838;box-shadow:0 0.4px 0.6px rgba(0,0,0,0.6)"></div><div style="position:absolute;left:79.70px;top:58.80px;width:6.00px;height:2.60px;background:#fafafa;border-radius:1.3px;box-shadow:0 0 0 0.4px #999"></div><div style="position:absolute;left:79.50px;top:63.20px;width:6.40px;height:6.40px;border-radius:50%;background:#e8c4b0"></div><div style="position:absolute;left:80.60px;top:63.90px;width:4.20px;height:4.20px;border-radius:50%;background:#1aa8e8;box-shadow:0 0.4px 0.6px rgba(0,0,0,0.6)"></div><div style="position:absolute;left:81.10px;top:73.00px;width:1.00px;height:19.00px;background:#666"></div><div style="position:absolute;left:80.10px;top:72.50px;width:3.00px;height:4.50px;background:linear-gradient(#fff,#d8d8d8);box-shadow:0 0.5px 1px #555;border-radius:0.5px"></div><div style="position:absolute;left:83.90px;top:72.50px;width:1.30px;height:19.00px;background:#5e5e5e"></div><div style="position:absolute;left:85.70px;top:72.50px;width:1.30px;height:19.00px;background:#6a6a6a"></div><div style="position:absolute;left:79.30px;top:94.60px;width:2.80px;height:2.80px;border-radius:50%;background:#f4f4f4;box-shadow:0 0 0 0.6px #777"></div><div style="position:absolute;left:83.30px;top:94.60px;width:2.80px;height:2.80px;border-radius:50%;background:#f4f4f4;box-shadow:0 0 0 0.6px #777"></div><div style="position:absolute;left:79.70px;top:99.00px;width:6.00px;height:1.50px;background:#c4c4c4"></div><div style="position:absolute;left:96.90px;top:0.00px;width:0.60px;height:102.50px;background:#c4c4c4"></div><div style="position:absolute;left:91.90px;top:2.00px;width:0.80px;height:2.00px;background:#999"></div><div style="position:absolute;left:91.50px;top:-2.80px;width:1.60px;height:1.60px;border-radius:50%;background:#3a3a3a"></div><div style="position:absolute;left:89.70px;top:6.20px;width:5.20px;height:5.00px;background:linear-gradient(#fff,#c8c8c8);border-radius:2.5px 2.5px 1.5px 1.5px;box-shadow:0 0.6px 0.8px #777"></div><div style="position:absolute;left:89.20px;top:13.50px;width:6.20px;height:6.20px;border-radius:50%;background:#f0d0b0"></div><div style="position:absolute;left:90.40px;top:14.40px;width:3.80px;height:3.80px;border-radius:50%;background:#f4b018;box-shadow:0 0.4px 0.6px rgba(0,0,0,0.6)"></div><div style="position:absolute;left:89.20px;top:21.00px;width:6.20px;height:6.20px;border-radius:50%;background:#f0c8b0"></div><div style="position:absolute;left:90.40px;top:21.90px;width:3.80px;height:3.80px;border-radius:50%;background:#f8781c;box-shadow:0 0.4px 0.6px rgba(0,0,0,0.6)"></div><div style="position:absolute;left:89.20px;top:28.50px;width:6.20px;height:6.20px;border-radius:50%;background:#f0c8b0"></div><div style="position:absolute;left:90.40px;top:29.40px;width:3.80px;height:3.80px;border-radius:50%;background:#f8781c;box-shadow:0 0.4px 0.6px rgba(0,0,0,0.6)"></div><div style="position:absolute;left:89.20px;top:36.00px;width:6.20px;height:6.20px;border-radius:50%;background:#f0b8b0"></div><div style="position:absolute;left:90.40px;top:36.90px;width:3.80px;height:3.80px;border-radius:50%;background:#f02030;box-shadow:0 0.4px 0.6px rgba(0,0,0,0.6)"></div><div style="position:absolute;left:89.20px;top:43.90px;width:6.20px;height:6.20px;border-radius:50%;background:#ecb8a0"></div><div style="position:absolute;left:90.40px;top:44.80px;width:3.80px;height:3.80px;border-radius:50%;background:#383838;box-shadow:0 0.4px 0.6px rgba(0,0,0,0.6)"></div><div style="position:absolute;left:89.20px;top:52.00px;width:6.20px;height:6.20px;border-radius:50%;background:#ecb8a0"></div><div style="position:absolute;left:90.40px;top:52.90px;width:3.80px;height:3.80px;border-radius:50%;background:#383838;box-shadow:0 0.4px 0.6px rgba(0,0,0,0.6)"></div><div style="position:absolute;left:89.30px;top:58.80px;width:6.00px;height:2.60px;background:#fafafa;border-radius:1.3px;box-shadow:0 0 0 0.4px #999"></div><div style="position:absolute;left:89.10px;top:63.20px;width:6.40px;height:6.40px;border-radius:50%;background:#e8c4b0"></div><div style="position:absolute;left:90.20px;top:63.90px;width:4.20px;height:4.20px;border-radius:50%;background:#1aa8e8;box-shadow:0 0.4px 0.6px rgba(0,0,0,0.6)"></div><div style="position:absolute;left:90.70px;top:73.00px;width:1.00px;height:19.00px;background:#666"></div><div style="position:absolute;left:89.70px;top:72.50px;width:3.00px;height:4.50px;background:linear-gradient(#fff,#d8d8d8);box-shadow:0 0.5px 1px #555;border-radius:0.5px"></div><div style="position:absolute;left:93.50px;top:72.50px;width:1.30px;height:19.00px;background:#5e5e5e"></div><div style="position:absolute;left:95.30px;top:72.50px;width:1.30px;height:19.00px;background:#6a6a6a"></div><div style="position:absolute;left:88.90px;top:94.60px;width:2.80px;height:2.80px;border-radius:50%;background:#f4f4f4;box-shadow:0 0 0 0.6px #777"></div><div style="position:absolute;left:92.90px;top:94.60px;width:2.80px;height:2.80px;border-radius:50%;background:#f4f4f4;box-shadow:0 0 0 0.6px #777"></div><div style="position:absolute;left:89.30px;top:99.00px;width:6.00px;height:1.50px;background:#c4c4c4"></div><div style="position:absolute;left:106.50px;top:0.00px;width:0.60px;height:102.50px;background:#c4c4c4"></div><div style="position:absolute;left:101.50px;top:2.00px;width:0.80px;height:2.00px;background:#999"></div><div style="position:absolute;left:101.10px;top:-2.80px;width:1.60px;height:1.60px;border-radius:50%;background:#3a3a3a"></div><div style="position:absolute;left:99.30px;top:6.20px;width:5.20px;height:5.00px;background:linear-gradient(#fff,#c8c8c8);border-radius:2.5px 2.5px 1.5px 1.5px;box-shadow:0 0.6px 0.8px #777"></div><div style="position:absolute;left:98.80px;top:13.50px;width:6.20px;height:6.20px;border-radius:50%;background:#f0d0b0"></div><div style="position:absolute;left:100.00px;top:14.40px;width:3.80px;height:3.80px;border-radius:50%;background:#f4b018;box-shadow:0 0.4px 0.6px rgba(0,0,0,0.6)"></div><div style="position:absolute;left:98.80px;top:21.00px;width:6.20px;height:6.20px;border-radius:50%;background:#f0c8b0"></div><div style="position:absolute;left:100.00px;top:21.90px;width:3.80px;height:3.80px;border-radius:50%;background:#f8781c;box-shadow:0 0.4px 0.6px rgba(0,0,0,0.6)"></div><div style="position:absolute;left:98.80px;top:28.50px;width:6.20px;height:6.20px;border-radius:50%;background:#f0c8b0"></div><div style="position:absolute;left:100.00px;top:29.40px;width:3.80px;height:3.80px;border-radius:50%;background:#f8781c;box-shadow:0 0.4px 0.6px rgba(0,0,0,0.6)"></div><div style="position:absolute;left:98.80px;top:36.00px;width:6.20px;height:6.20px;border-radius:50%;background:#f0b8b0"></div><div style="position:absolute;left:100.00px;top:36.90px;width:3.80px;height:3.80px;border-radius:50%;background:#f02030;box-shadow:0 0.4px 0.6px rgba(0,0,0,0.6)"></div><div style="position:absolute;left:98.80px;top:43.90px;width:6.20px;height:6.20px;border-radius:50%;background:#ecb8a0"></div><div style="position:absolute;left:100.00px;top:44.80px;width:3.80px;height:3.80px;border-radius:50%;background:#383838;box-shadow:0 0.4px 0.6px rgba(0,0,0,0.6)"></div><div style="position:absolute;left:98.80px;top:52.00px;width:6.20px;height:6.20px;border-radius:50%;background:#ecb8a0"></div><div style="position:absolute;left:100.00px;top:52.90px;width:3.80px;height:3.80px;border-radius:50%;background:#383838;box-shadow:0 0.4px 0.6px rgba(0,0,0,0.6)"></div><div style="position:absolute;left:98.90px;top:58.80px;width:6.00px;height:2.60px;background:#fafafa;border-radius:1.3px;box-shadow:0 0 0 0.4px #999"></div><div style="position:absolute;left:98.70px;top:63.20px;width:6.40px;height:6.40px;border-radius:50%;background:#e8c4b0"></div><div style="position:absolute;left:99.80px;top:63.90px;width:4.20px;height:4.20px;border-radius:50%;background:#1aa8e8;box-shadow:0 0.4px 0.6px rgba(0,0,0,0.6)"></div><div style="position:absolute;left:100.30px;top:73.00px;width:1.00px;height:19.00px;background:#666"></div><div style="position:absolute;left:99.30px;top:72.50px;width:3.00px;height:4.50px;background:linear-gradient(#fff,#d8d8d8);box-shadow:0 0.5px 1px #555;border-radius:0.5px"></div><div style="position:absolute;left:103.10px;top:72.50px;width:1.30px;height:19.00px;background:#5e5e5e"></div><div style="position:absolute;left:104.90px;top:72.50px;width:1.30px;height:19.00px;background:#6a6a6a"></div><div style="position:absolute;left:98.50px;top:94.60px;width:2.80px;height:2.80px;border-radius:50%;background:#f4f4f4;box-shadow:0 0 0 0.6px #777"></div><div style="position:absolute;left:102.50px;top:94.60px;width:2.80px;height:2.80px;border-radius:50%;background:#f4f4f4;box-shadow:0 0 0 0.6px #777"></div><div style="position:absolute;left:98.90px;top:99.00px;width:6.00px;height:1.50px;background:#c4c4c4"></div><div style="position:absolute;left:116.10px;top:0.00px;width:0.60px;height:102.50px;background:#c4c4c4"></div><div style="position:absolute;left:111.10px;top:2.00px;width:0.80px;height:2.00px;background:#999"></div><div style="position:absolute;left:110.70px;top:-2.80px;width:1.60px;height:1.60px;border-radius:50%;background:#3a3a3a"></div><div style="position:absolute;left:108.90px;top:6.20px;width:5.20px;height:5.00px;background:linear-gradient(#fff,#c8c8c8);border-radius:2.5px 2.5px 1.5px 1.5px;box-shadow:0 0.6px 0.8px #777"></div><div style="position:absolute;left:108.40px;top:13.50px;width:6.20px;height:6.20px;border-radius:50%;background:#f0d0b0"></div><div style="position:absolute;left:109.60px;top:14.40px;width:3.80px;height:3.80px;border-radius:50%;background:#f4b018;box-shadow:0 0.4px 0.6px rgba(0,0,0,0.6)"></div><div style="position:absolute;left:108.40px;top:21.00px;width:6.20px;height:6.20px;border-radius:50%;background:#f0c8b0"></div><div style="position:absolute;left:109.60px;top:21.90px;width:3.80px;height:3.80px;border-radius:50%;background:#f8781c;box-shadow:0 0.4px 0.6px rgba(0,0,0,0.6)"></div><div style="position:absolute;left:108.40px;top:28.50px;width:6.20px;height:6.20px;border-radius:50%;background:#f0c8b0"></div><div style="position:absolute;left:109.60px;top:29.40px;width:3.80px;height:3.80px;border-radius:50%;background:#f8781c;box-shadow:0 0.4px 0.6px rgba(0,0,0,0.6)"></div><div style="position:absolute;left:108.40px;top:36.00px;width:6.20px;height:6.20px;border-radius:50%;background:#f0b8b0"></div><div style="position:absolute;left:109.60px;top:36.90px;width:3.80px;height:3.80px;border-radius:50%;background:#f02030;box-shadow:0 0.4px 0.6px rgba(0,0,0,0.6)"></div><div style="position:absolute;left:108.40px;top:43.90px;width:6.20px;height:6.20px;border-radius:50%;background:#ecb8a0"></div><div style="position:absolute;left:109.60px;top:44.80px;width:3.80px;height:3.80px;border-radius:50%;background:#383838;box-shadow:0 0.4px 0.6px rgba(0,0,0,0.6)"></div><div style="position:absolute;left:108.40px;top:52.00px;width:6.20px;height:6.20px;border-radius:50%;background:#ecb8a0"></div><div style="position:absolute;left:109.60px;top:52.90px;width:3.80px;height:3.80px;border-radius:50%;background:#383838;box-shadow:0 0.4px 0.6px rgba(0,0,0,0.6)"></div><div style="position:absolute;left:108.50px;top:58.80px;width:6.00px;height:2.60px;background:#fafafa;border-radius:1.3px;box-shadow:0 0 0 0.4px #999"></div><div style="position:absolute;left:108.30px;top:63.20px;width:6.40px;height:6.40px;border-radius:50%;background:#e8c4b0"></div><div style="position:absolute;left:109.40px;top:63.90px;width:4.20px;height:4.20px;border-radius:50%;background:#1aa8e8;box-shadow:0 0.4px 0.6px rgba(0,0,0,0.6)"></div><div style="position:absolute;left:109.90px;top:73.00px;width:1.00px;height:19.00px;background:#666"></div><div style="position:absolute;left:108.90px;top:72.50px;width:3.00px;height:4.50px;background:linear-gradient(#fff,#d8d8d8);box-shadow:0 0.5px 1px #555;border-radius:0.5px"></div><div style="position:absolute;left:112.70px;top:72.50px;width:1.30px;height:19.00px;background:#5e5e5e"></div><div style="position:absolute;left:114.50px;top:72.50px;width:1.30px;height:19.00px;background:#6a6a6a"></div><div style="position:absolute;left:108.10px;top:94.60px;width:2.80px;height:2.80px;border-radius:50%;background:#f4f4f4;box-shadow:0 0 0 0.6px #777"></div><div style="position:absolute;left:112.10px;top:94.60px;width:2.80px;height:2.80px;border-radius:50%;background:#f4f4f4;box-shadow:0 0 0 0.6px #777"></div><div style="position:absolute;left:108.50px;top:99.00px;width:6.00px;height:1.50px;background:#c4c4c4"></div><div style="position:absolute;left:125.70px;top:0.00px;width:0.60px;height:102.50px;background:#c4c4c4"></div><div style="position:absolute;left:120.70px;top:2.00px;width:0.80px;height:2.00px;background:#999"></div><div style="position:absolute;left:120.30px;top:-2.80px;width:1.60px;height:1.60px;border-radius:50%;background:#3a3a3a"></div><div style="position:absolute;left:118.50px;top:6.20px;width:5.20px;height:5.00px;background:linear-gradient(#fff,#c8c8c8);border-radius:2.5px 2.5px 1.5px 1.5px;box-shadow:0 0.6px 0.8px #777"></div><div style="position:absolute;left:118.00px;top:13.50px;width:6.20px;height:6.20px;border-radius:50%;background:#f0d0b0"></div><div style="position:absolute;left:119.20px;top:14.40px;width:3.80px;height:3.80px;border-radius:50%;background:#f4b018;box-shadow:0 0.4px 0.6px rgba(0,0,0,0.6)"></div><div style="position:absolute;left:118.00px;top:21.00px;width:6.20px;height:6.20px;border-radius:50%;background:#f0c8b0"></div><div style="position:absolute;left:119.20px;top:21.90px;width:3.80px;height:3.80px;border-radius:50%;background:#f8781c;box-shadow:0 0.4px 0.6px rgba(0,0,0,0.6)"></div><div style="position:absolute;left:118.00px;top:28.50px;width:6.20px;height:6.20px;border-radius:50%;background:#f0c8b0"></div><div style="position:absolute;left:119.20px;top:29.40px;width:3.80px;height:3.80px;border-radius:50%;background:#f8781c;box-shadow:0 0.4px 0.6px rgba(0,0,0,0.6)"></div><div style="position:absolute;left:118.00px;top:36.00px;width:6.20px;height:6.20px;border-radius:50%;background:#f0b8b0"></div><div style="position:absolute;left:119.20px;top:36.90px;width:3.80px;height:3.80px;border-radius:50%;background:#f02030;box-shadow:0 0.4px 0.6px rgba(0,0,0,0.6)"></div><div style="position:absolute;left:118.00px;top:43.90px;width:6.20px;height:6.20px;border-radius:50%;background:#ecb8a0"></div><div style="position:absolute;left:119.20px;top:44.80px;width:3.80px;height:3.80px;border-radius:50%;background:#383838;box-shadow:0 0.4px 0.6px rgba(0,0,0,0.6)"></div><div style="position:absolute;left:118.00px;top:52.00px;width:6.20px;height:6.20px;border-radius:50%;background:#ecb8a0"></div><div style="position:absolute;left:119.20px;top:52.90px;width:3.80px;height:3.80px;border-radius:50%;background:#383838;box-shadow:0 0.4px 0.6px rgba(0,0,0,0.6)"></div><div style="position:absolute;left:118.10px;top:58.80px;width:6.00px;height:2.60px;background:#fafafa;border-radius:1.3px;box-shadow:0 0 0 0.4px #999"></div><div style="position:absolute;left:117.90px;top:63.20px;width:6.40px;height:6.40px;border-radius:50%;background:#e8c4b0"></div><div style="position:absolute;left:119.00px;top:63.90px;width:4.20px;height:4.20px;border-radius:50%;background:#1aa8e8;box-shadow:0 0.4px 0.6px rgba(0,0,0,0.6)"></div><div style="position:absolute;left:119.50px;top:73.00px;width:1.00px;height:19.00px;background:#666"></div><div style="position:absolute;left:118.50px;top:72.50px;width:3.00px;height:4.50px;background:linear-gradient(#fff,#d8d8d8);box-shadow:0 0.5px 1px #555;border-radius:0.5px"></div><div style="position:absolute;left:122.30px;top:72.50px;width:1.30px;height:19.00px;background:#5e5e5e"></div><div style="position:absolute;left:124.10px;top:72.50px;width:1.30px;height:19.00px;background:#6a6a6a"></div><div style="position:absolute;left:117.70px;top:94.60px;width:2.80px;height:2.80px;border-radius:50%;background:#f4f4f4;box-shadow:0 0 0 0.6px #777"></div><div style="position:absolute;left:121.70px;top:94.60px;width:2.80px;height:2.80px;border-radius:50%;background:#f4f4f4;box-shadow:0 0 0 0.6px #777"></div><div style="position:absolute;left:118.10px;top:99.00px;width:6.00px;height:1.50px;background:#c4c4c4"></div><div style="position:absolute;left:135.30px;top:0.00px;width:0.60px;height:102.50px;background:#c4c4c4"></div><div style="position:absolute;left:130.30px;top:2.00px;width:0.80px;height:2.00px;background:#999"></div><div style="position:absolute;left:129.90px;top:-2.80px;width:1.60px;height:1.60px;border-radius:50%;background:#3a3a3a"></div><div style="position:absolute;left:128.10px;top:6.20px;width:5.20px;height:5.00px;background:linear-gradient(#fff,#c8c8c8);border-radius:2.5px 2.5px 1.5px 1.5px;box-shadow:0 0.6px 0.8px #777"></div><div style="position:absolute;left:127.60px;top:13.50px;width:6.20px;height:6.20px;border-radius:50%;background:#f0d0b0"></div><div style="position:absolute;left:128.80px;top:14.40px;width:3.80px;height:3.80px;border-radius:50%;background:#f4b018;box-shadow:0 0.4px 0.6px rgba(0,0,0,0.6)"></div><div style="position:absolute;left:127.60px;top:21.00px;width:6.20px;height:6.20px;border-radius:50%;background:#f0c8b0"></div><div style="position:absolute;left:128.80px;top:21.90px;width:3.80px;height:3.80px;border-radius:50%;background:#f8781c;box-shadow:0 0.4px 0.6px rgba(0,0,0,0.6)"></div><div style="position:absolute;left:127.60px;top:28.50px;width:6.20px;height:6.20px;border-radius:50%;background:#f0c8b0"></div><div style="position:absolute;left:128.80px;top:29.40px;width:3.80px;height:3.80px;border-radius:50%;background:#f8781c;box-shadow:0 0.4px 0.6px rgba(0,0,0,0.6)"></div><div style="position:absolute;left:127.60px;top:36.00px;width:6.20px;height:6.20px;border-radius:50%;background:#f0b8b0"></div><div style="position:absolute;left:128.80px;top:36.90px;width:3.80px;height:3.80px;border-radius:50%;background:#f02030;box-shadow:0 0.4px 0.6px rgba(0,0,0,0.6)"></div><div style="position:absolute;left:127.60px;top:43.90px;width:6.20px;height:6.20px;border-radius:50%;background:#ecb8a0"></div><div style="position:absolute;left:128.80px;top:44.80px;width:3.80px;height:3.80px;border-radius:50%;background:#383838;box-shadow:0 0.4px 0.6px rgba(0,0,0,0.6)"></div><div style="position:absolute;left:127.60px;top:52.00px;width:6.20px;height:6.20px;border-radius:50%;background:#ecb8a0"></div><div style="position:absolute;left:128.80px;top:52.90px;width:3.80px;height:3.80px;border-radius:50%;background:#383838;box-shadow:0 0.4px 0.6px rgba(0,0,0,0.6)"></div><div style="position:absolute;left:127.70px;top:58.80px;width:6.00px;height:2.60px;background:#fafafa;border-radius:1.3px;box-shadow:0 0 0 0.4px #999"></div><div style="position:absolute;left:127.50px;top:63.20px;width:6.40px;height:6.40px;border-radius:50%;background:#e8c4b0"></div><div style="position:absolute;left:128.60px;top:63.90px;width:4.20px;height:4.20px;border-radius:50%;background:#1aa8e8;box-shadow:0 0.4px 0.6px rgba(0,0,0,0.6)"></div><div style="position:absolute;left:129.10px;top:73.00px;width:1.00px;height:19.00px;background:#666"></div><div style="position:absolute;left:128.10px;top:72.50px;width:3.00px;height:4.50px;background:linear-gradient(#fff,#d8d8d8);box-shadow:0 0.5px 1px #555;border-radius:0.5px"></div><div style="position:absolute;left:131.90px;top:72.50px;width:1.30px;height:19.00px;background:#5e5e5e"></div><div style="position:absolute;left:133.70px;top:72.50px;width:1.30px;height:19.00px;background:#6a6a6a"></div><div style="position:absolute;left:127.30px;top:94.60px;width:2.80px;height:2.80px;border-radius:50%;background:#f4f4f4;box-shadow:0 0 0 0.6px #777"></div><div style="position:absolute;left:131.30px;top:94.60px;width:2.80px;height:2.80px;border-radius:50%;background:#f4f4f4;box-shadow:0 0 0 0.6px #777"></div><div style="position:absolute;left:127.70px;top:99.00px;width:6.00px;height:1.50px;background:#c4c4c4"></div><div style="position:absolute;left:144.90px;top:0.00px;width:0.60px;height:102.50px;background:#c4c4c4"></div><div style="position:absolute;left:139.90px;top:2.00px;width:0.80px;height:2.00px;background:#999"></div><div style="position:absolute;left:139.50px;top:-2.80px;width:1.60px;height:1.60px;border-radius:50%;background:#3a3a3a"></div><div style="position:absolute;left:137.70px;top:6.20px;width:5.20px;height:5.00px;background:linear-gradient(#fff,#c8c8c8);border-radius:2.5px 2.5px 1.5px 1.5px;box-shadow:0 0.6px 0.8px #777"></div><div style="position:absolute;left:137.20px;top:13.50px;width:6.20px;height:6.20px;border-radius:50%;background:#f0d0b0"></div><div style="position:absolute;left:138.40px;top:14.40px;width:3.80px;height:3.80px;border-radius:50%;background:#f4b018;box-shadow:0 0.4px 0.6px rgba(0,0,0,0.6)"></div><div style="position:absolute;left:137.20px;top:21.00px;width:6.20px;height:6.20px;border-radius:50%;background:#f0c8b0"></div><div style="position:absolute;left:138.40px;top:21.90px;width:3.80px;height:3.80px;border-radius:50%;background:#f8781c;box-shadow:0 0.4px 0.6px rgba(0,0,0,0.6)"></div><div style="position:absolute;left:137.20px;top:28.50px;width:6.20px;height:6.20px;border-radius:50%;background:#f0c8b0"></div><div style="position:absolute;left:138.40px;top:29.40px;width:3.80px;height:3.80px;border-radius:50%;background:#f8781c;box-shadow:0 0.4px 0.6px rgba(0,0,0,0.6)"></div><div style="position:absolute;left:137.20px;top:36.00px;width:6.20px;height:6.20px;border-radius:50%;background:#f0b8b0"></div><div style="position:absolute;left:138.40px;top:36.90px;width:3.80px;height:3.80px;border-radius:50%;background:#f02030;box-shadow:0 0.4px 0.6px rgba(0,0,0,0.6)"></div><div style="position:absolute;left:137.20px;top:43.90px;width:6.20px;height:6.20px;border-radius:50%;background:#ecb8a0"></div><div style="position:absolute;left:138.40px;top:44.80px;width:3.80px;height:3.80px;border-radius:50%;background:#383838;box-shadow:0 0.4px 0.6px rgba(0,0,0,0.6)"></div><div style="position:absolute;left:137.20px;top:52.00px;width:6.20px;height:6.20px;border-radius:50%;background:#ecb8a0"></div><div style="position:absolute;left:138.40px;top:52.90px;width:3.80px;height:3.80px;border-radius:50%;background:#383838;box-shadow:0 0.4px 0.6px rgba(0,0,0,0.6)"></div><div style="position:absolute;left:137.30px;top:58.80px;width:6.00px;height:2.60px;background:#fafafa;border-radius:1.3px;box-shadow:0 0 0 0.4px #999"></div><div style="position:absolute;left:137.10px;top:63.20px;width:6.40px;height:6.40px;border-radius:50%;background:#e8c4b0"></div><div style="position:absolute;left:138.20px;top:63.90px;width:4.20px;height:4.20px;border-radius:50%;background:#1aa8e8;box-shadow:0 0.4px 0.6px rgba(0,0,0,0.6)"></div><div style="position:absolute;left:138.70px;top:73.00px;width:1.00px;height:19.00px;background:#666"></div><div style="position:absolute;left:137.70px;top:72.50px;width:3.00px;height:4.50px;background:linear-gradient(#fff,#d8d8d8);box-shadow:0 0.5px 1px #555;border-radius:0.5px"></div><div style="position:absolute;left:141.50px;top:72.50px;width:1.30px;height:19.00px;background:#5e5e5e"></div><div style="position:absolute;left:143.30px;top:72.50px;width:1.30px;height:19.00px;background:#6a6a6a"></div><div style="position:absolute;left:136.90px;top:94.60px;width:2.80px;height:2.80px;border-radius:50%;background:#f4f4f4;box-shadow:0 0 0 0.6px #777"></div><div style="position:absolute;left:140.90px;top:94.60px;width:2.80px;height:2.80px;border-radius:50%;background:#f4f4f4;box-shadow:0 0 0 0.6px #777"></div><div style="position:absolute;left:137.30px;top:99.00px;width:6.00px;height:1.50px;background:#c4c4c4"></div><div style="position:absolute;left:154.50px;top:0.00px;width:0.60px;height:102.50px;background:#c4c4c4"></div><div style="position:absolute;left:149.50px;top:2.00px;width:0.80px;height:2.00px;background:#999"></div><div style="position:absolute;left:149.10px;top:-2.80px;width:1.60px;height:1.60px;border-radius:50%;background:#3a3a3a"></div><div style="position:absolute;left:147.30px;top:6.20px;width:5.20px;height:5.00px;background:linear-gradient(#fff,#c8c8c8);border-radius:2.5px 2.5px 1.5px 1.5px;box-shadow:0 0.6px 0.8px #777"></div><div style="position:absolute;left:146.80px;top:13.50px;width:6.20px;height:6.20px;border-radius:50%;background:#f0d0b0"></div><div style="position:absolute;left:148.00px;top:14.40px;width:3.80px;height:3.80px;border-radius:50%;background:#f4b018;box-shadow:0 0.4px 0.6px rgba(0,0,0,0.6)"></div><div style="position:absolute;left:146.80px;top:21.00px;width:6.20px;height:6.20px;border-radius:50%;background:#f0c8b0"></div><div style="position:absolute;left:148.00px;top:21.90px;width:3.80px;height:3.80px;border-radius:50%;background:#f8781c;box-shadow:0 0.4px 0.6px rgba(0,0,0,0.6)"></div><div style="position:absolute;left:146.80px;top:28.50px;width:6.20px;height:6.20px;border-radius:50%;background:#f0c8b0"></div><div style="position:absolute;left:148.00px;top:29.40px;width:3.80px;height:3.80px;border-radius:50%;background:#f8781c;box-shadow:0 0.4px 0.6px rgba(0,0,0,0.6)"></div><div style="position:absolute;left:146.80px;top:36.00px;width:6.20px;height:6.20px;border-radius:50%;background:#f0b8b0"></div><div style="position:absolute;left:148.00px;top:36.90px;width:3.80px;height:3.80px;border-radius:50%;background:#f02030;box-shadow:0 0.4px 0.6px rgba(0,0,0,0.6)"></div><div style="position:absolute;left:146.80px;top:43.90px;width:6.20px;height:6.20px;border-radius:50%;background:#ecb8a0"></div><div style="position:absolute;left:148.00px;top:44.80px;width:3.80px;height:3.80px;border-radius:50%;background:#383838;box-shadow:0 0.4px 0.6px rgba(0,0,0,0.6)"></div><div style="position:absolute;left:146.80px;top:52.00px;width:6.20px;height:6.20px;border-radius:50%;background:#ecb8a0"></div><div style="position:absolute;left:148.00px;top:52.90px;width:3.80px;height:3.80px;border-radius:50%;background:#383838;box-shadow:0 0.4px 0.6px rgba(0,0,0,0.6)"></div><div style="position:absolute;left:146.90px;top:58.80px;width:6.00px;height:2.60px;background:#fafafa;border-radius:1.3px;box-shadow:0 0 0 0.4px #999"></div><div style="position:absolute;left:146.70px;top:63.20px;width:6.40px;height:6.40px;border-radius:50%;background:#e8c4b0"></div><div style="position:absolute;left:147.80px;top:63.90px;width:4.20px;height:4.20px;border-radius:50%;background:#1aa8e8;box-shadow:0 0.4px 0.6px rgba(0,0,0,0.6)"></div><div style="position:absolute;left:148.30px;top:73.00px;width:1.00px;height:19.00px;background:#666"></div><div style="position:absolute;left:147.30px;top:72.50px;width:3.00px;height:4.50px;background:linear-gradient(#fff,#d8d8d8);box-shadow:0 0.5px 1px #555;border-radius:0.5px"></div><div style="position:absolute;left:151.10px;top:72.50px;width:1.30px;height:19.00px;background:#5e5e5e"></div><div style="position:absolute;left:152.90px;top:72.50px;width:1.30px;height:19.00px;background:#6a6a6a"></div><div style="position:absolute;left:146.50px;top:94.60px;width:2.80px;height:2.80px;border-radius:50%;background:#f4f4f4;box-shadow:0 0 0 0.6px #777"></div><div style="position:absolute;left:150.50px;top:94.60px;width:2.80px;height:2.80px;border-radius:50%;background:#f4f4f4;box-shadow:0 0 0 0.6px #777"></div><div style="position:absolute;left:146.90px;top:99.00px;width:6.00px;height:1.50px;background:#c4c4c4"></div><div style="position:absolute;left:164.10px;top:0.00px;width:0.60px;height:102.50px;background:#c4c4c4"></div><div style="position:absolute;left:159.10px;top:2.00px;width:0.80px;height:2.00px;background:#999"></div><div style="position:absolute;left:158.70px;top:-2.80px;width:1.60px;height:1.60px;border-radius:50%;background:#3a3a3a"></div><div style="position:absolute;left:156.90px;top:6.20px;width:5.20px;height:5.00px;background:linear-gradient(#fff,#c8c8c8);border-radius:2.5px 2.5px 1.5px 1.5px;box-shadow:0 0.6px 0.8px #777"></div><div style="position:absolute;left:156.40px;top:13.50px;width:6.20px;height:6.20px;border-radius:50%;background:#f0d0b0"></div><div style="position:absolute;left:157.60px;top:14.40px;width:3.80px;height:3.80px;border-radius:50%;background:#f4b018;box-shadow:0 0.4px 0.6px rgba(0,0,0,0.6)"></div><div style="position:absolute;left:156.40px;top:21.00px;width:6.20px;height:6.20px;border-radius:50%;background:#f0c8b0"></div><div style="position:absolute;left:157.60px;top:21.90px;width:3.80px;height:3.80px;border-radius:50%;background:#f8781c;box-shadow:0 0.4px 0.6px rgba(0,0,0,0.6)"></div><div style="position:absolute;left:156.40px;top:28.50px;width:6.20px;height:6.20px;border-radius:50%;background:#f0c8b0"></div><div style="position:absolute;left:157.60px;top:29.40px;width:3.80px;height:3.80px;border-radius:50%;background:#f8781c;box-shadow:0 0.4px 0.6px rgba(0,0,0,0.6)"></div><div style="position:absolute;left:156.40px;top:36.00px;width:6.20px;height:6.20px;border-radius:50%;background:#f0b8b0"></div><div style="position:absolute;left:157.60px;top:36.90px;width:3.80px;height:3.80px;border-radius:50%;background:#f02030;box-shadow:0 0.4px 0.6px rgba(0,0,0,0.6)"></div><div style="position:absolute;left:156.40px;top:43.90px;width:6.20px;height:6.20px;border-radius:50%;background:#ecb8a0"></div><div style="position:absolute;left:157.60px;top:44.80px;width:3.80px;height:3.80px;border-radius:50%;background:#383838;box-shadow:0 0.4px 0.6px rgba(0,0,0,0.6)"></div><div style="position:absolute;left:156.40px;top:52.00px;width:6.20px;height:6.20px;border-radius:50%;background:#ecb8a0"></div><div style="position:absolute;left:157.60px;top:52.90px;width:3.80px;height:3.80px;border-radius:50%;background:#383838;box-shadow:0 0.4px 0.6px rgba(0,0,0,0.6)"></div><div style="position:absolute;left:156.50px;top:58.80px;width:6.00px;height:2.60px;background:#fafafa;border-radius:1.3px;box-shadow:0 0 0 0.4px #999"></div><div style="position:absolute;left:156.30px;top:63.20px;width:6.40px;height:6.40px;border-radius:50%;background:#e8c4b0"></div><div style="position:absolute;left:157.40px;top:63.90px;width:4.20px;height:4.20px;border-radius:50%;background:#1aa8e8;box-shadow:0 0.4px 0.6px rgba(0,0,0,0.6)"></div><div style="position:absolute;left:157.90px;top:73.00px;width:1.00px;height:19.00px;background:#666"></div><div style="position:absolute;left:156.90px;top:72.50px;width:3.00px;height:4.50px;background:linear-gradient(#fff,#d8d8d8);box-shadow:0 0.5px 1px #555;border-radius:0.5px"></div><div style="position:absolute;left:160.70px;top:72.50px;width:1.30px;height:19.00px;background:#5e5e5e"></div><div style="position:absolute;left:162.50px;top:72.50px;width:1.30px;height:19.00px;background:#6a6a6a"></div><div style="position:absolute;left:156.10px;top:94.60px;width:2.80px;height:2.80px;border-radius:50%;background:#f4f4f4;box-shadow:0 0 0 0.6px #777"></div><div style="position:absolute;left:160.10px;top:94.60px;width:2.80px;height:2.80px;border-radius:50%;background:#f4f4f4;box-shadow:0 0 0 0.6px #777"></div><div style="position:absolute;left:156.50px;top:99.00px;width:6.00px;height:1.50px;background:#c4c4c4"></div></div>
<div style="left:633px;top:264px;width:135px;height:69.4px;"><div style="position:absolute;left:0.00px;top:0.00px;width:135.00px;height:69.40px;background:linear-gradient(#dedad2,#c8c4bc);box-shadow:0 1px 2px #000"></div><div style="position:absolute;left:0.00px;top:0.00px;width:135.00px;height:13.50px;background:linear-gradient(#e6e2da,#d0ccc4)"></div><div style="position:absolute;left:0.00px;top:13.30px;width:135.00px;height:0.80px;background:#a8a49c"></div><div style="position:absolute;left:6px;top:5.5px;font-size:5.9px;color:#4a4a4a;line-height:1;white-space:nowrap;will-change:transform;transform:scaleX(-1);font-weight:bold">Bass Line</div><div style="position:absolute;left:36.00px;top:1.00px;width:0.70px;height:12.50px;background:#b8b4ac"></div><div style="position:absolute;left:38.30px;top:3.80px;width:8.40px;height:8.40px;border-radius:50%;background:radial-gradient(circle at 50% 30%,#ffffff 0,#e4e4e4 30%,#9a9a9a 62%,#3a3a3a 100%);box-shadow:0 0 0 0.7px #555,0 0.8px 1px #333"></div><div style="position:absolute;left:40.30px;top:8.2px;width:0;height:0;border-top:2.6px solid #3a3a3a;border-left:2.2px solid transparent;border-right:2.2px solid transparent"></div><div style="position:absolute;left:49.10px;top:3.80px;width:8.40px;height:8.40px;border-radius:50%;background:radial-gradient(circle at 50% 30%,#ffffff 0,#e4e4e4 30%,#9a9a9a 62%,#3a3a3a 100%);box-shadow:0 0 0 0.7px #555,0 0.8px 1px #333"></div><div style="position:absolute;left:51.10px;top:8.2px;width:0;height:0;border-top:2.6px solid #3a3a3a;border-left:2.2px solid transparent;border-right:2.2px solid transparent"></div><div style="position:absolute;left:59.90px;top:3.80px;width:8.40px;height:8.40px;border-radius:50%;background:radial-gradient(circle at 50% 30%,#ffffff 0,#e4e4e4 30%,#9a9a9a 62%,#3a3a3a 100%);box-shadow:0 0 0 0.7px #555,0 0.8px 1px #333"></div><div style="position:absolute;left:61.90px;top:8.2px;width:0;height:0;border-top:2.6px solid #3a3a3a;border-left:2.2px solid transparent;border-right:2.2px solid transparent"></div><div style="position:absolute;left:70.70px;top:3.80px;width:8.40px;height:8.40px;border-radius:50%;background:radial-gradient(circle at 50% 30%,#ffffff 0,#e4e4e4 30%,#9a9a9a 62%,#3a3a3a 100%);box-shadow:0 0 0 0.7px #555,0 0.8px 1px #333"></div><div style="position:absolute;left:72.70px;top:8.2px;width:0;height:0;border-top:2.6px solid #3a3a3a;border-left:2.2px solid transparent;border-right:2.2px solid transparent"></div><div style="position:absolute;left:81.50px;top:3.80px;width:8.40px;height:8.40px;border-radius:50%;background:radial-gradient(circle at 50% 30%,#ffffff 0,#e4e4e4 30%,#9a9a9a 62%,#3a3a3a 100%);box-shadow:0 0 0 0.7px #555,0 0.8px 1px #333"></div><div style="position:absolute;left:83.50px;top:8.2px;width:0;height:0;border-top:2.6px solid #3a3a3a;border-left:2.2px solid transparent;border-right:2.2px solid transparent"></div><div style="position:absolute;left:92.30px;top:3.80px;width:8.40px;height:8.40px;border-radius:50%;background:radial-gradient(circle at 50% 30%,#ffffff 0,#e4e4e4 30%,#9a9a9a 62%,#3a3a3a 100%);box-shadow:0 0 0 0.7px #555,0 0.8px 1px #333"></div><div style="position:absolute;left:94.30px;top:8.2px;width:0;height:0;border-top:2.6px solid #3a3a3a;border-left:2.2px solid transparent;border-right:2.2px solid transparent"></div><svg style="position:absolute;left:110px;top:4.5px" width="16" height="14.5" viewBox="0 0 20 18"><path d="M10 17 C3 11 0 8 0 4.8 C0 2 2.2 0 5 0 C7 0 8.8 1.2 10 3 C11.2 1.2 13 0 15 0 C17.8 0 20 2 20 4.8 C20 8 17 11 10 17Z" fill="#28b898"/></svg><div style="position:absolute;left:115.50px;top:8.00px;width:5.00px;height:4.50px;background:#e8e040;border-radius:1px"></div><div style="position:absolute;left:10.10px;top:19.20px;width:11.60px;height:11.60px;border-radius:50%;background:radial-gradient(circle at 50% 32%,#ffffff 0,#e8e8e8 30%,#a0a0a0 60%,#3a3a3a 100%);box-shadow:0 0 0 0.9px #4a4a4a,0 1px 1.5px #222"></div><svg style="position:absolute;left:27.5px;top:17px" width="10" height="9" viewBox="0 0 20 18"><path d="M10 17 C3 11 0 8 0 4.8 C0 2 2.2 0 5 0 C7 0 8.8 1.2 10 3 C11.2 1.2 13 0 15 0 C17.8 0 20 2 20 4.8 C20 8 17 11 10 17Z" fill="#f47a38"/></svg><div style="position:absolute;left:26px;top:27px;font-size:3px;color:#666;line-height:1;white-space:nowrap;will-change:transform;transform:scaleX(-1)">Cyrus Gemeni</div><div style="position:absolute;left:66.59px;top:30.61px;width:1.80px;height:1.80px;border-radius:50%;background:#444"></div><div style="position:absolute;left:64.15px;top:25.55px;width:1.80px;height:1.80px;border-radius:50%;background:#444"></div><div style="position:absolute;left:65.40px;top:20.08px;width:1.80px;height:1.80px;border-radius:50%;background:#444"></div><div style="position:absolute;left:69.79px;top:16.58px;width:1.80px;height:1.80px;border-radius:50%;background:#444"></div><div style="position:absolute;left:75.41px;top:16.58px;width:1.80px;height:1.80px;border-radius:50%;background:#444"></div><div style="position:absolute;left:79.80px;top:20.08px;width:1.80px;height:1.80px;border-radius:50%;background:#444"></div><div style="position:absolute;left:81.05px;top:25.55px;width:1.80px;height:1.80px;border-radius:50%;background:#444"></div><div style="position:absolute;left:78.61px;top:30.61px;width:1.80px;height:1.80px;border-radius:50%;background:#444"></div><div style="position:absolute;left:67.30px;top:19.30px;width:12.40px;height:12.40px;border-radius:50%;background:radial-gradient(circle at 50% 32%,#ffffff 0,#e8e8e8 30%,#a0a0a0 60%,#3a3a3a 100%);box-shadow:0 0 0 0.9px #4a4a4a,0 1px 1.5px #222"></div><div style="position:absolute;left:88.09px;top:30.61px;width:1.80px;height:1.80px;border-radius:50%;background:#444"></div><div style="position:absolute;left:85.65px;top:25.55px;width:1.80px;height:1.80px;border-radius:50%;background:#444"></div><div style="position:absolute;left:86.90px;top:20.08px;width:1.80px;height:1.80px;border-radius:50%;background:#444"></div><div style="position:absolute;left:91.29px;top:16.58px;width:1.80px;height:1.80px;border-radius:50%;background:#444"></div><div style="position:absolute;left:96.91px;top:16.58px;width:1.80px;height:1.80px;border-radius:50%;background:#444"></div><div style="position:absolute;left:101.30px;top:20.08px;width:1.80px;height:1.80px;border-radius:50%;background:#444"></div><div style="position:absolute;left:102.55px;top:25.55px;width:1.80px;height:1.80px;border-radius:50%;background:#444"></div><div style="position:absolute;left:100.11px;top:30.61px;width:1.80px;height:1.80px;border-radius:50%;background:#444"></div><div style="position:absolute;left:88.80px;top:19.30px;width:12.40px;height:12.40px;border-radius:50%;background:radial-gradient(circle at 50% 32%,#ffffff 0,#e8e8e8 30%,#a0a0a0 60%,#3a3a3a 100%);box-shadow:0 0 0 0.9px #4a4a4a,0 1px 1.5px #222"></div><div style="position:absolute;left:1.50px;top:35.00px;width:132.00px;height:27.50px;background:linear-gradient(#d2cec6,#c2beb6);box-shadow:inset 0 0.5px 0 #eee"></div><div style="position:absolute;left:3.50px;top:37.50px;width:14.00px;height:4.50px;background:#d81818"></div><div style="position:absolute;left:117.00px;top:37.50px;width:14.00px;height:4.50px;background:#d81818"></div><div style="position:absolute;left:4.50px;top:44.50px;width:9.00px;height:3.00px;background:#e8e8e8;border:0.5px solid #888;border-radius:1px"></div><div style="position:absolute;left:4.50px;top:50.50px;width:9.00px;height:3.00px;background:#e8e8e8;border:0.5px solid #888;border-radius:1px"></div><div style="position:absolute;left:116.00px;top:46.00px;width:7.00px;height:3.00px;background:#e8e8e8;border:0.5px solid #888;border-radius:1px"></div><div style="position:absolute;left:124.00px;top:46.00px;width:7.00px;height:3.00px;background:#e8e8e8;border:0.5px solid #888;border-radius:1px"></div><div style="position:absolute;left:121.00px;top:52.00px;width:8.00px;height:3.00px;background:#e8e8e8;border:0.5px solid #888;border-radius:1px"></div><div style="position:absolute;left:20.00px;top:36.80px;width:30.00px;height:1.80px;background:#222"></div><div style="position:absolute;left:20.00px;top:42.50px;width:30.00px;height:1.80px;background:#222"></div><div style="position:absolute;left:23.10px;top:38.90px;width:1.80px;height:1.80px;border-radius:50%;background:#e02020"></div><div style="position:absolute;left:22.00px;top:47.00px;width:4.00px;height:8.00px;background:linear-gradient(90deg,#bbb,#eee,#aaa);border:0.5px solid #777"></div><div style="position:absolute;left:23.20px;top:44.70px;width:1.60px;height:1.60px;border-radius:50%;background:#d02020"></div><div style="position:absolute;left:30.60px;top:38.90px;width:1.80px;height:1.80px;border-radius:50%;background:#e02020"></div><div style="position:absolute;left:29.50px;top:47.00px;width:4.00px;height:8.00px;background:linear-gradient(90deg,#bbb,#eee,#aaa);border:0.5px solid #777"></div><div style="position:absolute;left:30.70px;top:44.70px;width:1.60px;height:1.60px;border-radius:50%;background:#d02020"></div><div style="position:absolute;left:38.10px;top:38.90px;width:1.80px;height:1.80px;border-radius:50%;background:#e02020"></div><div style="position:absolute;left:37.00px;top:47.00px;width:4.00px;height:8.00px;background:linear-gradient(90deg,#bbb,#eee,#aaa);border:0.5px solid #777"></div><div style="position:absolute;left:38.20px;top:44.70px;width:1.60px;height:1.60px;border-radius:50%;background:#d02020"></div><div style="position:absolute;left:45.60px;top:38.90px;width:1.80px;height:1.80px;border-radius:50%;background:#e02020"></div><div style="position:absolute;left:44.50px;top:47.00px;width:4.00px;height:8.00px;background:linear-gradient(90deg,#bbb,#eee,#aaa);border:0.5px solid #777"></div><div style="position:absolute;left:45.70px;top:44.70px;width:1.60px;height:1.60px;border-radius:50%;background:#d02020"></div><div style="position:absolute;left:51.00px;top:36.50px;width:64.00px;height:23.50px;background:#111;border-radius:1px"></div><div style="position:absolute;left:51.80px;top:37.30px;width:7.20px;height:22.00px;background:linear-gradient(#f4f4f4,#dcdcdc)"></div><div style="position:absolute;left:54.30px;top:48.00px;width:2.50px;height:8.00px;background:linear-gradient(90deg,#aaa,#eee,#999);border:0.5px solid #666"></div><div style="position:absolute;left:54.70px;top:44.70px;width:1.60px;height:1.60px;border-radius:50%;background:#d04020"></div><div style="position:absolute;left:59.70px;top:37.30px;width:7.20px;height:22.00px;background:linear-gradient(#f4f4f4,#dcdcdc)"></div><div style="position:absolute;left:62.20px;top:48.00px;width:2.50px;height:8.00px;background:linear-gradient(90deg,#aaa,#eee,#999);border:0.5px solid #666"></div><div style="position:absolute;left:62.60px;top:44.70px;width:1.60px;height:1.60px;border-radius:50%;background:#d04020"></div><div style="position:absolute;left:67.60px;top:37.30px;width:7.20px;height:22.00px;background:linear-gradient(#f4f4f4,#dcdcdc)"></div><div style="position:absolute;left:70.10px;top:48.00px;width:2.50px;height:8.00px;background:linear-gradient(90deg,#aaa,#eee,#999);border:0.5px solid #666"></div><div style="position:absolute;left:70.50px;top:44.70px;width:1.60px;height:1.60px;border-radius:50%;background:#d04020"></div><div style="position:absolute;left:75.50px;top:37.30px;width:7.20px;height:22.00px;background:linear-gradient(#f4f4f4,#dcdcdc)"></div><div style="position:absolute;left:78.00px;top:48.00px;width:2.50px;height:8.00px;background:linear-gradient(90deg,#aaa,#eee,#999);border:0.5px solid #666"></div><div style="position:absolute;left:78.40px;top:44.70px;width:1.60px;height:1.60px;border-radius:50%;background:#d04020"></div><div style="position:absolute;left:83.40px;top:37.30px;width:7.20px;height:22.00px;background:linear-gradient(#f4f4f4,#dcdcdc)"></div><div style="position:absolute;left:85.90px;top:48.00px;width:2.50px;height:8.00px;background:linear-gradient(90deg,#aaa,#eee,#999);border:0.5px solid #666"></div><div style="position:absolute;left:86.30px;top:44.70px;width:1.60px;height:1.60px;border-radius:50%;background:#d04020"></div><div style="position:absolute;left:91.30px;top:37.30px;width:7.20px;height:22.00px;background:linear-gradient(#f4f4f4,#dcdcdc)"></div><div style="position:absolute;left:93.80px;top:48.00px;width:2.50px;height:8.00px;background:linear-gradient(90deg,#aaa,#eee,#999);border:0.5px solid #666"></div><div style="position:absolute;left:94.20px;top:44.70px;width:1.60px;height:1.60px;border-radius:50%;background:#d04020"></div><div style="position:absolute;left:99.20px;top:37.30px;width:7.20px;height:22.00px;background:linear-gradient(#f4f4f4,#dcdcdc)"></div><div style="position:absolute;left:101.70px;top:48.00px;width:2.50px;height:8.00px;background:linear-gradient(90deg,#aaa,#eee,#999);border:0.5px solid #666"></div><div style="position:absolute;left:102.10px;top:44.70px;width:1.60px;height:1.60px;border-radius:50%;background:#d04020"></div><div style="position:absolute;left:107.10px;top:37.30px;width:7.20px;height:22.00px;background:linear-gradient(#f4f4f4,#dcdcdc)"></div><div style="position:absolute;left:109.60px;top:48.00px;width:2.50px;height:8.00px;background:linear-gradient(90deg,#aaa,#eee,#999);border:0.5px solid #666"></div><div style="position:absolute;left:110.00px;top:44.70px;width:1.60px;height:1.60px;border-radius:50%;background:#d04020"></div><div style="position:absolute;left:65.20px;top:36.80px;width:4.80px;height:14.00px;background:#151515"></div><div style="position:absolute;left:66.50px;top:39.50px;width:2.20px;height:8.00px;background:linear-gradient(90deg,#bbb,#fff,#aaa)"></div><div style="position:absolute;left:66.90px;top:37.80px;width:1.40px;height:1.40px;border-radius:50%;background:#d04020"></div><div style="position:absolute;left:73.10px;top:36.80px;width:4.80px;height:14.00px;background:#151515"></div><div style="position:absolute;left:74.40px;top:39.50px;width:2.20px;height:8.00px;background:linear-gradient(90deg,#bbb,#fff,#aaa)"></div><div style="position:absolute;left:74.80px;top:37.80px;width:1.40px;height:1.40px;border-radius:50%;background:#d04020"></div><div style="position:absolute;left:81.00px;top:36.80px;width:4.80px;height:14.00px;background:#151515"></div><div style="position:absolute;left:82.30px;top:39.50px;width:2.20px;height:8.00px;background:linear-gradient(90deg,#bbb,#fff,#aaa)"></div><div style="position:absolute;left:82.70px;top:37.80px;width:1.40px;height:1.40px;border-radius:50%;background:#d04020"></div><div style="position:absolute;left:96.80px;top:36.80px;width:4.80px;height:14.00px;background:#151515"></div><div style="position:absolute;left:98.10px;top:39.50px;width:2.20px;height:8.00px;background:linear-gradient(90deg,#bbb,#fff,#aaa)"></div><div style="position:absolute;left:98.50px;top:37.80px;width:1.40px;height:1.40px;border-radius:50%;background:#d04020"></div><div style="position:absolute;left:104.70px;top:36.80px;width:4.80px;height:14.00px;background:#151515"></div><div style="position:absolute;left:106.00px;top:39.50px;width:2.20px;height:8.00px;background:linear-gradient(90deg,#bbb,#fff,#aaa)"></div><div style="position:absolute;left:106.40px;top:37.80px;width:1.40px;height:1.40px;border-radius:50%;background:#d04020"></div><div style="position:absolute;left:66.60px;top:37.50px;width:2.00px;height:2.00px;border-radius:50%;background:#ff2020"></div><div style="position:absolute;left:0.00px;top:62.40px;width:135.00px;height:7.00px;background:linear-gradient(#555,#2a2a2a)"></div></div>
<div style="left:633px;top:345px;width:135px;height:69.4px;"><div style="position:absolute;left:0.00px;top:0.00px;width:135.00px;height:69.40px;background:linear-gradient(#dedad2,#c8c4bc);box-shadow:0 1px 2px #000"></div><div style="position:absolute;left:0.00px;top:0.00px;width:135.00px;height:13.50px;background:linear-gradient(#e6e2da,#d0ccc4)"></div><div style="position:absolute;left:0.00px;top:13.30px;width:135.00px;height:0.80px;background:#a8a49c"></div><div style="position:absolute;left:6px;top:5.5px;font-size:5.9px;color:#4a4a4a;line-height:1;white-space:nowrap;will-change:transform;transform:scaleX(-1);font-weight:bold">Bass Line</div><div style="position:absolute;left:36.00px;top:1.00px;width:0.70px;height:12.50px;background:#b8b4ac"></div><div style="position:absolute;left:38.30px;top:3.80px;width:8.40px;height:8.40px;border-radius:50%;background:radial-gradient(circle at 50% 30%,#ffffff 0,#e4e4e4 30%,#9a9a9a 62%,#3a3a3a 100%);box-shadow:0 0 0 0.7px #555,0 0.8px 1px #333"></div><div style="position:absolute;left:40.30px;top:8.2px;width:0;height:0;border-top:2.6px solid #3a3a3a;border-left:2.2px solid transparent;border-right:2.2px solid transparent"></div><div style="position:absolute;left:49.10px;top:3.80px;width:8.40px;height:8.40px;border-radius:50%;background:radial-gradient(circle at 50% 30%,#ffffff 0,#e4e4e4 30%,#9a9a9a 62%,#3a3a3a 100%);box-shadow:0 0 0 0.7px #555,0 0.8px 1px #333"></div><div style="position:absolute;left:51.10px;top:8.2px;width:0;height:0;border-top:2.6px solid #3a3a3a;border-left:2.2px solid transparent;border-right:2.2px solid transparent"></div><div style="position:absolute;left:59.90px;top:3.80px;width:8.40px;height:8.40px;border-radius:50%;background:radial-gradient(circle at 50% 30%,#ffffff 0,#e4e4e4 30%,#9a9a9a 62%,#3a3a3a 100%);box-shadow:0 0 0 0.7px #555,0 0.8px 1px #333"></div><div style="position:absolute;left:61.90px;top:8.2px;width:0;height:0;border-top:2.6px solid #3a3a3a;border-left:2.2px solid transparent;border-right:2.2px solid transparent"></div><div style="position:absolute;left:70.70px;top:3.80px;width:8.40px;height:8.40px;border-radius:50%;background:radial-gradient(circle at 50% 30%,#ffffff 0,#e4e4e4 30%,#9a9a9a 62%,#3a3a3a 100%);box-shadow:0 0 0 0.7px #555,0 0.8px 1px #333"></div><div style="position:absolute;left:72.70px;top:8.2px;width:0;height:0;border-top:2.6px solid #3a3a3a;border-left:2.2px solid transparent;border-right:2.2px solid transparent"></div><div style="position:absolute;left:81.50px;top:3.80px;width:8.40px;height:8.40px;border-radius:50%;background:radial-gradient(circle at 50% 30%,#ffffff 0,#e4e4e4 30%,#9a9a9a 62%,#3a3a3a 100%);box-shadow:0 0 0 0.7px #555,0 0.8px 1px #333"></div><div style="position:absolute;left:83.50px;top:8.2px;width:0;height:0;border-top:2.6px solid #3a3a3a;border-left:2.2px solid transparent;border-right:2.2px solid transparent"></div><div style="position:absolute;left:92.30px;top:3.80px;width:8.40px;height:8.40px;border-radius:50%;background:radial-gradient(circle at 50% 30%,#ffffff 0,#e4e4e4 30%,#9a9a9a 62%,#3a3a3a 100%);box-shadow:0 0 0 0.7px #555,0 0.8px 1px #333"></div><div style="position:absolute;left:94.30px;top:8.2px;width:0;height:0;border-top:2.6px solid #3a3a3a;border-left:2.2px solid transparent;border-right:2.2px solid transparent"></div><svg style="position:absolute;left:110px;top:4.5px" width="16" height="14.5" viewBox="0 0 20 18"><path d="M10 17 C3 11 0 8 0 4.8 C0 2 2.2 0 5 0 C7 0 8.8 1.2 10 3 C11.2 1.2 13 0 15 0 C17.8 0 20 2 20 4.8 C20 8 17 11 10 17Z" fill="#28b898"/></svg><div style="position:absolute;left:115.50px;top:8.00px;width:5.00px;height:4.50px;background:#e8e040;border-radius:1px"></div><div style="position:absolute;left:10.10px;top:19.20px;width:11.60px;height:11.60px;border-radius:50%;background:radial-gradient(circle at 50% 32%,#ffffff 0,#e8e8e8 30%,#a0a0a0 60%,#3a3a3a 100%);box-shadow:0 0 0 0.9px #4a4a4a,0 1px 1.5px #222"></div><svg style="position:absolute;left:27.5px;top:17px" width="10" height="9" viewBox="0 0 20 18"><path d="M10 17 C3 11 0 8 0 4.8 C0 2 2.2 0 5 0 C7 0 8.8 1.2 10 3 C11.2 1.2 13 0 15 0 C17.8 0 20 2 20 4.8 C20 8 17 11 10 17Z" fill="#f47a38"/></svg><div style="position:absolute;left:26px;top:27px;font-size:3px;color:#666;line-height:1;white-space:nowrap;will-change:transform;transform:scaleX(-1)">Cyrus Gemeni</div><div style="position:absolute;left:66.59px;top:30.61px;width:1.80px;height:1.80px;border-radius:50%;background:#444"></div><div style="position:absolute;left:64.15px;top:25.55px;width:1.80px;height:1.80px;border-radius:50%;background:#444"></div><div style="position:absolute;left:65.40px;top:20.08px;width:1.80px;height:1.80px;border-radius:50%;background:#444"></div><div style="position:absolute;left:69.79px;top:16.58px;width:1.80px;height:1.80px;border-radius:50%;background:#444"></div><div style="position:absolute;left:75.41px;top:16.58px;width:1.80px;height:1.80px;border-radius:50%;background:#444"></div><div style="position:absolute;left:79.80px;top:20.08px;width:1.80px;height:1.80px;border-radius:50%;background:#444"></div><div style="position:absolute;left:81.05px;top:25.55px;width:1.80px;height:1.80px;border-radius:50%;background:#444"></div><div style="position:absolute;left:78.61px;top:30.61px;width:1.80px;height:1.80px;border-radius:50%;background:#444"></div><div style="position:absolute;left:67.30px;top:19.30px;width:12.40px;height:12.40px;border-radius:50%;background:radial-gradient(circle at 50% 32%,#ffffff 0,#e8e8e8 30%,#a0a0a0 60%,#3a3a3a 100%);box-shadow:0 0 0 0.9px #4a4a4a,0 1px 1.5px #222"></div><div style="position:absolute;left:88.09px;top:30.61px;width:1.80px;height:1.80px;border-radius:50%;background:#444"></div><div style="position:absolute;left:85.65px;top:25.55px;width:1.80px;height:1.80px;border-radius:50%;background:#444"></div><div style="position:absolute;left:86.90px;top:20.08px;width:1.80px;height:1.80px;border-radius:50%;background:#444"></div><div style="position:absolute;left:91.29px;top:16.58px;width:1.80px;height:1.80px;border-radius:50%;background:#444"></div><div style="position:absolute;left:96.91px;top:16.58px;width:1.80px;height:1.80px;border-radius:50%;background:#444"></div><div style="position:absolute;left:101.30px;top:20.08px;width:1.80px;height:1.80px;border-radius:50%;background:#444"></div><div style="position:absolute;left:102.55px;top:25.55px;width:1.80px;height:1.80px;border-radius:50%;background:#444"></div><div style="position:absolute;left:100.11px;top:30.61px;width:1.80px;height:1.80px;border-radius:50%;background:#444"></div><div style="position:absolute;left:88.80px;top:19.30px;width:12.40px;height:12.40px;border-radius:50%;background:radial-gradient(circle at 50% 32%,#ffffff 0,#e8e8e8 30%,#a0a0a0 60%,#3a3a3a 100%);box-shadow:0 0 0 0.9px #4a4a4a,0 1px 1.5px #222"></div><div style="position:absolute;left:1.50px;top:35.00px;width:132.00px;height:27.50px;background:linear-gradient(#d2cec6,#c2beb6);box-shadow:inset 0 0.5px 0 #eee"></div><div style="position:absolute;left:3.50px;top:37.50px;width:14.00px;height:4.50px;background:#d81818"></div><div style="position:absolute;left:117.00px;top:37.50px;width:14.00px;height:4.50px;background:#d81818"></div><div style="position:absolute;left:4.50px;top:44.50px;width:9.00px;height:3.00px;background:#e8e8e8;border:0.5px solid #888;border-radius:1px"></div><div style="position:absolute;left:4.50px;top:50.50px;width:9.00px;height:3.00px;background:#e8e8e8;border:0.5px solid #888;border-radius:1px"></div><div style="position:absolute;left:116.00px;top:46.00px;width:7.00px;height:3.00px;background:#e8e8e8;border:0.5px solid #888;border-radius:1px"></div><div style="position:absolute;left:124.00px;top:46.00px;width:7.00px;height:3.00px;background:#e8e8e8;border:0.5px solid #888;border-radius:1px"></div><div style="position:absolute;left:121.00px;top:52.00px;width:8.00px;height:3.00px;background:#e8e8e8;border:0.5px solid #888;border-radius:1px"></div><div style="position:absolute;left:20.00px;top:36.80px;width:30.00px;height:1.80px;background:#222"></div><div style="position:absolute;left:20.00px;top:42.50px;width:30.00px;height:1.80px;background:#222"></div><div style="position:absolute;left:23.10px;top:38.90px;width:1.80px;height:1.80px;border-radius:50%;background:#e02020"></div><div style="position:absolute;left:22.00px;top:47.00px;width:4.00px;height:8.00px;background:linear-gradient(90deg,#bbb,#eee,#aaa);border:0.5px solid #777"></div><div style="position:absolute;left:23.20px;top:44.70px;width:1.60px;height:1.60px;border-radius:50%;background:#d02020"></div><div style="position:absolute;left:30.60px;top:38.90px;width:1.80px;height:1.80px;border-radius:50%;background:#e02020"></div><div style="position:absolute;left:29.50px;top:47.00px;width:4.00px;height:8.00px;background:linear-gradient(90deg,#bbb,#eee,#aaa);border:0.5px solid #777"></div><div style="position:absolute;left:30.70px;top:44.70px;width:1.60px;height:1.60px;border-radius:50%;background:#d02020"></div><div style="position:absolute;left:38.10px;top:38.90px;width:1.80px;height:1.80px;border-radius:50%;background:#e02020"></div><div style="position:absolute;left:37.00px;top:47.00px;width:4.00px;height:8.00px;background:linear-gradient(90deg,#bbb,#eee,#aaa);border:0.5px solid #777"></div><div style="position:absolute;left:38.20px;top:44.70px;width:1.60px;height:1.60px;border-radius:50%;background:#d02020"></div><div style="position:absolute;left:45.60px;top:38.90px;width:1.80px;height:1.80px;border-radius:50%;background:#e02020"></div><div style="position:absolute;left:44.50px;top:47.00px;width:4.00px;height:8.00px;background:linear-gradient(90deg,#bbb,#eee,#aaa);border:0.5px solid #777"></div><div style="position:absolute;left:45.70px;top:44.70px;width:1.60px;height:1.60px;border-radius:50%;background:#d02020"></div><div style="position:absolute;left:51.00px;top:36.50px;width:64.00px;height:23.50px;background:#111;border-radius:1px"></div><div style="position:absolute;left:51.80px;top:37.30px;width:7.20px;height:22.00px;background:linear-gradient(#f4f4f4,#dcdcdc)"></div><div style="position:absolute;left:54.30px;top:48.00px;width:2.50px;height:8.00px;background:linear-gradient(90deg,#aaa,#eee,#999);border:0.5px solid #666"></div><div style="position:absolute;left:54.70px;top:44.70px;width:1.60px;height:1.60px;border-radius:50%;background:#d04020"></div><div style="position:absolute;left:59.70px;top:37.30px;width:7.20px;height:22.00px;background:linear-gradient(#f4f4f4,#dcdcdc)"></div><div style="position:absolute;left:62.20px;top:48.00px;width:2.50px;height:8.00px;background:linear-gradient(90deg,#aaa,#eee,#999);border:0.5px solid #666"></div><div style="position:absolute;left:62.60px;top:44.70px;width:1.60px;height:1.60px;border-radius:50%;background:#d04020"></div><div style="position:absolute;left:67.60px;top:37.30px;width:7.20px;height:22.00px;background:linear-gradient(#f4f4f4,#dcdcdc)"></div><div style="position:absolute;left:70.10px;top:48.00px;width:2.50px;height:8.00px;background:linear-gradient(90deg,#aaa,#eee,#999);border:0.5px solid #666"></div><div style="position:absolute;left:70.50px;top:44.70px;width:1.60px;height:1.60px;border-radius:50%;background:#d04020"></div><div style="position:absolute;left:75.50px;top:37.30px;width:7.20px;height:22.00px;background:linear-gradient(#f4f4f4,#dcdcdc)"></div><div style="position:absolute;left:78.00px;top:48.00px;width:2.50px;height:8.00px;background:linear-gradient(90deg,#aaa,#eee,#999);border:0.5px solid #666"></div><div style="position:absolute;left:78.40px;top:44.70px;width:1.60px;height:1.60px;border-radius:50%;background:#d04020"></div><div style="position:absolute;left:83.40px;top:37.30px;width:7.20px;height:22.00px;background:linear-gradient(#f4f4f4,#dcdcdc)"></div><div style="position:absolute;left:85.90px;top:48.00px;width:2.50px;height:8.00px;background:linear-gradient(90deg,#aaa,#eee,#999);border:0.5px solid #666"></div><div style="position:absolute;left:86.30px;top:44.70px;width:1.60px;height:1.60px;border-radius:50%;background:#d04020"></div><div style="position:absolute;left:91.30px;top:37.30px;width:7.20px;height:22.00px;background:linear-gradient(#f4f4f4,#dcdcdc)"></div><div style="position:absolute;left:93.80px;top:48.00px;width:2.50px;height:8.00px;background:linear-gradient(90deg,#aaa,#eee,#999);border:0.5px solid #666"></div><div style="position:absolute;left:94.20px;top:44.70px;width:1.60px;height:1.60px;border-radius:50%;background:#d04020"></div><div style="position:absolute;left:99.20px;top:37.30px;width:7.20px;height:22.00px;background:linear-gradient(#f4f4f4,#dcdcdc)"></div><div style="position:absolute;left:101.70px;top:48.00px;width:2.50px;height:8.00px;background:linear-gradient(90deg,#aaa,#eee,#999);border:0.5px solid #666"></div><div style="position:absolute;left:102.10px;top:44.70px;width:1.60px;height:1.60px;border-radius:50%;background:#d04020"></div><div style="position:absolute;left:107.10px;top:37.30px;width:7.20px;height:22.00px;background:linear-gradient(#f4f4f4,#dcdcdc)"></div><div style="position:absolute;left:109.60px;top:48.00px;width:2.50px;height:8.00px;background:linear-gradient(90deg,#aaa,#eee,#999);border:0.5px solid #666"></div><div style="position:absolute;left:110.00px;top:44.70px;width:1.60px;height:1.60px;border-radius:50%;background:#d04020"></div><div style="position:absolute;left:65.20px;top:36.80px;width:4.80px;height:14.00px;background:#151515"></div><div style="position:absolute;left:66.50px;top:39.50px;width:2.20px;height:8.00px;background:linear-gradient(90deg,#bbb,#fff,#aaa)"></div><div style="position:absolute;left:66.90px;top:37.80px;width:1.40px;height:1.40px;border-radius:50%;background:#d04020"></div><div style="position:absolute;left:73.10px;top:36.80px;width:4.80px;height:14.00px;background:#151515"></div><div style="position:absolute;left:74.40px;top:39.50px;width:2.20px;height:8.00px;background:linear-gradient(90deg,#bbb,#fff,#aaa)"></div><div style="position:absolute;left:74.80px;top:37.80px;width:1.40px;height:1.40px;border-radius:50%;background:#d04020"></div><div style="position:absolute;left:81.00px;top:36.80px;width:4.80px;height:14.00px;background:#151515"></div><div style="position:absolute;left:82.30px;top:39.50px;width:2.20px;height:8.00px;background:linear-gradient(90deg,#bbb,#fff,#aaa)"></div><div style="position:absolute;left:82.70px;top:37.80px;width:1.40px;height:1.40px;border-radius:50%;background:#d04020"></div><div style="position:absolute;left:96.80px;top:36.80px;width:4.80px;height:14.00px;background:#151515"></div><div style="position:absolute;left:98.10px;top:39.50px;width:2.20px;height:8.00px;background:linear-gradient(90deg,#bbb,#fff,#aaa)"></div><div style="position:absolute;left:98.50px;top:37.80px;width:1.40px;height:1.40px;border-radius:50%;background:#d04020"></div><div style="position:absolute;left:104.70px;top:36.80px;width:4.80px;height:14.00px;background:#151515"></div><div style="position:absolute;left:106.00px;top:39.50px;width:2.20px;height:8.00px;background:linear-gradient(90deg,#bbb,#fff,#aaa)"></div><div style="position:absolute;left:106.40px;top:37.80px;width:1.40px;height:1.40px;border-radius:50%;background:#d04020"></div><div style="position:absolute;left:66.60px;top:37.50px;width:2.00px;height:2.00px;border-radius:50%;background:#ff2020"></div><div style="position:absolute;left:0.00px;top:62.40px;width:135.00px;height:7.00px;background:linear-gradient(#555,#2a2a2a)"></div><div style="position:absolute;left:80.80px;top:3.80px;width:10.00px;height:8.80px;box-shadow:inset 0 0 0 1px #30c8e8"></div><div style="position:absolute;left:88.50px;top:3.80px;width:2.20px;height:2.20px;background:#111"></div></div>
<div style="left:396px;top:384px;width:177px;height:113px;"><div style="position:absolute;left:0.00px;top:0.00px;width:177.00px;height:113.00px;background:linear-gradient(#1e1e1e,#161616);border-radius:3px;box-shadow:0 1px 3px #000,inset 0 0 0 0.8px #2a2a2a"></div><div style="position:absolute;left:7.50px;top:1.50px;width:162.50px;height:100.50px;background:linear-gradient(#383230,#2c2826 30%,#2a2624)"></div><div style="position:absolute;left:7.50px;top:1.50px;width:162.50px;height:0.80px;background:#555"></div><div style="position:absolute;left:15.50px;top:-1.60px;width:4.00px;height:1.60px;background:linear-gradient(#b8b8b8,#555);border-radius:2px 2px 0 0"></div><div style="position:absolute;left:26.32px;top:-1.60px;width:4.00px;height:1.60px;background:linear-gradient(#b8b8b8,#555);border-radius:2px 2px 0 0"></div><div style="position:absolute;left:37.14px;top:-1.60px;width:4.00px;height:1.60px;background:linear-gradient(#b8b8b8,#555);border-radius:2px 2px 0 0"></div><div style="position:absolute;left:47.96px;top:-1.60px;width:4.00px;height:1.60px;background:linear-gradient(#b8b8b8,#555);border-radius:2px 2px 0 0"></div><div style="position:absolute;left:58.78px;top:-1.60px;width:4.00px;height:1.60px;background:linear-gradient(#b8b8b8,#555);border-radius:2px 2px 0 0"></div><div style="position:absolute;left:69.60px;top:-1.60px;width:4.00px;height:1.60px;background:linear-gradient(#b8b8b8,#555);border-radius:2px 2px 0 0"></div><div style="position:absolute;left:80.42px;top:-1.60px;width:4.00px;height:1.60px;background:linear-gradient(#b8b8b8,#555);border-radius:2px 2px 0 0"></div><div style="position:absolute;left:91.24px;top:-1.60px;width:4.00px;height:1.60px;background:linear-gradient(#b8b8b8,#555);border-radius:2px 2px 0 0"></div><div style="position:absolute;left:102.06px;top:-1.60px;width:4.00px;height:1.60px;background:linear-gradient(#b8b8b8,#555);border-radius:2px 2px 0 0"></div><div style="position:absolute;left:112.88px;top:-1.60px;width:4.00px;height:1.60px;background:linear-gradient(#b8b8b8,#555);border-radius:2px 2px 0 0"></div><div style="position:absolute;left:123.70px;top:-1.60px;width:4.00px;height:1.60px;background:linear-gradient(#b8b8b8,#555);border-radius:2px 2px 0 0"></div><div style="position:absolute;left:134.52px;top:-1.60px;width:4.00px;height:1.60px;background:linear-gradient(#b8b8b8,#555);border-radius:2px 2px 0 0"></div><div style="position:absolute;left:8.70px;top:3.70px;width:2.60px;height:2.60px;border-radius:50%;background:#151515"></div><div style="position:absolute;left:164.70px;top:3.70px;width:2.60px;height:2.60px;border-radius:50%;background:#151515"></div><div style="position:absolute;left:8.70px;top:63.70px;width:2.60px;height:2.60px;border-radius:50%;background:#151515"></div><div style="position:absolute;left:164.70px;top:63.70px;width:2.60px;height:2.60px;border-radius:50%;background:#151515"></div><div style="position:absolute;left:11.50px;top:14.50px;width:130.00px;height:40.00px;background:#2a2624;box-shadow:inset 0 0.8px 0 #4a4442"></div><div style="position:absolute;left:12.10px;top:14.50px;width:0.70px;height:40.00px;background:#1a1716"></div><div style="position:absolute;left:12.90px;top:15.70px;width:1.60px;height:1.60px;border-radius:50%;background:#c83020"></div><div style="position:absolute;left:14.10px;top:18.00px;width:6.80px;height:6.80px;border-radius:50%;background:#141210"></div><div style="position:absolute;left:15.40px;top:19.10px;width:4.20px;height:4.20px;border-radius:50%;background:radial-gradient(circle,#ffe070 0,#f8a020 55%,#c05808 100%)"></div><div style="position:absolute;left:22.92px;top:14.50px;width:0.70px;height:40.00px;background:#1a1716"></div><div style="position:absolute;left:23.72px;top:15.70px;width:1.60px;height:1.60px;border-radius:50%;background:#c83020"></div><div style="position:absolute;left:24.92px;top:18.00px;width:6.80px;height:6.80px;border-radius:50%;background:#141210"></div><div style="position:absolute;left:26.22px;top:19.10px;width:4.20px;height:4.20px;border-radius:50%;background:radial-gradient(circle,#ffe070 0,#f8a020 55%,#c05808 100%)"></div><div style="position:absolute;left:33.74px;top:14.50px;width:0.70px;height:40.00px;background:#1a1716"></div><div style="position:absolute;left:34.54px;top:15.70px;width:1.60px;height:1.60px;border-radius:50%;background:#c83020"></div><div style="position:absolute;left:35.74px;top:18.00px;width:6.80px;height:6.80px;border-radius:50%;background:#141210"></div><div style="position:absolute;left:37.04px;top:19.10px;width:4.20px;height:4.20px;border-radius:50%;background:radial-gradient(circle,#ffe070 0,#f8a020 55%,#c05808 100%)"></div><div style="position:absolute;left:44.56px;top:14.50px;width:0.70px;height:40.00px;background:#1a1716"></div><div style="position:absolute;left:45.36px;top:15.70px;width:1.60px;height:1.60px;border-radius:50%;background:#c83020"></div><div style="position:absolute;left:46.56px;top:18.00px;width:6.80px;height:6.80px;border-radius:50%;background:#141210"></div><div style="position:absolute;left:47.86px;top:19.10px;width:4.20px;height:4.20px;border-radius:50%;background:radial-gradient(circle,#ffe070 0,#f8a020 55%,#c05808 100%)"></div><div style="position:absolute;left:55.38px;top:14.50px;width:0.70px;height:40.00px;background:#1a1716"></div><div style="position:absolute;left:56.18px;top:15.70px;width:1.60px;height:1.60px;border-radius:50%;background:#c83020"></div><div style="position:absolute;left:57.38px;top:18.00px;width:6.80px;height:6.80px;border-radius:50%;background:#141210"></div><div style="position:absolute;left:58.68px;top:19.10px;width:4.20px;height:4.20px;border-radius:50%;background:radial-gradient(circle,#ffe070 0,#f8a020 55%,#c05808 100%)"></div><div style="position:absolute;left:66.20px;top:14.50px;width:0.70px;height:40.00px;background:#1a1716"></div><div style="position:absolute;left:67.00px;top:15.70px;width:1.60px;height:1.60px;border-radius:50%;background:#c83020"></div><div style="position:absolute;left:68.20px;top:18.00px;width:6.80px;height:6.80px;border-radius:50%;background:#141210"></div><div style="position:absolute;left:69.50px;top:19.10px;width:4.20px;height:4.20px;border-radius:50%;background:radial-gradient(circle,#ffe070 0,#f8a020 55%,#c05808 100%)"></div><div style="position:absolute;left:77.02px;top:14.50px;width:0.70px;height:40.00px;background:#1a1716"></div><div style="position:absolute;left:77.82px;top:15.70px;width:1.60px;height:1.60px;border-radius:50%;background:#c83020"></div><div style="position:absolute;left:79.02px;top:18.00px;width:6.80px;height:6.80px;border-radius:50%;background:#141210"></div><div style="position:absolute;left:80.32px;top:19.10px;width:4.20px;height:4.20px;border-radius:50%;background:radial-gradient(circle,#ffe070 0,#f8a020 55%,#c05808 100%)"></div><div style="position:absolute;left:87.84px;top:14.50px;width:0.70px;height:40.00px;background:#1a1716"></div><div style="position:absolute;left:88.64px;top:15.70px;width:1.60px;height:1.60px;border-radius:50%;background:#c83020"></div><div style="position:absolute;left:89.84px;top:18.00px;width:6.80px;height:6.80px;border-radius:50%;background:#141210"></div><div style="position:absolute;left:91.14px;top:19.10px;width:4.20px;height:4.20px;border-radius:50%;background:radial-gradient(circle,#ffe070 0,#f8a020 55%,#c05808 100%)"></div><div style="position:absolute;left:98.66px;top:14.50px;width:0.70px;height:40.00px;background:#1a1716"></div><div style="position:absolute;left:99.46px;top:15.70px;width:1.60px;height:1.60px;border-radius:50%;background:#c83020"></div><div style="position:absolute;left:100.66px;top:18.00px;width:6.80px;height:6.80px;border-radius:50%;background:#141210"></div><div style="position:absolute;left:101.96px;top:19.10px;width:4.20px;height:4.20px;border-radius:50%;background:radial-gradient(circle,#ffe070 0,#f8a020 55%,#c05808 100%)"></div><div style="position:absolute;left:109.48px;top:14.50px;width:0.70px;height:40.00px;background:#1a1716"></div><div style="position:absolute;left:110.28px;top:15.70px;width:1.60px;height:1.60px;border-radius:50%;background:#c83020"></div><div style="position:absolute;left:111.48px;top:18.00px;width:6.80px;height:6.80px;border-radius:50%;background:#141210"></div><div style="position:absolute;left:112.78px;top:19.10px;width:4.20px;height:4.20px;border-radius:50%;background:radial-gradient(circle,#ffe070 0,#f8a020 55%,#c05808 100%)"></div><div style="position:absolute;left:120.30px;top:14.50px;width:0.70px;height:40.00px;background:#1a1716"></div><div style="position:absolute;left:121.10px;top:15.70px;width:1.60px;height:1.60px;border-radius:50%;background:#c83020"></div><div style="position:absolute;left:122.30px;top:18.00px;width:6.80px;height:6.80px;border-radius:50%;background:#141210"></div><div style="position:absolute;left:123.60px;top:19.10px;width:4.20px;height:4.20px;border-radius:50%;background:radial-gradient(circle,#ffe070 0,#f8a020 55%,#c05808 100%)"></div><div style="position:absolute;left:131.12px;top:14.50px;width:0.70px;height:40.00px;background:#1a1716"></div><div style="position:absolute;left:131.92px;top:15.70px;width:1.60px;height:1.60px;border-radius:50%;background:#c83020"></div><div style="position:absolute;left:133.12px;top:18.00px;width:6.80px;height:6.80px;border-radius:50%;background:#141210"></div><div style="position:absolute;left:134.42px;top:19.10px;width:4.20px;height:4.20px;border-radius:50%;background:radial-gradient(circle,#ffe070 0,#f8a020 55%,#c05808 100%)"></div><div style="position:absolute;left:131.52px;top:15.30px;width:2.40px;height:2.40px;border-radius:50%;background:#ff2020"></div><div style="position:absolute;left:36.04px;top:29.90px;width:6.20px;height:6.20px;border-radius:50%;background:#141210"></div><div style="position:absolute;left:37.04px;top:30.70px;width:4.20px;height:4.20px;border-radius:50%;background:radial-gradient(circle at 45% 40%,#fff,#bbb)"></div><div style="position:absolute;left:90.14px;top:29.90px;width:6.20px;height:6.20px;border-radius:50%;background:#141210"></div><div style="position:absolute;left:91.14px;top:30.70px;width:4.20px;height:4.20px;border-radius:50%;background:radial-gradient(circle at 45% 40%,#fff,#bbb)"></div><div style="position:absolute;left:100.96px;top:29.90px;width:6.20px;height:6.20px;border-radius:50%;background:#141210"></div><div style="position:absolute;left:101.96px;top:30.70px;width:4.20px;height:4.20px;border-radius:50%;background:radial-gradient(circle at 45% 40%,#fff,#bbb)"></div><div style="position:absolute;left:111.78px;top:29.90px;width:6.20px;height:6.20px;border-radius:50%;background:#141210"></div><div style="position:absolute;left:112.78px;top:30.70px;width:4.20px;height:4.20px;border-radius:50%;background:radial-gradient(circle at 45% 40%,#fff,#bbb)"></div><div style="position:absolute;left:122.60px;top:29.90px;width:6.20px;height:6.20px;border-radius:50%;background:#141210"></div><div style="position:absolute;left:123.60px;top:30.70px;width:4.20px;height:4.20px;border-radius:50%;background:radial-gradient(circle at 45% 40%,#fff,#bbb)"></div><div style="position:absolute;left:25.22px;top:41.30px;width:6.20px;height:6.20px;border-radius:50%;background:#141210"></div><div style="position:absolute;left:26.22px;top:42.10px;width:4.20px;height:4.20px;border-radius:50%;background:radial-gradient(circle at 45% 40%,#fff,#bbb)"></div><div style="position:absolute;left:36.04px;top:41.30px;width:6.20px;height:6.20px;border-radius:50%;background:#141210"></div><div style="position:absolute;left:37.04px;top:42.10px;width:4.20px;height:4.20px;border-radius:50%;background:radial-gradient(circle at 45% 40%,#fff,#bbb)"></div><div style="position:absolute;left:122.60px;top:41.30px;width:6.20px;height:6.20px;border-radius:50%;background:#141210"></div><div style="position:absolute;left:123.60px;top:42.10px;width:4.20px;height:4.20px;border-radius:50%;background:radial-gradient(circle at 45% 40%,#fff,#bbb)"></div><div style="position:absolute;left:133.42px;top:41.30px;width:6.20px;height:6.20px;border-radius:50%;background:#141210"></div><div style="position:absolute;left:134.42px;top:42.10px;width:4.20px;height:4.20px;border-radius:50%;background:radial-gradient(circle at 45% 40%,#fff,#bbb)"></div><div style="position:absolute;left:56.18px;top:42.60px;width:9.20px;height:3.40px;background:#ead8b0;border-radius:0.5px"></div><div style="position:absolute;left:59.78px;top:47.00px;width:2.00px;height:2.00px;border-radius:50%;background:#111"></div><div style="position:absolute;left:67.00px;top:42.60px;width:9.20px;height:3.40px;background:#ead8b0;border-radius:0.5px"></div><div style="position:absolute;left:70.60px;top:47.00px;width:2.00px;height:2.00px;border-radius:50%;background:#111"></div><div style="position:absolute;left:77.82px;top:42.60px;width:9.20px;height:3.40px;background:#ead8b0;border-radius:0.5px"></div><div style="position:absolute;left:81.42px;top:47.00px;width:2.00px;height:2.00px;border-radius:50%;background:#111"></div><div style="position:absolute;left:88.64px;top:42.60px;width:9.20px;height:3.40px;background:#ead8b0;border-radius:0.5px"></div><div style="position:absolute;left:92.24px;top:47.00px;width:2.00px;height:2.00px;border-radius:50%;background:#111"></div><div style="position:absolute;left:99.46px;top:42.60px;width:9.20px;height:3.40px;background:#ead8b0;border-radius:0.5px"></div><div style="position:absolute;left:103.06px;top:47.00px;width:2.00px;height:2.00px;border-radius:50%;background:#111"></div><div style="position:absolute;left:12.60px;top:52.00px;width:9.80px;height:3.60px;background:#ead8b0;border-radius:0.5px"></div><div style="position:absolute;left:23.42px;top:52.00px;width:9.80px;height:3.60px;background:#ead8b0;border-radius:0.5px"></div><div style="position:absolute;left:34.24px;top:52.00px;width:9.80px;height:3.60px;background:#ead8b0;border-radius:0.5px"></div><div style="position:absolute;left:45.06px;top:52.00px;width:9.80px;height:3.60px;background:#ead8b0;border-radius:0.5px"></div><div style="position:absolute;left:55.88px;top:52.00px;width:9.80px;height:3.60px;background:#ead8b0;border-radius:0.5px"></div><div style="position:absolute;left:66.70px;top:52.00px;width:9.80px;height:3.60px;background:#ead8b0;border-radius:0.5px"></div><div style="position:absolute;left:77.52px;top:52.00px;width:9.80px;height:3.60px;background:#ead8b0;border-radius:0.5px"></div><div style="position:absolute;left:88.34px;top:52.00px;width:9.80px;height:3.60px;background:#ead8b0;border-radius:0.5px"></div><div style="position:absolute;left:99.16px;top:52.00px;width:9.80px;height:3.60px;background:#ead8b0;border-radius:0.5px"></div><div style="position:absolute;left:109.98px;top:52.00px;width:9.80px;height:3.60px;background:#ead8b0;border-radius:0.5px"></div><div style="position:absolute;left:120.80px;top:52.00px;width:9.80px;height:3.60px;background:#ead8b0;border-radius:0.5px"></div><div style="position:absolute;left:131.62px;top:52.00px;width:9.80px;height:3.60px;background:#ead8b0;border-radius:0.5px"></div><div style="position:absolute;left:147.25px;top:37.09px;width:3.00px;height:2.00px;background:#e0d0a8;border-radius:0.5px"></div><div style="position:absolute;left:143.41px;top:33.25px;width:3.00px;height:2.00px;background:#e0d0a8;border-radius:0.5px"></div><div style="position:absolute;left:142.00px;top:28.00px;width:3.00px;height:2.00px;background:#e0d0a8;border-radius:0.5px"></div><div style="position:absolute;left:143.41px;top:22.75px;width:3.00px;height:2.00px;background:#e0d0a8;border-radius:0.5px"></div><div style="position:absolute;left:147.25px;top:18.91px;width:3.00px;height:2.00px;background:#e0d0a8;border-radius:0.5px"></div><div style="position:absolute;left:152.50px;top:17.50px;width:3.00px;height:2.00px;background:#e0d0a8;border-radius:0.5px"></div><div style="position:absolute;left:157.75px;top:18.91px;width:3.00px;height:2.00px;background:#e0d0a8;border-radius:0.5px"></div><div style="position:absolute;left:161.59px;top:22.75px;width:3.00px;height:2.00px;background:#e0d0a8;border-radius:0.5px"></div><div style="position:absolute;left:163.00px;top:28.00px;width:3.00px;height:2.00px;background:#e0d0a8;border-radius:0.5px"></div><div style="position:absolute;left:161.59px;top:33.25px;width:3.00px;height:2.00px;background:#e0d0a8;border-radius:0.5px"></div><div style="position:absolute;left:157.75px;top:37.09px;width:3.00px;height:2.00px;background:#e0d0a8;border-radius:0.5px"></div><div style="position:absolute;left:146.80px;top:21.80px;width:14.40px;height:14.40px;border-radius:50%;background:radial-gradient(circle at 45% 40%,#333,#0e0e0e);box-shadow:0 0 0 0.8px #444"></div><div style="position:absolute;left:155.20px;top:30.20px;width:1.60px;height:1.60px;border-radius:50%;background:#f07020"></div><div style="position:absolute;left:141.80px;top:43.00px;width:25.80px;height:19.20px;background:#242222;box-shadow:inset 0 0 0 1.3px #2aa0c0"></div><div style="position:absolute;left:144.90px;top:50.40px;width:7.20px;height:7.20px;border-radius:50%;background:#121212;box-shadow:0 0 0 0.6px #555"></div><div style="position:absolute;left:156.40px;top:50.40px;width:7.20px;height:7.20px;border-radius:50%;background:#121212;box-shadow:0 0 0 0.6px #555"></div><div style="position:absolute;left:148.80px;top:51.30px;width:1.40px;height:1.40px;border-radius:50%;background:#f07020"></div><div style="position:absolute;left:160.30px;top:51.30px;width:1.40px;height:1.40px;border-radius:50%;background:#f07020"></div><div style="position:absolute;left:151.70px;top:65.70px;width:2.60px;height:2.60px;border-radius:50%;background:#ff2020"></div><div style="position:absolute;left:149.00px;top:6.00px;width:8.00px;height:6.00px;background:#151515"></div><div style="position:absolute;left:150.50px;top:7.50px;width:5.00px;height:3.00px;background:#444"></div><div style="position:absolute;left:16.70px;top:57.60px;width:9.20px;height:9.20px;border-radius:50%;background:radial-gradient(circle at 45% 40%,#3a3a3a,#0a0a0a)"></div><div style="position:absolute;left:21.80px;top:59.80px;width:1.40px;height:1.40px;border-radius:50%;background:#f07020"></div><div style="position:absolute;left:31px;top:57.5px;font-size:6.8px;color:#d05a2a;line-height:1;white-space:nowrap;will-change:transform;font-style:italic;transform:scaleX(-1)">Rhythm Composer</div><div style="position:absolute;left:29.00px;top:64.50px;width:106.00px;height:0.70px;background:#b04820"></div><div style="position:absolute;left:47px;top:66px;font-size:3px;color:#777;line-height:1;white-space:nowrap;will-change:transform;transform:scaleX(-1)">Computer Controlled</div><div style="position:absolute;left:11.50px;top:71.80px;width:117.00px;height:12.00px;background:#3a3a3a"></div><div style="position:absolute;left:12.00px;top:72.30px;width:116.00px;height:2.30px;background:linear-gradient(#8a8a8a,#6a6a6a)"></div><div style="position:absolute;left:12.00px;top:75.30px;width:116.00px;height:2.30px;background:linear-gradient(#8a8a8a,#6a6a6a)"></div><div style="position:absolute;left:12.00px;top:78.30px;width:116.00px;height:2.30px;background:linear-gradient(#8a8a8a,#6a6a6a)"></div><div style="position:absolute;left:12.00px;top:81.30px;width:116.00px;height:2.30px;background:linear-gradient(#8a8a8a,#6a6a6a)"></div><div style="position:absolute;left:40.00px;top:72.00px;width:0.70px;height:11.50px;background:#222"></div><div style="position:absolute;left:62.00px;top:72.00px;width:0.70px;height:11.50px;background:#222"></div><div style="position:absolute;left:90.00px;top:72.00px;width:0.70px;height:11.50px;background:#222"></div><div style="position:absolute;left:129.00px;top:71.50px;width:8.50px;height:11.00px;background:#1e1e1e"></div><div style="position:absolute;left:131.00px;top:73.00px;width:4.00px;height:8.00px;background:#0e0e0e"></div><div style="position:absolute;left:129.00px;top:83.00px;width:8.50px;height:12.00px;background:#1e1e1e"></div><div style="position:absolute;left:131.00px;top:86.00px;width:4.00px;height:8.00px;background:#0e0e0e"></div><div style="position:absolute;left:12.50px;top:86.70px;width:6.00px;height:10.30px;background:linear-gradient(#f4e6d4,#f4e6d4 60%,rgba(0,0,0,0.25)),#f4e6d4;border-radius:0.6px"></div><div style="position:absolute;left:14.70px;top:87.20px;width:1.60px;height:1.60px;border-radius:50%;background:#c02010"></div><div style="position:absolute;left:19.88px;top:86.70px;width:6.00px;height:10.30px;background:linear-gradient(#f4e6d4,#f4e6d4 60%,rgba(0,0,0,0.25)),#f4e6d4;border-radius:0.6px"></div><div style="position:absolute;left:22.08px;top:87.20px;width:1.60px;height:1.60px;border-radius:50%;background:#c02010"></div><div style="position:absolute;left:27.26px;top:86.70px;width:6.00px;height:10.30px;background:linear-gradient(#f4e6d4,#f4e6d4 60%,rgba(0,0,0,0.25)),#f4e6d4;border-radius:0.6px"></div><div style="position:absolute;left:29.46px;top:87.20px;width:1.60px;height:1.60px;border-radius:50%;background:#c02010"></div><div style="position:absolute;left:34.64px;top:86.70px;width:6.00px;height:10.30px;background:linear-gradient(#f4e6d4,#f4e6d4 60%,rgba(0,0,0,0.25)),#f4e6d4;border-radius:0.6px"></div><div style="position:absolute;left:36.84px;top:87.20px;width:1.60px;height:1.60px;border-radius:50%;background:#c02010"></div><div style="position:absolute;left:42.02px;top:86.70px;width:6.00px;height:10.30px;background:linear-gradient(#fce040,#fce040 60%,rgba(0,0,0,0.25)),#fce040;border-radius:0.6px"></div><div style="position:absolute;left:44.22px;top:87.20px;width:1.60px;height:1.60px;border-radius:50%;background:#c02010"></div><div style="position:absolute;left:49.40px;top:86.70px;width:6.00px;height:10.30px;background:linear-gradient(#fce040,#fce040 60%,rgba(0,0,0,0.25)),#fce040;border-radius:0.6px"></div><div style="position:absolute;left:51.60px;top:87.20px;width:1.60px;height:1.60px;border-radius:50%;background:#c02010"></div><div style="position:absolute;left:56.78px;top:86.70px;width:6.00px;height:10.30px;background:linear-gradient(#fce040,#fce040 60%,rgba(0,0,0,0.25)),#fce040;border-radius:0.6px"></div><div style="position:absolute;left:58.98px;top:87.20px;width:1.60px;height:1.60px;border-radius:50%;background:#c02010"></div><div style="position:absolute;left:64.16px;top:86.70px;width:6.00px;height:10.30px;background:linear-gradient(#fce040,#fce040 60%,rgba(0,0,0,0.25)),#fce040;border-radius:0.6px"></div><div style="position:absolute;left:66.36px;top:87.20px;width:1.60px;height:1.60px;border-radius:50%;background:#c02010"></div><div style="position:absolute;left:71.54px;top:86.70px;width:6.00px;height:10.30px;background:linear-gradient(#ff8a2a,#ff8a2a 60%,rgba(0,0,0,0.25)),#ff8a2a;border-radius:0.6px"></div><div style="position:absolute;left:73.74px;top:87.20px;width:1.60px;height:1.60px;border-radius:50%;background:#c02010"></div><div style="position:absolute;left:78.92px;top:86.70px;width:6.00px;height:10.30px;background:linear-gradient(#ff8a2a,#ff8a2a 60%,rgba(0,0,0,0.25)),#ff8a2a;border-radius:0.6px"></div><div style="position:absolute;left:81.12px;top:87.20px;width:1.60px;height:1.60px;border-radius:50%;background:#c02010"></div><div style="position:absolute;left:86.30px;top:86.70px;width:6.00px;height:10.30px;background:linear-gradient(#ff8a2a,#ff8a2a 60%,rgba(0,0,0,0.25)),#ff8a2a;border-radius:0.6px"></div><div style="position:absolute;left:88.50px;top:87.20px;width:1.60px;height:1.60px;border-radius:50%;background:#c02010"></div><div style="position:absolute;left:93.68px;top:86.70px;width:6.00px;height:10.30px;background:linear-gradient(#ff8a2a,#ff8a2a 60%,rgba(0,0,0,0.25)),#ff8a2a;border-radius:0.6px"></div><div style="position:absolute;left:95.88px;top:87.20px;width:1.60px;height:1.60px;border-radius:50%;background:#c02010"></div><div style="position:absolute;left:101.06px;top:86.70px;width:6.00px;height:10.30px;background:linear-gradient(#ff6a1c,#ff6a1c 60%,rgba(0,0,0,0.25)),#ff6a1c;border-radius:0.6px"></div><div style="position:absolute;left:103.26px;top:87.20px;width:1.60px;height:1.60px;border-radius:50%;background:#c02010"></div><div style="position:absolute;left:108.44px;top:86.70px;width:6.00px;height:10.30px;background:linear-gradient(#ff6a1c,#ff6a1c 60%,rgba(0,0,0,0.25)),#ff6a1c;border-radius:0.6px"></div><div style="position:absolute;left:110.64px;top:87.20px;width:1.60px;height:1.60px;border-radius:50%;background:#c02010"></div><div style="position:absolute;left:115.82px;top:86.70px;width:6.00px;height:10.30px;background:linear-gradient(#ff6a1c,#ff6a1c 60%,rgba(0,0,0,0.25)),#ff6a1c;border-radius:0.6px"></div><div style="position:absolute;left:118.02px;top:87.20px;width:1.60px;height:1.60px;border-radius:50%;background:#c02010"></div><div style="position:absolute;left:123.20px;top:86.70px;width:6.00px;height:10.30px;background:linear-gradient(#ff6a1c,#ff6a1c 60%,rgba(0,0,0,0.25)),#ff6a1c;border-radius:0.6px"></div><div style="position:absolute;left:125.40px;top:87.20px;width:1.60px;height:1.60px;border-radius:50%;background:#c02010"></div><div style="position:absolute;left:141.20px;top:71.40px;width:23.50px;height:25.40px;background:linear-gradient(#8c8c8c,#6e6e6e);box-shadow:inset 0 0 0 0.8px #9a9a9a"></div><div style="position:absolute;left:151.50px;top:75.50px;width:9.00px;height:6.50px;background:#d81818"></div><div style="position:absolute;left:145.00px;top:76.50px;width:3.00px;height:5.00px;background:#1a1a1a"></div><div style="position:absolute;left:145.00px;top:85.50px;width:16.50px;height:7.50px;background:#f4dca0;box-shadow:inset 0 0 0 1px #a08060"></div><div style="position:absolute;left:26.00px;top:99.50px;width:2.00px;height:2.00px;border-radius:50%;background:#999"></div><div style="position:absolute;left:87.00px;top:99.50px;width:2.00px;height:2.00px;border-radius:50%;background:#999"></div><div style="position:absolute;left:149.00px;top:99.50px;width:2.00px;height:2.00px;border-radius:50%;background:#999"></div></div>
<div style="left:188.7px;top:435.3px;width:176px;height:104.5px;"><div style="position:absolute;left:0.00px;top:0.00px;width:176.00px;height:104.50px;background:linear-gradient(#dcd8d0,#cbc7bf);box-shadow:0 1px 2px #000"></div><div style="position:absolute;left:0.00px;top:98.00px;width:176.00px;height:6.50px;background:linear-gradient(#6a6460,#3a3430)"></div><div style="position:absolute;left:0.00px;top:0.00px;width:176.00px;height:1.00px;background:#eeeae2"></div><div style="position:absolute;left:0.00px;top:0.00px;width:1.20px;height:104.50px;background:#a8a49c"></div><div style="position:absolute;left:174.80px;top:0.00px;width:1.20px;height:104.50px;background:#a8a49c"></div><div style="position:absolute;left:17.00px;top:3.50px;width:19.00px;height:12.50px;background:#1e1e1e;border-radius:2px;clip-path:polygon(0 30%,35% 0,100% 30%,95% 100%,60% 80%,5% 85%)"></div><svg style="position:absolute;left:15px;top:17px" width="17" height="13" viewBox="0 0 20 18"><path d="M10 17 C3 11 0 8 0 4.8 C0 2 2.2 0 5 0 C7 0 8.8 1.2 10 3 C11.2 1.2 13 0 15 0 C17.8 0 20 2 20 4.8 C20 8 17 11 10 17Z" fill="#f04a2a" stroke="#bde" stroke-width="0.8"/><path d="M8 6 L12 6 L10 8.5Z" fill="#fff"/><rect x="7" y="10" width="6" height="2" fill="#fff" opacity="0.8"/></svg><div style="position:absolute;left:113.5px;top:22.5px;font-size:5px;color:#3a3a3a;line-height:1;white-space:nowrap;will-change:transform;letter-spacing:0.2px;transform:scaleX(-1)">RHYTHM COMPOSER</div><div style="position:absolute;left:12.00px;top:29.20px;width:152.00px;height:2.00px;background:#34383a"></div><div style="position:absolute;left:12.00px;top:31.20px;width:152.00px;height:29.00px;background:linear-gradient(#d6d2ca,#c8c4bc)"></div><div style="position:absolute;left:24.10px;top:31.20px;width:0.60px;height:29.00px;background:#a8a49c"></div><div style="position:absolute;left:15.00px;top:29.60px;width:6.70px;height:1.20px;background:#d05030"></div><div style="position:absolute;left:15.60px;top:49.00px;width:5.20px;height:5.20px;border-radius:50%;background:radial-gradient(circle at 45% 40%,#555,#1a1a1a);box-shadow:0 0.5px 0.8px #000"></div><div style="position:absolute;left:18.80px;top:50.40px;width:1.20px;height:1.20px;border-radius:50%;background:#e06030"></div><div style="position:absolute;left:41.50px;top:31.20px;width:0.60px;height:29.00px;background:#a8a49c"></div><div style="position:absolute;left:27.70px;top:29.60px;width:11.40px;height:1.20px;background:#d05030"></div><div style="position:absolute;left:28.00px;top:35.50px;width:3.00px;height:2.60px;background:#e8e4dc;box-shadow:0 0 0 0.5px #888"></div><div style="position:absolute;left:27.00px;top:41.30px;width:5.20px;height:5.20px;border-radius:50%;background:radial-gradient(circle at 45% 40%,#555,#1a1a1a);box-shadow:0 0.5px 0.8px #000"></div><div style="position:absolute;left:30.20px;top:42.70px;width:1.20px;height:1.20px;border-radius:50%;background:#e06030"></div><div style="position:absolute;left:34.70px;top:41.30px;width:5.20px;height:5.20px;border-radius:50%;background:radial-gradient(circle at 45% 40%,#555,#1a1a1a);box-shadow:0 0.5px 0.8px #000"></div><div style="position:absolute;left:37.90px;top:42.70px;width:1.20px;height:1.20px;border-radius:50%;background:#e06030"></div><div style="position:absolute;left:27.00px;top:49.00px;width:5.20px;height:5.20px;border-radius:50%;background:radial-gradient(circle at 45% 40%,#555,#1a1a1a);box-shadow:0 0.5px 0.8px #000"></div><div style="position:absolute;left:30.20px;top:50.40px;width:1.20px;height:1.20px;border-radius:50%;background:#e06030"></div><div style="position:absolute;left:34.70px;top:49.00px;width:5.20px;height:5.20px;border-radius:50%;background:radial-gradient(circle at 45% 40%,#555,#1a1a1a);box-shadow:0 0.5px 0.8px #000"></div><div style="position:absolute;left:37.90px;top:50.40px;width:1.20px;height:1.20px;border-radius:50%;background:#e06030"></div><div style="position:absolute;left:58.90px;top:31.20px;width:0.60px;height:29.00px;background:#a8a49c"></div><div style="position:absolute;left:45.10px;top:29.60px;width:11.40px;height:1.20px;background:#d05030"></div><div style="position:absolute;left:45.40px;top:35.50px;width:3.00px;height:2.60px;background:#e8e4dc;box-shadow:0 0 0 0.5px #888"></div><div style="position:absolute;left:44.40px;top:41.30px;width:5.20px;height:5.20px;border-radius:50%;background:radial-gradient(circle at 45% 40%,#555,#1a1a1a);box-shadow:0 0.5px 0.8px #000"></div><div style="position:absolute;left:47.60px;top:42.70px;width:1.20px;height:1.20px;border-radius:50%;background:#e06030"></div><div style="position:absolute;left:52.10px;top:41.30px;width:5.20px;height:5.20px;border-radius:50%;background:radial-gradient(circle at 45% 40%,#555,#1a1a1a);box-shadow:0 0.5px 0.8px #000"></div><div style="position:absolute;left:55.30px;top:42.70px;width:1.20px;height:1.20px;border-radius:50%;background:#e06030"></div><div style="position:absolute;left:44.40px;top:49.00px;width:5.20px;height:5.20px;border-radius:50%;background:radial-gradient(circle at 45% 40%,#555,#1a1a1a);box-shadow:0 0.5px 0.8px #000"></div><div style="position:absolute;left:47.60px;top:50.40px;width:1.20px;height:1.20px;border-radius:50%;background:#e06030"></div><div style="position:absolute;left:52.10px;top:49.00px;width:5.20px;height:5.20px;border-radius:50%;background:radial-gradient(circle at 45% 40%,#555,#1a1a1a);box-shadow:0 0.5px 0.8px #000"></div><div style="position:absolute;left:55.30px;top:50.40px;width:1.20px;height:1.20px;border-radius:50%;background:#e06030"></div><div style="position:absolute;left:76.30px;top:31.20px;width:0.60px;height:29.00px;background:#a8a49c"></div><div style="position:absolute;left:62.50px;top:29.60px;width:11.40px;height:1.20px;background:#d05030"></div><div style="position:absolute;left:62.80px;top:35.50px;width:3.00px;height:2.60px;background:#e8e4dc;box-shadow:0 0 0 0.5px #888"></div><div style="position:absolute;left:61.80px;top:41.30px;width:5.20px;height:5.20px;border-radius:50%;background:radial-gradient(circle at 45% 40%,#555,#1a1a1a);box-shadow:0 0.5px 0.8px #000"></div><div style="position:absolute;left:65.00px;top:42.70px;width:1.20px;height:1.20px;border-radius:50%;background:#e06030"></div><div style="position:absolute;left:69.50px;top:41.30px;width:5.20px;height:5.20px;border-radius:50%;background:radial-gradient(circle at 45% 40%,#555,#1a1a1a);box-shadow:0 0.5px 0.8px #000"></div><div style="position:absolute;left:72.70px;top:42.70px;width:1.20px;height:1.20px;border-radius:50%;background:#e06030"></div><div style="position:absolute;left:61.80px;top:49.00px;width:5.20px;height:5.20px;border-radius:50%;background:radial-gradient(circle at 45% 40%,#555,#1a1a1a);box-shadow:0 0.5px 0.8px #000"></div><div style="position:absolute;left:65.00px;top:50.40px;width:1.20px;height:1.20px;border-radius:50%;background:#e06030"></div><div style="position:absolute;left:93.70px;top:31.20px;width:0.60px;height:29.00px;background:#a8a49c"></div><div style="position:absolute;left:79.90px;top:29.60px;width:11.40px;height:1.20px;background:#d05030"></div><div style="position:absolute;left:80.20px;top:35.50px;width:3.00px;height:2.60px;background:#e8e4dc;box-shadow:0 0 0 0.5px #888"></div><div style="position:absolute;left:79.20px;top:41.30px;width:5.20px;height:5.20px;border-radius:50%;background:radial-gradient(circle at 45% 40%,#555,#1a1a1a);box-shadow:0 0.5px 0.8px #000"></div><div style="position:absolute;left:82.40px;top:42.70px;width:1.20px;height:1.20px;border-radius:50%;background:#e06030"></div><div style="position:absolute;left:86.90px;top:41.30px;width:5.20px;height:5.20px;border-radius:50%;background:radial-gradient(circle at 45% 40%,#555,#1a1a1a);box-shadow:0 0.5px 0.8px #000"></div><div style="position:absolute;left:90.10px;top:42.70px;width:1.20px;height:1.20px;border-radius:50%;background:#e06030"></div><div style="position:absolute;left:79.20px;top:49.00px;width:5.20px;height:5.20px;border-radius:50%;background:radial-gradient(circle at 45% 40%,#555,#1a1a1a);box-shadow:0 0.5px 0.8px #000"></div><div style="position:absolute;left:82.40px;top:50.40px;width:1.20px;height:1.20px;border-radius:50%;background:#e06030"></div><div style="position:absolute;left:111.10px;top:31.20px;width:0.60px;height:29.00px;background:#a8a49c"></div><div style="position:absolute;left:97.30px;top:29.60px;width:11.40px;height:1.20px;background:#d05030"></div><div style="position:absolute;left:97.60px;top:35.50px;width:3.00px;height:2.60px;background:#e8e4dc;box-shadow:0 0 0 0.5px #888"></div><div style="position:absolute;left:96.60px;top:41.30px;width:5.20px;height:5.20px;border-radius:50%;background:radial-gradient(circle at 45% 40%,#555,#1a1a1a);box-shadow:0 0.5px 0.8px #000"></div><div style="position:absolute;left:99.80px;top:42.70px;width:1.20px;height:1.20px;border-radius:50%;background:#e06030"></div><div style="position:absolute;left:104.30px;top:41.30px;width:5.20px;height:5.20px;border-radius:50%;background:radial-gradient(circle at 45% 40%,#555,#1a1a1a);box-shadow:0 0.5px 0.8px #000"></div><div style="position:absolute;left:107.50px;top:42.70px;width:1.20px;height:1.20px;border-radius:50%;background:#e06030"></div><div style="position:absolute;left:96.60px;top:49.00px;width:5.20px;height:5.20px;border-radius:50%;background:radial-gradient(circle at 45% 40%,#555,#1a1a1a);box-shadow:0 0.5px 0.8px #000"></div><div style="position:absolute;left:99.80px;top:50.40px;width:1.20px;height:1.20px;border-radius:50%;background:#e06030"></div><div style="position:absolute;left:128.50px;top:31.20px;width:0.60px;height:29.00px;background:#a8a49c"></div><div style="position:absolute;left:114.70px;top:29.60px;width:11.40px;height:1.20px;background:#d05030"></div><div style="position:absolute;left:115.00px;top:35.50px;width:3.00px;height:2.60px;background:#e8e4dc;box-shadow:0 0 0 0.5px #888"></div><div style="position:absolute;left:122.70px;top:35.50px;width:3.00px;height:2.60px;background:#e85030;box-shadow:0 0 0 0.5px #888"></div><div style="position:absolute;left:114.00px;top:41.30px;width:5.20px;height:5.20px;border-radius:50%;background:radial-gradient(circle at 45% 40%,#555,#1a1a1a);box-shadow:0 0.5px 0.8px #000"></div><div style="position:absolute;left:117.20px;top:42.70px;width:1.20px;height:1.20px;border-radius:50%;background:#e06030"></div><div style="position:absolute;left:121.70px;top:41.30px;width:5.20px;height:5.20px;border-radius:50%;background:radial-gradient(circle at 45% 40%,#555,#1a1a1a);box-shadow:0 0.5px 0.8px #000"></div><div style="position:absolute;left:124.90px;top:42.70px;width:1.20px;height:1.20px;border-radius:50%;background:#e06030"></div><div style="position:absolute;left:145.90px;top:31.20px;width:0.60px;height:29.00px;background:#a8a49c"></div><div style="position:absolute;left:132.10px;top:29.60px;width:11.40px;height:1.20px;background:#d05030"></div><div style="position:absolute;left:132.40px;top:35.50px;width:3.00px;height:2.60px;background:#e8e4dc;box-shadow:0 0 0 0.5px #888"></div><div style="position:absolute;left:140.10px;top:35.50px;width:3.00px;height:2.60px;background:#e8e4dc;box-shadow:0 0 0 0.5px #888"></div><div style="position:absolute;left:139.10px;top:41.30px;width:5.20px;height:5.20px;border-radius:50%;background:radial-gradient(circle at 45% 40%,#555,#1a1a1a);box-shadow:0 0.5px 0.8px #000"></div><div style="position:absolute;left:142.30px;top:42.70px;width:1.20px;height:1.20px;border-radius:50%;background:#e06030"></div><div style="position:absolute;left:131.40px;top:49.00px;width:5.20px;height:5.20px;border-radius:50%;background:radial-gradient(circle at 45% 40%,#555,#1a1a1a);box-shadow:0 0.5px 0.8px #000"></div><div style="position:absolute;left:134.60px;top:50.40px;width:1.20px;height:1.20px;border-radius:50%;background:#e06030"></div><div style="position:absolute;left:139.10px;top:49.00px;width:5.20px;height:5.20px;border-radius:50%;background:radial-gradient(circle at 45% 40%,#555,#1a1a1a);box-shadow:0 0.5px 0.8px #000"></div><div style="position:absolute;left:142.30px;top:50.40px;width:1.20px;height:1.20px;border-radius:50%;background:#e06030"></div><div style="position:absolute;left:163.30px;top:31.20px;width:0.60px;height:29.00px;background:#a8a49c"></div><div style="position:absolute;left:149.50px;top:29.60px;width:11.40px;height:1.20px;background:#d05030"></div><div style="position:absolute;left:149.80px;top:35.50px;width:3.00px;height:2.60px;background:#e8e4dc;box-shadow:0 0 0 0.5px #888"></div><div style="position:absolute;left:157.50px;top:35.50px;width:3.00px;height:2.60px;background:#e8e4dc;box-shadow:0 0 0 0.5px #888"></div><div style="position:absolute;left:148.80px;top:41.30px;width:5.20px;height:5.20px;border-radius:50%;background:radial-gradient(circle at 45% 40%,#555,#1a1a1a);box-shadow:0 0.5px 0.8px #000"></div><div style="position:absolute;left:152.00px;top:42.70px;width:1.20px;height:1.20px;border-radius:50%;background:#e06030"></div><div style="position:absolute;left:156.50px;top:41.30px;width:5.20px;height:5.20px;border-radius:50%;background:radial-gradient(circle at 45% 40%,#555,#1a1a1a);box-shadow:0 0.5px 0.8px #000"></div><div style="position:absolute;left:159.70px;top:42.70px;width:1.20px;height:1.20px;border-radius:50%;background:#e06030"></div><div style="position:absolute;left:148.80px;top:49.00px;width:5.20px;height:5.20px;border-radius:50%;background:radial-gradient(circle at 45% 40%,#555,#1a1a1a);box-shadow:0 0.5px 0.8px #000"></div><div style="position:absolute;left:152.00px;top:50.40px;width:1.20px;height:1.20px;border-radius:50%;background:#e06030"></div><div style="position:absolute;left:156.50px;top:49.00px;width:5.20px;height:5.20px;border-radius:50%;background:radial-gradient(circle at 45% 40%,#555,#1a1a1a);box-shadow:0 0.5px 0.8px #000"></div><div style="position:absolute;left:159.70px;top:50.40px;width:1.20px;height:1.20px;border-radius:50%;background:#e06030"></div><div style="position:absolute;left:24.30px;top:62.60px;width:10.00px;height:6.80px;background:#b81818;box-shadow:inset 0 0 0 0.6px #400"></div><div style="position:absolute;left:26.00px;top:64.00px;width:5.00px;height:4.00px;background:#ff4a2a;opacity:0.7"></div><div style="position:absolute;left:35.50px;top:62.60px;width:3.50px;height:3.80px;background:#e8e4dc;box-shadow:0 0 0 0.5px #888"></div><div style="position:absolute;left:40.00px;top:62.60px;width:3.50px;height:3.80px;background:#e8e4dc;box-shadow:0 0 0 0.5px #888"></div><div style="position:absolute;left:36.30px;top:68.00px;width:8.00px;height:2.20px;background:#f05a20"></div><div style="position:absolute;left:50.50px;top:62.60px;width:3.00px;height:3.80px;background:#e85030"></div><div style="position:absolute;left:55.00px;top:62.60px;width:3.50px;height:3.80px;background:#e8e4dc;box-shadow:0 0 0 0.5px #888"></div><div style="position:absolute;left:59.50px;top:62.60px;width:3.50px;height:3.80px;background:#e8e4dc;box-shadow:0 0 0 0.5px #888"></div><div style="position:absolute;left:64.00px;top:62.60px;width:3.50px;height:3.80px;background:#e8e4dc;box-shadow:0 0 0 0.5px #888"></div><div style="position:absolute;left:49.30px;top:68.00px;width:16.70px;height:2.20px;background:#f05a20"></div><div style="position:absolute;left:70.30px;top:57.90px;width:52.00px;height:13.50px;box-shadow:inset 0 0 0 1.2px #40c8e0"></div><div style="position:absolute;left:71.00px;top:58.60px;width:2.00px;height:2.00px;background:#111"></div><div style="position:absolute;left:72.50px;top:61.50px;width:3.30px;height:3.30px;background:#e85030;box-shadow:0 0 0 0.5px #888"></div><div style="position:absolute;left:76.95px;top:61.50px;width:3.30px;height:3.30px;background:#e8e4dc;box-shadow:0 0 0 0.5px #888"></div><div style="position:absolute;left:81.40px;top:61.50px;width:3.30px;height:3.30px;background:#e8e4dc;box-shadow:0 0 0 0.5px #888"></div><div style="position:absolute;left:85.85px;top:61.50px;width:3.30px;height:3.30px;background:#e8e4dc;box-shadow:0 0 0 0.5px #888"></div><div style="position:absolute;left:90.30px;top:61.50px;width:3.30px;height:3.30px;background:#e8e4dc;box-shadow:0 0 0 0.5px #888"></div><div style="position:absolute;left:94.75px;top:61.50px;width:3.30px;height:3.30px;background:#e8e4dc;box-shadow:0 0 0 0.5px #888"></div><div style="position:absolute;left:99.20px;top:61.50px;width:3.30px;height:3.30px;background:#e8e4dc;box-shadow:0 0 0 0.5px #888"></div><div style="position:absolute;left:103.65px;top:61.50px;width:3.30px;height:3.30px;background:#e8e4dc;box-shadow:0 0 0 0.5px #888"></div><div style="position:absolute;left:108.10px;top:61.50px;width:3.30px;height:3.30px;background:#e85030;box-shadow:0 0 0 0.5px #888"></div><div style="position:absolute;left:112.55px;top:61.50px;width:3.30px;height:3.30px;background:#e8e4dc;box-shadow:0 0 0 0.5px #888"></div><div style="position:absolute;left:117.00px;top:61.50px;width:3.30px;height:3.30px;background:#e8e4dc;box-shadow:0 0 0 0.5px #888"></div><div style="position:absolute;left:72.00px;top:67.80px;width:48.50px;height:2.20px;background:#f05a20"></div><div style="position:absolute;left:152.40px;top:60.20px;width:9.00px;height:9.00px;border-radius:50%;background:radial-gradient(circle at 45% 40%,#666,#222)"></div><div style="position:absolute;left:157.70px;top:61.70px;width:1.60px;height:1.60px;border-radius:50%;background:#e06030"></div><div style="position:absolute;left:11.50px;top:72.40px;width:153.00px;height:25.00px;background:#cfcbc3;box-shadow:inset 0 0 0 0.5px #aaa"></div><div style="position:absolute;left:12.00px;top:72.40px;width:11.00px;height:22.40px;box-shadow:inset 0 0 0 0.5px #aaa"></div><div style="position:absolute;left:15.00px;top:75.00px;width:4.50px;height:3.50px;background:#d8d4cc;box-shadow:0 0 0 0.5px #888"></div><div style="position:absolute;left:15.00px;top:81.00px;width:4.50px;height:3.50px;background:#d8d4cc;box-shadow:0 0 0 0.5px #888"></div><div style="position:absolute;left:15.00px;top:87.00px;width:4.50px;height:3.50px;background:#d8d4cc;box-shadow:0 0 0 0.5px #888"></div><div style="position:absolute;left:25.00px;top:73.20px;width:139.00px;height:1.60px;background:#3a3e42"></div><div style="position:absolute;left:25.00px;top:75.80px;width:139.00px;height:1.60px;background:#50565a"></div><div style="position:absolute;left:25.00px;top:78.40px;width:139.00px;height:1.60px;background:#3a3e42"></div><div style="position:absolute;left:25.00px;top:81.00px;width:139.00px;height:1.60px;background:#50565a"></div><div style="position:absolute;left:62.00px;top:72.80px;width:0.60px;height:10.00px;background:#555"></div><div style="position:absolute;left:100.00px;top:72.80px;width:0.60px;height:10.00px;background:#555"></div><div style="position:absolute;left:131.00px;top:72.80px;width:0.60px;height:10.00px;background:#555"></div><div style="position:absolute;left:25.00px;top:81.00px;width:2.00px;height:1.60px;background:#e02020"></div><div style="position:absolute;left:25.40px;top:85.80px;width:7.00px;height:7.30px;background:linear-gradient(#f0ece4,#c0bcb4);box-shadow:0 0 0 0.6px #555,0 1px 0 #666"></div><div style="position:absolute;left:27.90px;top:87.00px;width:2.00px;height:1.00px;background:#333"></div><div style="position:absolute;left:34.17px;top:85.80px;width:7.00px;height:7.30px;background:linear-gradient(#f0ece4,#c0bcb4);box-shadow:0 0 0 0.6px #555,0 1px 0 #666"></div><div style="position:absolute;left:36.67px;top:87.00px;width:2.00px;height:1.00px;background:#333"></div><div style="position:absolute;left:42.94px;top:85.80px;width:7.00px;height:7.30px;background:linear-gradient(#f0ece4,#c0bcb4);box-shadow:0 0 0 0.6px #555,0 1px 0 #666"></div><div style="position:absolute;left:45.44px;top:87.00px;width:2.00px;height:1.00px;background:#333"></div><div style="position:absolute;left:51.71px;top:85.80px;width:7.00px;height:7.30px;background:linear-gradient(#f0ece4,#c0bcb4);box-shadow:0 0 0 0.6px #555,0 1px 0 #666"></div><div style="position:absolute;left:54.21px;top:87.00px;width:2.00px;height:1.00px;background:#333"></div><div style="position:absolute;left:60.48px;top:85.80px;width:7.00px;height:7.30px;background:linear-gradient(#f0ece4,#c0bcb4);box-shadow:0 0 0 0.6px #555,0 1px 0 #666"></div><div style="position:absolute;left:62.98px;top:87.00px;width:2.00px;height:1.00px;background:#333"></div><div style="position:absolute;left:69.25px;top:85.80px;width:7.00px;height:7.30px;background:linear-gradient(#f0ece4,#c0bcb4);box-shadow:0 0 0 0.6px #555,0 1px 0 #666"></div><div style="position:absolute;left:71.75px;top:87.00px;width:2.00px;height:1.00px;background:#333"></div><div style="position:absolute;left:78.02px;top:85.80px;width:7.00px;height:7.30px;background:linear-gradient(#f0ece4,#c0bcb4);box-shadow:0 0 0 0.6px #555,0 1px 0 #666"></div><div style="position:absolute;left:80.52px;top:87.00px;width:2.00px;height:1.00px;background:#333"></div><div style="position:absolute;left:86.79px;top:85.80px;width:7.00px;height:7.30px;background:linear-gradient(#f0ece4,#c0bcb4);box-shadow:0 0 0 0.6px #555,0 1px 0 #666"></div><div style="position:absolute;left:89.29px;top:87.00px;width:2.00px;height:1.00px;background:#333"></div><div style="position:absolute;left:95.56px;top:85.80px;width:7.00px;height:7.30px;background:linear-gradient(#f0ece4,#c0bcb4);box-shadow:0 0 0 0.6px #555,0 1px 0 #666"></div><div style="position:absolute;left:98.06px;top:87.00px;width:2.00px;height:1.00px;background:#333"></div><div style="position:absolute;left:104.33px;top:85.80px;width:7.00px;height:7.30px;background:linear-gradient(#f0ece4,#c0bcb4);box-shadow:0 0 0 0.6px #555,0 1px 0 #666"></div><div style="position:absolute;left:106.83px;top:87.00px;width:2.00px;height:1.00px;background:#333"></div><div style="position:absolute;left:113.10px;top:85.80px;width:7.00px;height:7.30px;background:linear-gradient(#f0ece4,#c0bcb4);box-shadow:0 0 0 0.6px #555,0 1px 0 #666"></div><div style="position:absolute;left:115.60px;top:87.00px;width:2.00px;height:1.00px;background:#333"></div><div style="position:absolute;left:121.87px;top:85.80px;width:7.00px;height:7.30px;background:linear-gradient(#f0ece4,#c0bcb4);box-shadow:0 0 0 0.6px #555,0 1px 0 #666"></div><div style="position:absolute;left:124.37px;top:87.00px;width:2.00px;height:1.00px;background:#333"></div><div style="position:absolute;left:130.64px;top:85.80px;width:7.00px;height:7.30px;background:linear-gradient(#f0ece4,#c0bcb4);box-shadow:0 0 0 0.6px #555,0 1px 0 #666"></div><div style="position:absolute;left:133.14px;top:87.00px;width:2.00px;height:1.00px;background:#333"></div><div style="position:absolute;left:139.41px;top:85.80px;width:7.00px;height:7.30px;background:linear-gradient(#f0ece4,#c0bcb4);box-shadow:0 0 0 0.6px #555,0 1px 0 #666"></div><div style="position:absolute;left:141.91px;top:87.00px;width:2.00px;height:1.00px;background:#333"></div><div style="position:absolute;left:148.18px;top:85.80px;width:7.00px;height:7.30px;background:linear-gradient(#f0ece4,#c0bcb4);box-shadow:0 0 0 0.6px #555,0 1px 0 #666"></div><div style="position:absolute;left:150.68px;top:87.00px;width:2.00px;height:1.00px;background:#333"></div><div style="position:absolute;left:156.95px;top:85.80px;width:7.00px;height:7.30px;background:linear-gradient(#f0ece4,#c0bcb4);box-shadow:0 0 0 0.6px #555,0 1px 0 #666"></div><div style="position:absolute;left:159.45px;top:87.00px;width:2.00px;height:1.00px;background:#333"></div><div style="position:absolute;left:53.91px;top:86.80px;width:2.60px;height:1.50px;background:#e85020"></div></div>
<div style="left:399.4px;top:507.3px;width:176px;height:104.5px;transform-origin:0 0;transform:translateX(176px) scaleX(-1);"><div style="position:absolute;left:0.00px;top:0.00px;width:176.00px;height:104.50px;background:linear-gradient(#dcd8d0,#cbc7bf);box-shadow:0 1px 2px #000"></div><div style="position:absolute;left:0.00px;top:98.00px;width:176.00px;height:6.50px;background:linear-gradient(#6a6460,#3a3430)"></div><div style="position:absolute;left:0.00px;top:0.00px;width:176.00px;height:1.00px;background:#eeeae2"></div><div style="position:absolute;left:0.00px;top:0.00px;width:1.20px;height:104.50px;background:#a8a49c"></div><div style="position:absolute;left:174.80px;top:0.00px;width:1.20px;height:104.50px;background:#a8a49c"></div><div style="position:absolute;left:17.00px;top:3.50px;width:19.00px;height:12.50px;background:#1e1e1e;border-radius:2px;clip-path:polygon(0 30%,35% 0,100% 30%,95% 100%,60% 80%,5% 85%)"></div><svg style="position:absolute;left:15px;top:17px" width="17" height="13" viewBox="0 0 20 18"><path d="M10 17 C3 11 0 8 0 4.8 C0 2 2.2 0 5 0 C7 0 8.8 1.2 10 3 C11.2 1.2 13 0 15 0 C17.8 0 20 2 20 4.8 C20 8 17 11 10 17Z" fill="#f04a2a" stroke="#bde" stroke-width="0.8"/><path d="M8 6 L12 6 L10 8.5Z" fill="#fff"/><rect x="7" y="10" width="6" height="2" fill="#fff" opacity="0.8"/></svg><div style="position:absolute;left:113.5px;top:22.5px;font-size:5px;color:#3a3a3a;line-height:1;white-space:nowrap;will-change:transform;letter-spacing:0.2px;">RHYTHM COMPOSER</div><div style="position:absolute;left:12.00px;top:29.20px;width:152.00px;height:2.00px;background:#34383a"></div><div style="position:absolute;left:12.00px;top:31.20px;width:152.00px;height:29.00px;background:linear-gradient(#d6d2ca,#c8c4bc)"></div><div style="position:absolute;left:24.10px;top:31.20px;width:0.60px;height:29.00px;background:#a8a49c"></div><div style="position:absolute;left:15.00px;top:29.60px;width:6.70px;height:1.20px;background:#d05030"></div><div style="position:absolute;left:15.60px;top:49.00px;width:5.20px;height:5.20px;border-radius:50%;background:radial-gradient(circle at 45% 40%,#555,#1a1a1a);box-shadow:0 0.5px 0.8px #000"></div><div style="position:absolute;left:18.80px;top:50.40px;width:1.20px;height:1.20px;border-radius:50%;background:#e06030"></div><div style="position:absolute;left:41.50px;top:31.20px;width:0.60px;height:29.00px;background:#a8a49c"></div><div style="position:absolute;left:27.70px;top:29.60px;width:11.40px;height:1.20px;background:#d05030"></div><div style="position:absolute;left:28.00px;top:35.50px;width:3.00px;height:2.60px;background:#e8e4dc;box-shadow:0 0 0 0.5px #888"></div><div style="position:absolute;left:27.00px;top:41.30px;width:5.20px;height:5.20px;border-radius:50%;background:radial-gradient(circle at 45% 40%,#555,#1a1a1a);box-shadow:0 0.5px 0.8px #000"></div><div style="position:absolute;left:30.20px;top:42.70px;width:1.20px;height:1.20px;border-radius:50%;background:#e06030"></div><div style="position:absolute;left:34.70px;top:41.30px;width:5.20px;height:5.20px;border-radius:50%;background:radial-gradient(circle at 45% 40%,#555,#1a1a1a);box-shadow:0 0.5px 0.8px #000"></div><div style="position:absolute;left:37.90px;top:42.70px;width:1.20px;height:1.20px;border-radius:50%;background:#e06030"></div><div style="position:absolute;left:27.00px;top:49.00px;width:5.20px;height:5.20px;border-radius:50%;background:radial-gradient(circle at 45% 40%,#555,#1a1a1a);box-shadow:0 0.5px 0.8px #000"></div><div style="position:absolute;left:30.20px;top:50.40px;width:1.20px;height:1.20px;border-radius:50%;background:#e06030"></div><div style="position:absolute;left:34.70px;top:49.00px;width:5.20px;height:5.20px;border-radius:50%;background:radial-gradient(circle at 45% 40%,#555,#1a1a1a);box-shadow:0 0.5px 0.8px #000"></div><div style="position:absolute;left:37.90px;top:50.40px;width:1.20px;height:1.20px;border-radius:50%;background:#e06030"></div><div style="position:absolute;left:58.90px;top:31.20px;width:0.60px;height:29.00px;background:#a8a49c"></div><div style="position:absolute;left:45.10px;top:29.60px;width:11.40px;height:1.20px;background:#d05030"></div><div style="position:absolute;left:45.40px;top:35.50px;width:3.00px;height:2.60px;background:#e8e4dc;box-shadow:0 0 0 0.5px #888"></div><div style="position:absolute;left:44.40px;top:41.30px;width:5.20px;height:5.20px;border-radius:50%;background:radial-gradient(circle at 45% 40%,#555,#1a1a1a);box-shadow:0 0.5px 0.8px #000"></div><div style="position:absolute;left:47.60px;top:42.70px;width:1.20px;height:1.20px;border-radius:50%;background:#e06030"></div><div style="position:absolute;left:52.10px;top:41.30px;width:5.20px;height:5.20px;border-radius:50%;background:radial-gradient(circle at 45% 40%,#555,#1a1a1a);box-shadow:0 0.5px 0.8px #000"></div><div style="position:absolute;left:55.30px;top:42.70px;width:1.20px;height:1.20px;border-radius:50%;background:#e06030"></div><div style="position:absolute;left:44.40px;top:49.00px;width:5.20px;height:5.20px;border-radius:50%;background:radial-gradient(circle at 45% 40%,#555,#1a1a1a);box-shadow:0 0.5px 0.8px #000"></div><div style="position:absolute;left:47.60px;top:50.40px;width:1.20px;height:1.20px;border-radius:50%;background:#e06030"></div><div style="position:absolute;left:52.10px;top:49.00px;width:5.20px;height:5.20px;border-radius:50%;background:radial-gradient(circle at 45% 40%,#555,#1a1a1a);box-shadow:0 0.5px 0.8px #000"></div><div style="position:absolute;left:55.30px;top:50.40px;width:1.20px;height:1.20px;border-radius:50%;background:#e06030"></div><div style="position:absolute;left:76.30px;top:31.20px;width:0.60px;height:29.00px;background:#a8a49c"></div><div style="position:absolute;left:62.50px;top:29.60px;width:11.40px;height:1.20px;background:#d05030"></div><div style="position:absolute;left:62.80px;top:35.50px;width:3.00px;height:2.60px;background:#e8e4dc;box-shadow:0 0 0 0.5px #888"></div><div style="position:absolute;left:61.80px;top:41.30px;width:5.20px;height:5.20px;border-radius:50%;background:radial-gradient(circle at 45% 40%,#555,#1a1a1a);box-shadow:0 0.5px 0.8px #000"></div><div style="position:absolute;left:65.00px;top:42.70px;width:1.20px;height:1.20px;border-radius:50%;background:#e06030"></div><div style="position:absolute;left:69.50px;top:41.30px;width:5.20px;height:5.20px;border-radius:50%;background:radial-gradient(circle at 45% 40%,#555,#1a1a1a);box-shadow:0 0.5px 0.8px #000"></div><div style="position:absolute;left:72.70px;top:42.70px;width:1.20px;height:1.20px;border-radius:50%;background:#e06030"></div><div style="position:absolute;left:61.80px;top:49.00px;width:5.20px;height:5.20px;border-radius:50%;background:radial-gradient(circle at 45% 40%,#555,#1a1a1a);box-shadow:0 0.5px 0.8px #000"></div><div style="position:absolute;left:65.00px;top:50.40px;width:1.20px;height:1.20px;border-radius:50%;background:#e06030"></div><div style="position:absolute;left:93.70px;top:31.20px;width:0.60px;height:29.00px;background:#a8a49c"></div><div style="position:absolute;left:79.90px;top:29.60px;width:11.40px;height:1.20px;background:#d05030"></div><div style="position:absolute;left:80.20px;top:35.50px;width:3.00px;height:2.60px;background:#e8e4dc;box-shadow:0 0 0 0.5px #888"></div><div style="position:absolute;left:79.20px;top:41.30px;width:5.20px;height:5.20px;border-radius:50%;background:radial-gradient(circle at 45% 40%,#555,#1a1a1a);box-shadow:0 0.5px 0.8px #000"></div><div style="position:absolute;left:82.40px;top:42.70px;width:1.20px;height:1.20px;border-radius:50%;background:#e06030"></div><div style="position:absolute;left:86.90px;top:41.30px;width:5.20px;height:5.20px;border-radius:50%;background:radial-gradient(circle at 45% 40%,#555,#1a1a1a);box-shadow:0 0.5px 0.8px #000"></div><div style="position:absolute;left:90.10px;top:42.70px;width:1.20px;height:1.20px;border-radius:50%;background:#e06030"></div><div style="position:absolute;left:79.20px;top:49.00px;width:5.20px;height:5.20px;border-radius:50%;background:radial-gradient(circle at 45% 40%,#555,#1a1a1a);box-shadow:0 0.5px 0.8px #000"></div><div style="position:absolute;left:82.40px;top:50.40px;width:1.20px;height:1.20px;border-radius:50%;background:#e06030"></div><div style="position:absolute;left:111.10px;top:31.20px;width:0.60px;height:29.00px;background:#a8a49c"></div><div style="position:absolute;left:97.30px;top:29.60px;width:11.40px;height:1.20px;background:#d05030"></div><div style="position:absolute;left:97.60px;top:35.50px;width:3.00px;height:2.60px;background:#e8e4dc;box-shadow:0 0 0 0.5px #888"></div><div style="position:absolute;left:96.60px;top:41.30px;width:5.20px;height:5.20px;border-radius:50%;background:radial-gradient(circle at 45% 40%,#555,#1a1a1a);box-shadow:0 0.5px 0.8px #000"></div><div style="position:absolute;left:99.80px;top:42.70px;width:1.20px;height:1.20px;border-radius:50%;background:#e06030"></div><div style="position:absolute;left:104.30px;top:41.30px;width:5.20px;height:5.20px;border-radius:50%;background:radial-gradient(circle at 45% 40%,#555,#1a1a1a);box-shadow:0 0.5px 0.8px #000"></div><div style="position:absolute;left:107.50px;top:42.70px;width:1.20px;height:1.20px;border-radius:50%;background:#e06030"></div><div style="position:absolute;left:96.60px;top:49.00px;width:5.20px;height:5.20px;border-radius:50%;background:radial-gradient(circle at 45% 40%,#555,#1a1a1a);box-shadow:0 0.5px 0.8px #000"></div><div style="position:absolute;left:99.80px;top:50.40px;width:1.20px;height:1.20px;border-radius:50%;background:#e06030"></div><div style="position:absolute;left:128.50px;top:31.20px;width:0.60px;height:29.00px;background:#a8a49c"></div><div style="position:absolute;left:114.70px;top:29.60px;width:11.40px;height:1.20px;background:#d05030"></div><div style="position:absolute;left:115.00px;top:35.50px;width:3.00px;height:2.60px;background:#e8e4dc;box-shadow:0 0 0 0.5px #888"></div><div style="position:absolute;left:122.70px;top:35.50px;width:3.00px;height:2.60px;background:#e85030;box-shadow:0 0 0 0.5px #888"></div><div style="position:absolute;left:114.00px;top:41.30px;width:5.20px;height:5.20px;border-radius:50%;background:radial-gradient(circle at 45% 40%,#555,#1a1a1a);box-shadow:0 0.5px 0.8px #000"></div><div style="position:absolute;left:117.20px;top:42.70px;width:1.20px;height:1.20px;border-radius:50%;background:#e06030"></div><div style="position:absolute;left:121.70px;top:41.30px;width:5.20px;height:5.20px;border-radius:50%;background:radial-gradient(circle at 45% 40%,#555,#1a1a1a);box-shadow:0 0.5px 0.8px #000"></div><div style="position:absolute;left:124.90px;top:42.70px;width:1.20px;height:1.20px;border-radius:50%;background:#e06030"></div><div style="position:absolute;left:145.90px;top:31.20px;width:0.60px;height:29.00px;background:#a8a49c"></div><div style="position:absolute;left:132.10px;top:29.60px;width:11.40px;height:1.20px;background:#d05030"></div><div style="position:absolute;left:132.40px;top:35.50px;width:3.00px;height:2.60px;background:#e8e4dc;box-shadow:0 0 0 0.5px #888"></div><div style="position:absolute;left:140.10px;top:35.50px;width:3.00px;height:2.60px;background:#e8e4dc;box-shadow:0 0 0 0.5px #888"></div><div style="position:absolute;left:139.10px;top:41.30px;width:5.20px;height:5.20px;border-radius:50%;background:radial-gradient(circle at 45% 40%,#555,#1a1a1a);box-shadow:0 0.5px 0.8px #000"></div><div style="position:absolute;left:142.30px;top:42.70px;width:1.20px;height:1.20px;border-radius:50%;background:#e06030"></div><div style="position:absolute;left:131.40px;top:49.00px;width:5.20px;height:5.20px;border-radius:50%;background:radial-gradient(circle at 45% 40%,#555,#1a1a1a);box-shadow:0 0.5px 0.8px #000"></div><div style="position:absolute;left:134.60px;top:50.40px;width:1.20px;height:1.20px;border-radius:50%;background:#e06030"></div><div style="position:absolute;left:139.10px;top:49.00px;width:5.20px;height:5.20px;border-radius:50%;background:radial-gradient(circle at 45% 40%,#555,#1a1a1a);box-shadow:0 0.5px 0.8px #000"></div><div style="position:absolute;left:142.30px;top:50.40px;width:1.20px;height:1.20px;border-radius:50%;background:#e06030"></div><div style="position:absolute;left:163.30px;top:31.20px;width:0.60px;height:29.00px;background:#a8a49c"></div><div style="position:absolute;left:149.50px;top:29.60px;width:11.40px;height:1.20px;background:#d05030"></div><div style="position:absolute;left:149.80px;top:35.50px;width:3.00px;height:2.60px;background:#e8e4dc;box-shadow:0 0 0 0.5px #888"></div><div style="position:absolute;left:157.50px;top:35.50px;width:3.00px;height:2.60px;background:#e8e4dc;box-shadow:0 0 0 0.5px #888"></div><div style="position:absolute;left:148.80px;top:41.30px;width:5.20px;height:5.20px;border-radius:50%;background:radial-gradient(circle at 45% 40%,#555,#1a1a1a);box-shadow:0 0.5px 0.8px #000"></div><div style="position:absolute;left:152.00px;top:42.70px;width:1.20px;height:1.20px;border-radius:50%;background:#e06030"></div><div style="position:absolute;left:156.50px;top:41.30px;width:5.20px;height:5.20px;border-radius:50%;background:radial-gradient(circle at 45% 40%,#555,#1a1a1a);box-shadow:0 0.5px 0.8px #000"></div><div style="position:absolute;left:159.70px;top:42.70px;width:1.20px;height:1.20px;border-radius:50%;background:#e06030"></div><div style="position:absolute;left:148.80px;top:49.00px;width:5.20px;height:5.20px;border-radius:50%;background:radial-gradient(circle at 45% 40%,#555,#1a1a1a);box-shadow:0 0.5px 0.8px #000"></div><div style="position:absolute;left:152.00px;top:50.40px;width:1.20px;height:1.20px;border-radius:50%;background:#e06030"></div><div style="position:absolute;left:156.50px;top:49.00px;width:5.20px;height:5.20px;border-radius:50%;background:radial-gradient(circle at 45% 40%,#555,#1a1a1a);box-shadow:0 0.5px 0.8px #000"></div><div style="position:absolute;left:159.70px;top:50.40px;width:1.20px;height:1.20px;border-radius:50%;background:#e06030"></div><div style="position:absolute;left:24.30px;top:62.60px;width:10.00px;height:6.80px;background:#b81818;box-shadow:inset 0 0 0 0.6px #400"></div><div style="position:absolute;left:26.00px;top:64.00px;width:5.00px;height:4.00px;background:#ff4a2a;opacity:0.7"></div><div style="position:absolute;left:35.50px;top:62.60px;width:3.50px;height:3.80px;background:#e8e4dc;box-shadow:0 0 0 0.5px #888"></div><div style="position:absolute;left:40.00px;top:62.60px;width:3.50px;height:3.80px;background:#e8e4dc;box-shadow:0 0 0 0.5px #888"></div><div style="position:absolute;left:36.30px;top:68.00px;width:8.00px;height:2.20px;background:#f05a20"></div><div style="position:absolute;left:50.50px;top:62.60px;width:3.00px;height:3.80px;background:#e85030"></div><div style="position:absolute;left:55.00px;top:62.60px;width:3.50px;height:3.80px;background:#e8e4dc;box-shadow:0 0 0 0.5px #888"></div><div style="position:absolute;left:59.50px;top:62.60px;width:3.50px;height:3.80px;background:#e8e4dc;box-shadow:0 0 0 0.5px #888"></div><div style="position:absolute;left:64.00px;top:62.60px;width:3.50px;height:3.80px;background:#e8e4dc;box-shadow:0 0 0 0.5px #888"></div><div style="position:absolute;left:49.30px;top:68.00px;width:16.70px;height:2.20px;background:#f05a20"></div><div style="position:absolute;left:70.30px;top:57.90px;width:52.00px;height:13.50px;box-shadow:inset 0 0 0 1.2px #40c8e0"></div><div style="position:absolute;left:71.00px;top:58.60px;width:2.00px;height:2.00px;background:#111"></div><div style="position:absolute;left:72.50px;top:61.50px;width:3.30px;height:3.30px;background:#e85030;box-shadow:0 0 0 0.5px #888"></div><div style="position:absolute;left:76.95px;top:61.50px;width:3.30px;height:3.30px;background:#e8e4dc;box-shadow:0 0 0 0.5px #888"></div><div style="position:absolute;left:81.40px;top:61.50px;width:3.30px;height:3.30px;background:#e8e4dc;box-shadow:0 0 0 0.5px #888"></div><div style="position:absolute;left:85.85px;top:61.50px;width:3.30px;height:3.30px;background:#e8e4dc;box-shadow:0 0 0 0.5px #888"></div><div style="position:absolute;left:90.30px;top:61.50px;width:3.30px;height:3.30px;background:#e8e4dc;box-shadow:0 0 0 0.5px #888"></div><div style="position:absolute;left:94.75px;top:61.50px;width:3.30px;height:3.30px;background:#e8e4dc;box-shadow:0 0 0 0.5px #888"></div><div style="position:absolute;left:99.20px;top:61.50px;width:3.30px;height:3.30px;background:#e8e4dc;box-shadow:0 0 0 0.5px #888"></div><div style="position:absolute;left:103.65px;top:61.50px;width:3.30px;height:3.30px;background:#e8e4dc;box-shadow:0 0 0 0.5px #888"></div><div style="position:absolute;left:108.10px;top:61.50px;width:3.30px;height:3.30px;background:#e85030;box-shadow:0 0 0 0.5px #888"></div><div style="position:absolute;left:112.55px;top:61.50px;width:3.30px;height:3.30px;background:#e8e4dc;box-shadow:0 0 0 0.5px #888"></div><div style="position:absolute;left:117.00px;top:61.50px;width:3.30px;height:3.30px;background:#e8e4dc;box-shadow:0 0 0 0.5px #888"></div><div style="position:absolute;left:72.00px;top:67.80px;width:48.50px;height:2.20px;background:#f05a20"></div><div style="position:absolute;left:152.40px;top:60.20px;width:9.00px;height:9.00px;border-radius:50%;background:radial-gradient(circle at 45% 40%,#666,#222)"></div><div style="position:absolute;left:157.70px;top:61.70px;width:1.60px;height:1.60px;border-radius:50%;background:#e06030"></div><div style="position:absolute;left:11.50px;top:72.40px;width:153.00px;height:25.00px;background:#cfcbc3;box-shadow:inset 0 0 0 0.5px #aaa"></div><div style="position:absolute;left:12.00px;top:72.40px;width:11.00px;height:22.40px;box-shadow:inset 0 0 0 0.5px #aaa"></div><div style="position:absolute;left:15.00px;top:75.00px;width:4.50px;height:3.50px;background:#d8d4cc;box-shadow:0 0 0 0.5px #888"></div><div style="position:absolute;left:15.00px;top:81.00px;width:4.50px;height:3.50px;background:#d8d4cc;box-shadow:0 0 0 0.5px #888"></div><div style="position:absolute;left:15.00px;top:87.00px;width:4.50px;height:3.50px;background:#d8d4cc;box-shadow:0 0 0 0.5px #888"></div><div style="position:absolute;left:25.00px;top:73.20px;width:139.00px;height:1.60px;background:#3a3e42"></div><div style="position:absolute;left:25.00px;top:75.80px;width:139.00px;height:1.60px;background:#50565a"></div><div style="position:absolute;left:25.00px;top:78.40px;width:139.00px;height:1.60px;background:#3a3e42"></div><div style="position:absolute;left:25.00px;top:81.00px;width:139.00px;height:1.60px;background:#50565a"></div><div style="position:absolute;left:62.00px;top:72.80px;width:0.60px;height:10.00px;background:#555"></div><div style="position:absolute;left:100.00px;top:72.80px;width:0.60px;height:10.00px;background:#555"></div><div style="position:absolute;left:131.00px;top:72.80px;width:0.60px;height:10.00px;background:#555"></div><div style="position:absolute;left:25.00px;top:81.00px;width:2.00px;height:1.60px;background:#e02020"></div><div style="position:absolute;left:25.40px;top:85.80px;width:7.00px;height:7.30px;background:linear-gradient(#f0ece4,#c0bcb4);box-shadow:0 0 0 0.6px #555,0 1px 0 #666"></div><div style="position:absolute;left:27.90px;top:87.00px;width:2.00px;height:1.00px;background:#333"></div><div style="position:absolute;left:34.17px;top:85.80px;width:7.00px;height:7.30px;background:linear-gradient(#f0ece4,#c0bcb4);box-shadow:0 0 0 0.6px #555,0 1px 0 #666"></div><div style="position:absolute;left:36.67px;top:87.00px;width:2.00px;height:1.00px;background:#333"></div><div style="position:absolute;left:42.94px;top:85.80px;width:7.00px;height:7.30px;background:linear-gradient(#f0ece4,#c0bcb4);box-shadow:0 0 0 0.6px #555,0 1px 0 #666"></div><div style="position:absolute;left:45.44px;top:87.00px;width:2.00px;height:1.00px;background:#333"></div><div style="position:absolute;left:51.71px;top:85.80px;width:7.00px;height:7.30px;background:linear-gradient(#f0ece4,#c0bcb4);box-shadow:0 0 0 0.6px #555,0 1px 0 #666"></div><div style="position:absolute;left:54.21px;top:87.00px;width:2.00px;height:1.00px;background:#333"></div><div style="position:absolute;left:60.48px;top:85.80px;width:7.00px;height:7.30px;background:linear-gradient(#f0ece4,#c0bcb4);box-shadow:0 0 0 0.6px #555,0 1px 0 #666"></div><div style="position:absolute;left:62.98px;top:87.00px;width:2.00px;height:1.00px;background:#333"></div><div style="position:absolute;left:69.25px;top:85.80px;width:7.00px;height:7.30px;background:linear-gradient(#f0ece4,#c0bcb4);box-shadow:0 0 0 0.6px #555,0 1px 0 #666"></div><div style="position:absolute;left:71.75px;top:87.00px;width:2.00px;height:1.00px;background:#333"></div><div style="position:absolute;left:78.02px;top:85.80px;width:7.00px;height:7.30px;background:linear-gradient(#f0ece4,#c0bcb4);box-shadow:0 0 0 0.6px #555,0 1px 0 #666"></div><div style="position:absolute;left:80.52px;top:87.00px;width:2.00px;height:1.00px;background:#333"></div><div style="position:absolute;left:86.79px;top:85.80px;width:7.00px;height:7.30px;background:linear-gradient(#f0ece4,#c0bcb4);box-shadow:0 0 0 0.6px #555,0 1px 0 #666"></div><div style="position:absolute;left:89.29px;top:87.00px;width:2.00px;height:1.00px;background:#333"></div><div style="position:absolute;left:95.56px;top:85.80px;width:7.00px;height:7.30px;background:linear-gradient(#f0ece4,#c0bcb4);box-shadow:0 0 0 0.6px #555,0 1px 0 #666"></div><div style="position:absolute;left:98.06px;top:87.00px;width:2.00px;height:1.00px;background:#333"></div><div style="position:absolute;left:104.33px;top:85.80px;width:7.00px;height:7.30px;background:linear-gradient(#f0ece4,#c0bcb4);box-shadow:0 0 0 0.6px #555,0 1px 0 #666"></div><div style="position:absolute;left:106.83px;top:87.00px;width:2.00px;height:1.00px;background:#333"></div><div style="position:absolute;left:113.10px;top:85.80px;width:7.00px;height:7.30px;background:linear-gradient(#f0ece4,#c0bcb4);box-shadow:0 0 0 0.6px #555,0 1px 0 #666"></div><div style="position:absolute;left:115.60px;top:87.00px;width:2.00px;height:1.00px;background:#333"></div><div style="position:absolute;left:121.87px;top:85.80px;width:7.00px;height:7.30px;background:linear-gradient(#f0ece4,#c0bcb4);box-shadow:0 0 0 0.6px #555,0 1px 0 #666"></div><div style="position:absolute;left:124.37px;top:87.00px;width:2.00px;height:1.00px;background:#333"></div><div style="position:absolute;left:130.64px;top:85.80px;width:7.00px;height:7.30px;background:linear-gradient(#f0ece4,#c0bcb4);box-shadow:0 0 0 0.6px #555,0 1px 0 #666"></div><div style="position:absolute;left:133.14px;top:87.00px;width:2.00px;height:1.00px;background:#333"></div><div style="position:absolute;left:139.41px;top:85.80px;width:7.00px;height:7.30px;background:linear-gradient(#f0ece4,#c0bcb4);box-shadow:0 0 0 0.6px #555,0 1px 0 #666"></div><div style="position:absolute;left:141.91px;top:87.00px;width:2.00px;height:1.00px;background:#333"></div><div style="position:absolute;left:148.18px;top:85.80px;width:7.00px;height:7.30px;background:linear-gradient(#f0ece4,#c0bcb4);box-shadow:0 0 0 0.6px #555,0 1px 0 #666"></div><div style="position:absolute;left:150.68px;top:87.00px;width:2.00px;height:1.00px;background:#333"></div><div style="position:absolute;left:156.95px;top:85.80px;width:7.00px;height:7.30px;background:linear-gradient(#f0ece4,#c0bcb4);box-shadow:0 0 0 0.6px #555,0 1px 0 #666"></div><div style="position:absolute;left:159.45px;top:87.00px;width:2.00px;height:1.00px;background:#333"></div><div style="position:absolute;left:53.91px;top:86.80px;width:2.60px;height:1.50px;background:#e85020"></div></div>
<div style="left:381px;top:299.5px;font-size:3.2px;color:#5a5a5a;line-height:1;white-space:nowrap;will-change:transform;transform:scaleX(-1)">Reverb</div>
<div style="left:381px;top:372.5px;font-size:3.2px;color:#5a5a5a;line-height:1;white-space:nowrap;will-change:transform;transform:scaleX(-1)">Flanger</div>
<div style="left:608px;top:326.5px;font-size:3.2px;color:#5a5a5a;line-height:1;white-space:nowrap;will-change:transform;transform:scaleX(-1)">Tone LFO</div>
<div style="left:608px;top:407.5px;font-size:3.2px;color:#5a5a5a;line-height:1;white-space:nowrap;will-change:transform;transform:scaleX(-1)">Tone LFO</div>
<div style="left:411px;top:253.5px;font-size:3.2px;color:#5a5a5a;line-height:1;white-space:nowrap;will-change:transform;transform:scaleX(-1)">crossfade</div>
<div style="left:455px;top:252.5px;font-size:3.2px;color:#5a5a5a;line-height:1;white-space:nowrap;will-change:transform;transform:scaleX(-1)">overdrive</div>
<div style="left:365px;top:227px;font-size:3.2px;color:#5a5a5a;line-height:1;white-space:nowrap;will-change:transform;transform:scaleX(-1)">compressor</div>
<div style="left:757px;top:335.5px;font-size:3.2px;color:#5a5a5a;line-height:1;white-space:nowrap;will-change:transform;transform:scaleX(-1)">P1 B1</div>
<div style="left:757px;top:416.5px;font-size:3.2px;color:#5a5a5a;line-height:1;white-space:nowrap;will-change:transform;transform:scaleX(-1)">P1 B2</div>
<div style="left:364.1px;top:300.6px;width:1.8px;height:1.8px;border-radius:50%;background:#ccc"></div>
<div style="left:364.1px;top:373.6px;width:1.8px;height:1.8px;border-radius:50%;background:#ccc"></div>
<div style="left:588.1px;top:327.6px;width:1.8px;height:1.8px;border-radius:50%;background:#ccc"></div>
<div style="left:588.1px;top:408.6px;width:1.8px;height:1.8px;border-radius:50%;background:#ccc"></div>
<div style="left:632.6px;top:335.1px;width:1.8px;height:1.8px;border-radius:50%;background:#ccc"></div>
<div style="left:639.1px;top:335.1px;width:1.8px;height:1.8px;border-radius:50%;background:#ccc"></div>
<div style="left:785px;top:176px;width:137px;height:12px;background:#242424;border-radius:3px"></div>
<svg style="position:absolute;left:788px;top:178.5px" width="8" height="7" viewBox="0 0 8 7"><path d="M7 0.5 L1 2 L4 3 L1 4.5 L7 6.5 L6 3.5Z" fill="#19d3f0"/></svg>
<svg style="position:absolute;left:798.5px;top:178px" width="6" height="8" viewBox="0 0 6 8"><path d="M1.5 3.5V2.3a1.5 1.5 0 0 1 3 0V3.5" fill="none" stroke="#ddd" stroke-width="0.9"/><rect x="0.5" y="3.5" width="5" height="4" rx="0.8" fill="#e0e0e0"/></svg>
<div style="left:812px;top:180.5px;width:56px;height:2.6px;background:#1a1a1a;border-radius:1.3px"></div>
<div style="left:866px;top:180.5px;width:10px;height:2.6px;background:#19d3f0;border-radius:1.3px"></div>
<div style="left:863.2px;top:178.5px;width:6.6px;height:6.6px;border-radius:50%;background:radial-gradient(circle at 40% 35%,#aaa,#555)"></div>
<svg style="position:absolute;left:883px;top:178px" width="8" height="8" viewBox="0 0 9 9"><path d="M8 4 L6 1.5 L2 1 L0.5 3 L0.5 8 L7 8 L8.5 6 Z" fill="#dedede"/></svg>
<svg style="position:absolute;left:894px;top:178px" width="8" height="8" viewBox="0 0 9 8"><path d="M1.2 7V4.5a3.3 3.3 0 0 1 6.6 0V7" fill="none" stroke="#cfcfcf" stroke-width="1.1"/><rect x="0.5" y="5" width="2" height="2.5" fill="#e0e0e0"/><rect x="6.5" y="5" width="2" height="2.5" fill="#e0e0e0"/></svg>
<div style="left:904.5px;top:178.5px;width:5.5px;height:5.5px;border:1px solid #777;border-radius:1px"></div>
<div style="left:914px;top:179px;width:0;height:0;border-right:4px solid #19d3f0;border-top:2.8px solid transparent;border-bottom:2.8px solid transparent"></div></body></html>
